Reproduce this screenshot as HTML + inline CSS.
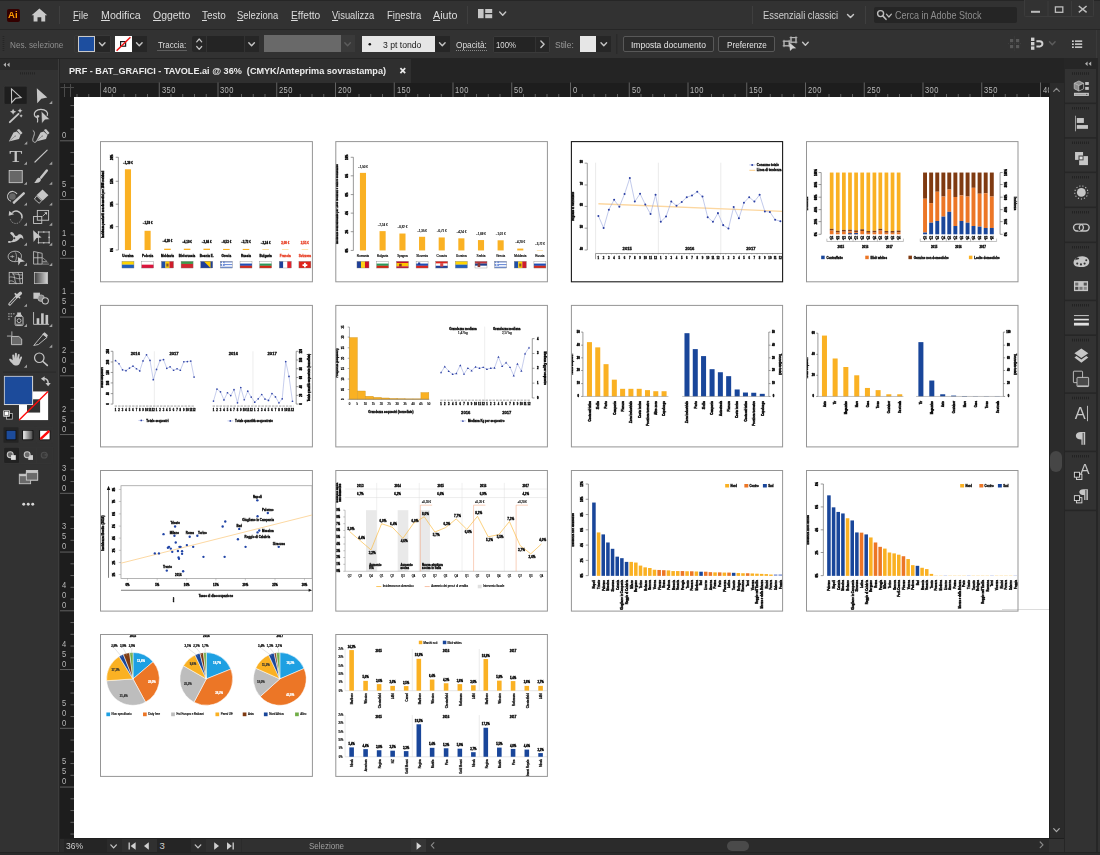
<!DOCTYPE html>
<html lang="it">
<head>
<meta charset="utf-8">
<title>PRF - BAT_GRAFICI - TAVOLE.ai @ 36% (CMYK/Anteprima sovrastampa)</title>
<style>
html,body{margin:0;padding:0;}
body{width:1100px;height:855px;overflow:hidden;background:#323232;font-family:"Liberation Sans", sans-serif;position:relative;}
#app{position:absolute;left:0;top:0;width:1100px;height:855px;overflow:hidden;background:#323232;}
#app div{position:absolute;box-sizing:border-box;}
#app svg{position:absolute;overflow:visible;}
.t{position:absolute;white-space:pre;transform-origin:0 50%;display:block;}
.rl{font-size:9.2px;line-height:10px;color:#b9b9b9;letter-spacing:0.5px;transform:scaleX(0.82);}
u{text-decoration:underline;text-underline-offset:0.5px;text-decoration-thickness:1px;}
svg text{font-family:"Liberation Sans", sans-serif;}
</style>
</head>
<body>
<div id="app">
<div class="menubar" style="left:0px;top:0px;width:1100px;height:30px;background:#323232;border-top:1px solid #262626;border-bottom:1px solid #262626;"></div>
<div style="left:6.5px;top:9px;width:13px;height:12.5px;background:#330000;border-radius:2px;"></div>
<span id="ailogo" class="t" style="left:8.2px;top:10.91px;font-size:8.5px;line-height:9.77px;color:#ff9a00;font-weight:bold;transform:scaleX(1.1294);">Ai</span>
<span id="m0" class="t" style="left:73.2px;top:8.53px;font-size:10.8px;line-height:12.41px;color:#dcdcdc;transform:scaleX(0.8782);"><u>F</u>ile</span>
<span id="m1" class="t" style="left:101.3px;top:8.53px;font-size:10.8px;line-height:12.41px;color:#dcdcdc;transform:scaleX(0.9871);"><u>M</u>odifica</span>
<span id="m2" class="t" style="left:152.8px;top:8.53px;font-size:10.8px;line-height:12.41px;color:#dcdcdc;transform:scaleX(0.9678);"><u>O</u>ggetto</span>
<span id="m3" class="t" style="left:201.8px;top:8.53px;font-size:10.8px;line-height:12.41px;color:#dcdcdc;transform:scaleX(0.9176);"><u>T</u>esto</span>
<span id="m4" class="t" style="left:237.2px;top:8.53px;font-size:10.8px;line-height:12.41px;color:#dcdcdc;transform:scaleX(0.8706);"><u>S</u>eleziona</span>
<span id="m5" class="t" style="left:290.9px;top:8.53px;font-size:10.8px;line-height:12.41px;color:#dcdcdc;transform:scaleX(0.9442);"><u>E</u>ffetto</span>
<span id="m6" class="t" style="left:332.3px;top:8.53px;font-size:10.8px;line-height:12.41px;color:#dcdcdc;transform:scaleX(0.8694);"><u>V</u>isualizza</span>
<span id="m7" class="t" style="left:386.8px;top:8.53px;font-size:10.8px;line-height:12.41px;color:#dcdcdc;transform:scaleX(0.8762);">Fi<u>n</u>estra</span>
<span id="m8" class="t" style="left:432.8px;top:8.53px;font-size:10.8px;line-height:12.41px;color:#dcdcdc;transform:scaleX(0.9909);"><u>A</u>iuto</span>
<span id="ws" class="t" style="left:763.4px;top:8.53px;font-size:10.8px;line-height:12.41px;color:#cfcfcf;transform:scaleX(0.8692);">Essenziali classici</span>
<div style="left:874px;top:7px;width:142.5px;height:16px;background:#252525;border-radius:2px;"></div>
<span id="search" class="t" style="left:894.5px;top:9.03px;font-size:10.8px;line-height:12.41px;color:#8e8e8e;transform:scaleX(0.8330);">Cerca in Adobe Stock</span>
<div style="left:1024px;top:0px;width:70px;height:16.5px;background:#323232;border:1px solid #3c3c3c;border-top:none;border-radius:0 0 2px 2px;"></div>
<div class="controlbar" style="left:0px;top:30px;width:1097px;height:28px;background:#323232;border-right:1px solid #3a3a3a;"></div>
<span id="nosel" class="t" style="left:10.4px;top:39.66px;font-size:9px;line-height:10.34px;color:#8f8f8f;transform:scaleX(0.9044);">Nes. selezione</span>
<div style="left:74px;top:35px;width:37px;height:18px;border:1px solid #383838;border-radius:2px;"></div>
<div style="left:78px;top:36px;width:17px;height:16px;background:#1d4e9f;border:1px solid #c9c9c9;"></div>
<div style="left:95px;top:36px;width:14.5px;height:16px;background:#262626;"></div>
<div style="left:115px;top:36px;width:17px;height:16px;background:#ffffff;"></div>
<div style="left:132px;top:36px;width:14.5px;height:16px;background:#262626;"></div>
<span id="traccia" class="t" style="left:157.8px;top:39.66px;font-size:9px;line-height:10.34px;color:#dcdcdc;transform:scaleX(0.8904);">Traccia:</span>
<div style="left:192px;top:36px;width:14.3px;height:16px;background:#262626;border-radius:2px 0 0 2px;"></div>
<div style="left:207px;top:36px;width:37px;height:16px;background:#242424;"></div>
<div style="left:244.6px;top:36px;width:14.4px;height:16px;background:#262626;"></div>
<div style="left:264px;top:35.4px;width:76.5px;height:17px;background:#696969;"></div>
<div style="left:340.5px;top:35.4px;width:14.5px;height:17px;background:#3a3a3a;"></div>
<div style="left:361.8px;top:36.2px;width:72.8px;height:15.8px;background:#e6e6e6;"></div>
<span id="brush" class="t" style="left:382.5px;top:39.66px;font-size:9px;line-height:10.34px;color:#1a1a1a;transform:scaleX(0.9589);">3 pt tondo</span>
<div style="left:435px;top:36px;width:14.5px;height:16px;background:#262626;"></div>
<span id="opac" class="t" style="left:456.3px;top:39.66px;font-size:9px;line-height:10.34px;color:#dcdcdc;transform:scaleX(0.9215);">Opacità:</span>
<div style="left:492.5px;top:35.5px;width:57.5px;height:17px;border:1px solid #3a3a3a;border-radius:2px;"></div>
<div style="left:493.5px;top:36.5px;width:41.5px;height:15px;background:#242424;"></div>
<span id="opv" class="t" style="left:496px;top:39.66px;font-size:9px;line-height:10.34px;color:#dcdcdc;transform:scaleX(0.8684);">100%</span>
<div style="left:535.8px;top:36.5px;width:13.2px;height:15px;background:#262626;"></div>
<span id="stile" class="t" style="left:555.3px;top:39.66px;font-size:9px;line-height:10.34px;color:#9c9c9c;transform:scaleX(0.9393);">Stile:</span>
<div style="left:580px;top:36px;width:16px;height:16px;background:#e6e6e6;"></div>
<div style="left:596px;top:36px;width:15px;height:16px;background:#262626;"></div>
<div style="left:622.5px;top:36px;width:91.3px;height:16px;background:#2c2c2c;border:1px solid #585858;border-radius:2px;"></div>
<span id="impdoc" class="t" style="left:630.6px;top:39.66px;font-size:9px;line-height:10.34px;color:#e4e4e4;transform:scaleX(0.9475);">Imposta documento</span>
<div style="left:718.2px;top:36px;width:56.7px;height:16px;background:#2c2c2c;border:1px solid #585858;border-radius:2px;"></div>
<span id="pref" class="t" style="left:726.5px;top:39.66px;font-size:9px;line-height:10.34px;color:#e4e4e4;transform:scaleX(0.9039);">Preferenze</span>
<div class="tabbar" style="left:0px;top:58px;width:1100px;height:24.5px;background:#242424;"></div>
<div class="tab" style="left:60px;top:59px;width:351px;height:23.5px;background:#2f2f2f;"></div>
<span id="tabtitle" class="t" style="left:68.5px;top:66.07px;font-size:9.2px;line-height:10.57px;color:#ececec;font-weight:bold;transform:scaleX(0.9911);">PRF - BAT_GRAFICI - TAVOLE.ai @ 36%  (CMYK/Anteprima sovrastampa)</span>
<div class="rulers" style="left:60px;top:82.5px;width:989px;height:755.5px;background:#1d1d1d;"></div>
<div class="canvas" style="left:74px;top:97px;width:975px;height:741px;background:#ffffff;"></div>
<span class="t rl" style="left:102.80px;top:84.6px;">400</span>
<span class="t rl" style="left:161.55px;top:84.6px;">350</span>
<span class="t rl" style="left:220.30px;top:84.6px;">300</span>
<span class="t rl" style="left:279.05px;top:84.6px;">250</span>
<span class="t rl" style="left:337.80px;top:84.6px;">200</span>
<span class="t rl" style="left:396.55px;top:84.6px;">150</span>
<span class="t rl" style="left:455.30px;top:84.6px;">100</span>
<span class="t rl" style="left:514.05px;top:84.6px;">50</span>
<span class="t rl" style="left:572.80px;top:84.6px;">0</span>
<span class="t rl" style="left:631.55px;top:84.6px;">50</span>
<span class="t rl" style="left:690.30px;top:84.6px;">100</span>
<span class="t rl" style="left:749.05px;top:84.6px;">150</span>
<span class="t rl" style="left:807.80px;top:84.6px;">200</span>
<span class="t rl" style="left:866.55px;top:84.6px;">250</span>
<span class="t rl" style="left:925.30px;top:84.6px;">300</span>
<span class="t rl" style="left:984.05px;top:84.6px;">350</span>
<div style="left:1042.8px;top:84px;width:6.2000000000000455px;height:12px;overflow:hidden;"><span class="t rl" style="left:0;top:0.6px;">400</span></div>
<span class="t rl" style="left:61.6px;top:130.20px;">0</span>
<span class="t rl" style="left:61.6px;top:178.85px;">5</span>
<span class="t rl" style="left:61.6px;top:188.95px;">0</span>
<span class="t rl" style="left:61.6px;top:227.50px;">1</span>
<span class="t rl" style="left:61.6px;top:237.60px;">0</span>
<span class="t rl" style="left:61.6px;top:247.70px;">0</span>
<span class="t rl" style="left:61.6px;top:286.25px;">1</span>
<span class="t rl" style="left:61.6px;top:296.35px;">5</span>
<span class="t rl" style="left:61.6px;top:306.45px;">0</span>
<span class="t rl" style="left:61.6px;top:345.00px;">2</span>
<span class="t rl" style="left:61.6px;top:355.10px;">0</span>
<span class="t rl" style="left:61.6px;top:365.20px;">0</span>
<span class="t rl" style="left:61.6px;top:403.75px;">2</span>
<span class="t rl" style="left:61.6px;top:413.85px;">5</span>
<span class="t rl" style="left:61.6px;top:423.95px;">0</span>
<span class="t rl" style="left:61.6px;top:462.50px;">3</span>
<span class="t rl" style="left:61.6px;top:472.60px;">0</span>
<span class="t rl" style="left:61.6px;top:482.70px;">0</span>
<span class="t rl" style="left:61.6px;top:521.25px;">3</span>
<span class="t rl" style="left:61.6px;top:531.35px;">5</span>
<span class="t rl" style="left:61.6px;top:541.45px;">0</span>
<span class="t rl" style="left:61.6px;top:580.00px;">4</span>
<span class="t rl" style="left:61.6px;top:590.10px;">0</span>
<span class="t rl" style="left:61.6px;top:600.20px;">0</span>
<span class="t rl" style="left:61.6px;top:638.75px;">4</span>
<span class="t rl" style="left:61.6px;top:648.85px;">5</span>
<span class="t rl" style="left:61.6px;top:658.95px;">0</span>
<span class="t rl" style="left:61.6px;top:697.50px;">5</span>
<span class="t rl" style="left:61.6px;top:707.60px;">0</span>
<span class="t rl" style="left:61.6px;top:717.70px;">0</span>
<span class="t rl" style="left:61.6px;top:756.25px;">5</span>
<span class="t rl" style="left:61.6px;top:766.35px;">5</span>
<span class="t rl" style="left:61.6px;top:776.45px;">0</span>
<div class="vscroll" style="left:1049px;top:82.5px;width:14.5px;height:755.5px;background:#2b2b2b;border-left:1px solid #1f1f1f;"></div>
<div style="left:1050.2px;top:450.8px;width:12px;height:21px;background:#464646;border-radius:6px;"></div>
<div class="statusbar" style="left:60px;top:838px;width:1003.5px;height:13.5px;background:#2b2b2b;border-top:1px solid #1f1f1f;"></div>
<div style="left:64px;top:839px;width:43px;height:12.5px;background:#252525;"></div>
<span id="zoomv" class="t" style="left:66.2px;top:841.00px;font-size:9.5px;line-height:10.92px;color:#d0d0d0;transform:scaleX(0.8940);">36%</span>
<div style="left:107.5px;top:839px;width:13.5px;height:12.5px;background:#2b2b2b;"></div>
<div style="left:121.5px;top:839px;width:35px;height:12.5px;background:#303030;"></div>
<div style="left:157px;top:839px;width:34px;height:12.5px;background:#252525;"></div>
<span id="abn" class="t" style="left:159.5px;top:841.20px;font-size:9.5px;line-height:10.92px;color:#d0d0d0;">3</span>
<div style="left:191.5px;top:839px;width:13.5px;height:12.5px;background:#2b2b2b;"></div>
<div style="left:205.5px;top:839px;width:35px;height:12.5px;background:#303030;"></div>
<div style="left:241.5px;top:839px;width:169px;height:12.5px;background:#303030;"></div>
<span id="seltool" class="t" style="left:308.7px;top:841.00px;font-size:9.5px;line-height:10.92px;color:#a0a0a0;transform:scaleX(0.8386);">Selezione</span>
<div style="left:411px;top:839px;width:15px;height:12.5px;background:#363636;"></div>
<div style="left:727px;top:840.5px;width:22px;height:10.5px;background:#4a4a4a;border-radius:5.5px;"></div>
<div style="left:1049px;top:838.5px;width:14.5px;height:13px;background:#323232;"></div>
<div style="left:0px;top:851.5px;width:1100px;height:3.5px;background:#2a2a2a;border-top:1px solid #232323;"></div>
<div class="toolbar-edge" style="left:0px;top:59px;width:60px;height:792.5px;background:#262626;"></div>
<div class="toolbar" style="left:0px;top:59px;width:59px;height:792.5px;background:#323232;border-right:1px solid #3c3c3c;"></div>
<div style="left:0px;top:59px;width:58px;height:10.5px;background:#2a2a2a;"></div>
<div class="dock" style="left:1063.5px;top:58px;width:36.5px;height:793.5px;background:#323232;border-left:1px solid #262626;"></div>
<div style="left:1096px;top:58px;width:1.5px;height:793.5px;background:#262626;"></div>
<div style="left:1064.5px;top:58px;width:31.5px;height:10.6px;background:#262626;"></div>
<svg class="icons" width="1100" height="855" viewBox="0 0 1100 855" style="left:0;top:0;filter:blur(0.3px);"><path d="M31.6,15.3 L39.4,8.4 L47.2,15.3 L45.2,15.3 L45.2,21.6 L41.3,21.6 L41.3,17.2 L37.5,17.2 L37.5,21.6 L33.6,21.6 L33.6,15.3 Z" fill="#c9c9c9"/>
<rect x="59" y="6" width="1" height="18" fill="#3f3f3f"/>
<rect x="467" y="6" width="1" height="18" fill="#3f3f3f"/>
<rect x="478" y="9" width="5.6" height="9.2" fill="#c6c6c6"/><rect x="485.2" y="9" width="7" height="4" fill="#c6c6c6"/><rect x="485.2" y="14.2" width="7" height="4" fill="#c6c6c6"/>
<path d="M499.7,12.0 L502.7,15.2 L505.7,12.0" fill="none" stroke="#c6c6c6" stroke-width="1.4" stroke-linecap="round" stroke-linejoin="round"/>
<rect x="752" y="6" width="1" height="18" fill="#3f3f3f"/>
<path d="M847.5,14.4 L850.5,17.6 L853.5,14.4" fill="none" stroke="#c6c6c6" stroke-width="1.4" stroke-linecap="round" stroke-linejoin="round"/>
<rect x="865" y="6" width="1" height="18" fill="#3f3f3f"/>
<circle cx="880.6" cy="13.6" r="3" fill="none" stroke="#bdbdbd" stroke-width="1.4"/><path d="M882.8,15.9 L886,19.3" stroke="#bdbdbd" stroke-width="1.6" stroke-linecap="round"/>
<path d="M886.4,14.2 L888.9,17.0 L891.4,14.2" fill="none" stroke="#bdbdbd" stroke-width="1.2" stroke-linecap="round" stroke-linejoin="round"/>
<rect x="1047.5" y="1" width="1" height="15" fill="#3c3c3c"/><rect x="1071" y="1" width="1" height="15" fill="#3c3c3c"/>
<rect x="1031" y="10.8" width="9" height="2" fill="#bdbdbd"/>
<rect x="1055.4" y="6.9" width="7.4" height="5.4" fill="none" stroke="#bdbdbd" stroke-width="1.3"/>
<path d="M1078.8,6 L1086.6,12.4 M1086.6,6 L1078.8,12.4" stroke="#bdbdbd" stroke-width="1.5"/>
<path d="M3.5,36 V52" stroke="#262626" stroke-width="1.6" stroke-dasharray="1 1"/>
<path d="M99.4,42.8 L102.2,45.8 L105.0,42.8" fill="none" stroke="#c4c4c4" stroke-width="1.4" stroke-linecap="round" stroke-linejoin="round"/>
<rect x="120.6" y="41.6" width="5" height="4.6" fill="none" stroke="#1a1a1a" stroke-width="1.2"/><path d="M116.6,50.8 L130.4,37.2" stroke="#f01414" stroke-width="1.5"/>
<path d="M136.5,42.8 L139.3,45.8 L142.10000000000002,42.8" fill="none" stroke="#c4c4c4" stroke-width="1.4" stroke-linecap="round" stroke-linejoin="round"/>
<path d="M157.5,50.5 H186.5" stroke="#8a8a8a" stroke-width="1" stroke-dasharray="1 1"/>
<path d="M196.7,41.8 L199.2,39.0 L201.7,41.8" fill="none" stroke="#c4c4c4" stroke-width="1.2" stroke-linecap="round" stroke-linejoin="round"/>
<path d="M196.7,46.5 L199.2,49.3 L201.7,46.5" fill="none" stroke="#c4c4c4" stroke-width="1.2" stroke-linecap="round" stroke-linejoin="round"/>
<path d="M248.79999999999998,42.8 L251.6,45.8 L254.4,42.8" fill="none" stroke="#c4c4c4" stroke-width="1.4" stroke-linecap="round" stroke-linejoin="round"/>
<path d="M344.8,42.8 L347.6,45.8 L350.40000000000003,42.8" fill="none" stroke="#5c5c5c" stroke-width="1.4" stroke-linecap="round" stroke-linejoin="round"/>
<circle cx="369.8" cy="44.2" r="1.3" fill="#111"/>
<path d="M439.5,42.8 L442.3,45.8 L445.1,42.8" fill="none" stroke="#c4c4c4" stroke-width="1.4" stroke-linecap="round" stroke-linejoin="round"/>
<path d="M456,50.5 H487.5" stroke="#8a8a8a" stroke-width="1" stroke-dasharray="1 1"/>
<path d="M540.9,41.0 L544.1,44.2 L540.9,47.400000000000006" fill="none" stroke="#c4c4c4" stroke-width="1.4" stroke-linecap="round" stroke-linejoin="round"/>
<path d="M601.0,42.8 L603.8,45.8 L606.5999999999999,42.8" fill="none" stroke="#c4c4c4" stroke-width="1.4" stroke-linecap="round" stroke-linejoin="round"/>
<rect x="616" y="34" width="1.4" height="20" fill="#2a2a2a"/>
<rect x="784" y="41.2" width="5.2" height="4.6" fill="none" stroke="#b8b8b8" stroke-width="1"/><rect x="791" y="37.6" width="5" height="4.6" fill="none" stroke="#b8b8b8" stroke-width="1"/><path d="M782.6,41.2 h8 M782.6,45.8 h8 M784,39.8 v7.4 M789.2,39.8 v7.4 M789.6,37.6 h7.8 M789.6,42.2 h7.8 M791,36.2 v7.4 M796,36.2 v7.4" stroke="#b8b8b8" stroke-width="0.8" fill="none"/><path d="M789.2,42.6 L796.2,48.2 L792.6,48.4 L790,51 Z" fill="#d0d0d0"/>
<path d="M802.6,42.2 L805.4,45.2 L808.1999999999999,42.2" fill="none" stroke="#c4c4c4" stroke-width="1.4" stroke-linecap="round" stroke-linejoin="round"/>
<g fill="#585858"><rect x="1010" y="39" width="3.2" height="3.2"/><rect x="1016" y="39" width="3.2" height="3.2"/><rect x="1010" y="45" width="3.2" height="3.2"/><rect x="1016" y="45" width="3.2" height="3.2"/></g><path d="M1014.6,36.5 V51 M1008,43.6 H1021.5" stroke="#444" stroke-width="0.8" stroke-dasharray="1 1"/>
<g fill="#d0d0d0"><rect x="1031" y="37.6" width="3.4" height="3.4"/><rect x="1031" y="42" width="3.4" height="3.4"/><rect x="1031" y="46.4" width="3.4" height="3.4"/></g><path d="M1036.4,41.2 H1039.8 A2.6,2.6 0 0 1 1039.8,46.4 H1036.4" fill="none" stroke="#d0d0d0" stroke-width="2"/>
<path d="M1049.5,41.7 L1052.3,44.7 L1055.1,41.7" fill="none" stroke="#5c5c5c" stroke-width="1.4" stroke-linecap="round" stroke-linejoin="round"/>
<g fill="#d0d0d0"><rect x="1072" y="40.4" width="1.8" height="1.6"/><rect x="1072" y="43.4" width="1.8" height="1.6"/><rect x="1072" y="46.4" width="1.8" height="1.6"/><rect x="1075" y="40.4" width="7.2" height="1.5"/><rect x="1075" y="43.4" width="7.2" height="1.5"/><rect x="1075" y="46.4" width="7.2" height="1.5"/></g>
<path d="M400.4,68.2 L405.2,73.2 M405.2,68.2 L400.4,73.2" stroke="#e8e8e8" stroke-width="1.7"/>
<path d="M64.5,84 V97 M70.5,84 V97 M60.5,87.5 H74" stroke="#4a4a4a" stroke-width="1" fill="none"/>
<path d="M77.00,94 V97 M88.75,94 V97 M100.50,82.5 V97 M112.25,94 V97 M124.00,94 V97 M135.75,94 V97 M147.50,94 V97 M159.25,82.5 V97 M171.00,94 V97 M182.75,94 V97 M194.50,94 V97 M206.25,94 V97 M218.00,82.5 V97 M229.75,94 V97 M241.50,94 V97 M253.25,94 V97 M265.00,94 V97 M276.75,82.5 V97 M288.50,94 V97 M300.25,94 V97 M312.00,94 V97 M323.75,94 V97 M335.50,82.5 V97 M347.25,94 V97 M359.00,94 V97 M370.75,94 V97 M382.50,94 V97 M394.25,82.5 V97 M406.00,94 V97 M417.75,94 V97 M429.50,94 V97 M441.25,94 V97 M453.00,82.5 V97 M464.75,94 V97 M476.50,94 V97 M488.25,94 V97 M500.00,94 V97 M511.75,82.5 V97 M523.50,94 V97 M535.25,94 V97 M547.00,94 V97 M558.75,94 V97 M570.50,82.5 V97 M582.25,94 V97 M594.00,94 V97 M605.75,94 V97 M617.50,94 V97 M629.25,82.5 V97 M641.00,94 V97 M652.75,94 V97 M664.50,94 V97 M676.25,94 V97 M688.00,82.5 V97 M699.75,94 V97 M711.50,94 V97 M723.25,94 V97 M735.00,94 V97 M746.75,82.5 V97 M758.50,94 V97 M770.25,94 V97 M782.00,94 V97 M793.75,94 V97 M805.50,82.5 V97 M817.25,94 V97 M829.00,94 V97 M840.75,94 V97 M852.50,94 V97 M864.25,82.5 V97 M876.00,94 V97 M887.75,94 V97 M899.50,94 V97 M911.25,94 V97 M923.00,82.5 V97 M934.75,94 V97 M946.50,94 V97 M958.25,94 V97 M970.00,94 V97 M981.75,82.5 V97 M993.50,94 V97 M1005.25,94 V97 M1017.00,94 V97 M1028.75,94 V97 M1040.50,82.5 V97" stroke="#626262" stroke-width="1" fill="none"/>
<path d="M70.5,105.55 H74 M70.5,117.30 H74 M70.5,129.05 H74 M60,140.80 H74 M70.5,152.55 H74 M70.5,164.30 H74 M70.5,176.05 H74 M70.5,187.80 H74 M60,199.55 H74 M70.5,211.30 H74 M70.5,223.05 H74 M70.5,234.80 H74 M70.5,246.55 H74 M60,258.30 H74 M70.5,270.05 H74 M70.5,281.80 H74 M70.5,293.55 H74 M70.5,305.30 H74 M60,317.05 H74 M70.5,328.80 H74 M70.5,340.55 H74 M70.5,352.30 H74 M70.5,364.05 H74 M60,375.80 H74 M70.5,387.55 H74 M70.5,399.30 H74 M70.5,411.05 H74 M70.5,422.80 H74 M60,434.55 H74 M70.5,446.30 H74 M70.5,458.05 H74 M70.5,469.80 H74 M70.5,481.55 H74 M60,493.30 H74 M70.5,505.05 H74 M70.5,516.80 H74 M70.5,528.55 H74 M70.5,540.30 H74 M60,552.05 H74 M70.5,563.80 H74 M70.5,575.55 H74 M70.5,587.30 H74 M70.5,599.05 H74 M60,610.80 H74 M70.5,622.55 H74 M70.5,634.30 H74 M70.5,646.05 H74 M70.5,657.80 H74 M60,669.55 H74 M70.5,681.30 H74 M70.5,693.05 H74 M70.5,704.80 H74 M70.5,716.55 H74 M60,728.30 H74 M70.5,740.05 H74 M70.5,751.80 H74 M70.5,763.55 H74 M70.5,775.30 H74 M60,787.05 H74 M70.5,798.80 H74 M70.5,810.55 H74 M70.5,822.30 H74 M70.5,834.05 H74" stroke="#626262" stroke-width="1" fill="none"/>
<path d="M1053.7,91.3 L1056.5,88.3 L1059.3,91.3" fill="none" stroke="#8c8c8c" stroke-width="1.2" stroke-linecap="round" stroke-linejoin="round"/>
<path d="M1053.7,828.7 L1056.5,831.7 L1059.3,828.7" fill="none" stroke="#a8a8a8" stroke-width="1.2" stroke-linecap="round" stroke-linejoin="round"/>
<path d="M110.8,844.9 L113.6,847.9 L116.39999999999999,844.9" fill="none" stroke="#c4c4c4" stroke-width="1.3" stroke-linecap="round" stroke-linejoin="round"/>
<path d="M129.2,842.4 V849.6" stroke="#d0d0d0" stroke-width="1.3"/><path d="M135.6,842.2 L135.6,849.8 L130.6,846 Z" fill="#d0d0d0"/>
<path d="M148.8,842.2 L148.8,849.8 L144,846 Z" fill="#d0d0d0"/>
<path d="M195.2,844.9 L198,847.9 L200.8,844.9" fill="none" stroke="#c4c4c4" stroke-width="1.3" stroke-linecap="round" stroke-linejoin="round"/>
<path d="M214.2,842.2 L214.2,849.8 L219,846 Z" fill="#d0d0d0"/>
<path d="M227,842.2 L227,849.8 L231.8,846 Z" fill="#d0d0d0"/><path d="M233.2,842.4 V849.6" stroke="#d0d0d0" stroke-width="1.3"/>
<path d="M416.6,842.2 L416.6,849.8 L421.4,846 Z" fill="#d6d6d6"/>
<path d="M433.90000000000003,842.6999999999999 L431.3,845.4 L433.90000000000003,848.1" fill="none" stroke="#8a8a8a" stroke-width="1.1" stroke-linecap="round" stroke-linejoin="round"/>
<path d="M1040.1999999999998,842.0 L1043.0,844.8 L1040.1999999999998,847.5999999999999" fill="none" stroke="#8a8a8a" stroke-width="1.2" stroke-linecap="round" stroke-linejoin="round"/>
<path d="M6,62.6 L3.4,64.8 L6,67 Z M9.6,62.6 L7,64.8 L9.6,67 Z" fill="#b0b0b0"/>
<path d="M20,73.4 H35.5" stroke="#242424" stroke-width="2.4" stroke-dasharray="1 1"/>
<path d="M1087.6,61.6 L1085,63.8 L1087.6,66 Z M1091.2,61.6 L1088.6,63.8 L1091.2,66 Z" fill="#b0b0b0"/>
<g transform="translate(0,80) scale(0.081855)"><rect x="50" y="75" width="282" height="222" rx="14" fill="#1e1e1e" stroke="#3b3b3b" stroke-width="7"/><path d="M140,108 L258,214 L190,224 L142,276 Z" fill="none" stroke="#c6c6c6" stroke-width="13" stroke-linejoin="miter"/><path d="M450,100 L578,215 L505,228 L455,285 Z" fill="#c6c6c6"/><path d="M600,292 h38 v-38 Z" fill="#a0a0a0"/><path d="M120,515 L226,414" stroke="#c6c6c6" stroke-width="23" stroke-linecap="round"/><polygon points="160.0,350.0 172.0,376.0 198.0,388.0 172.0,400.0 160.0,426.0 148.0,400.0 122.0,388.0 148.0,376.0" fill="#c6c6c6"/><polygon points="245.0,345.0 254.2,365.8 275.0,375.0 254.2,384.2 245.0,405.0 235.8,384.2 215.0,375.0 235.8,365.8" fill="#c6c6c6"/><polygon points="258.0,417.0 265.8,429.2 278.0,437.0 265.8,444.8 258.0,457.0 250.2,444.8 238.0,437.0 250.2,429.2" fill="#c6c6c6"/><path d="M578,432 C592,392 560,360 500,360 C440,360 414,395 420,425 C426,456 456,462 470,450 C480,438 464,428 454,440 C446,456 472,482 458,512" fill="none" stroke="#c6c6c6" stroke-width="15" stroke-linecap="round"/><path d="M505,383 L606,480 L548,487 L512,530 Z" fill="#c6c6c6" stroke="#323232" stroke-width="5"/><path d="M108,752 L165,642 L205,628 L250,672 L232,722 Z" fill="#c6c6c6"/><path d="M205,612 L232,598 L275,648 L252,668 Z" fill="#c6c6c6"/><path d="M120,742 L182,688" stroke="#555" stroke-width="6"/><circle cx="186" cy="684" r="7" fill="#555"/><path d="M295,787 h38 v-38 Z" fill="#a0a0a0"/><path d="M438,752 L495,642 L535,628 L580,672 L562,722 Z" fill="#c6c6c6"/><path d="M535,612 L562,598 L605,648 L582,668 Z" fill="#c6c6c6"/><path d="M450,742 L512,688" stroke="#555" stroke-width="6"/><circle cx="516" cy="684" r="7" fill="#555"/><path d="M405,618 C446,640 400,700 400,730 C400,765 436,772 444,750" fill="none" stroke="#c6c6c6" stroke-width="11" stroke-linecap="round"/></g>
<g transform="translate(0,145) scale(0.081855)"><text x="0" y="0" font-size="212" text-anchor="middle" fill="#c6c6c6" stroke="#c6c6c6" stroke-width="3" transform="translate(193,208) scale(1.2,1)" style="font-family:'Liberation Serif',serif">T</text><path d="M292,240 h38 v-38 Z" fill="#a0a0a0"/><path d="M427,208 L576,62" stroke="#c6c6c6" stroke-width="14" stroke-linecap="round"/><path d="M600,240 h38 v-38 Z" fill="#a0a0a0"/><rect x="112" y="312" width="160" height="148" fill="#676767" stroke="#c6c6c6" stroke-width="11"/><path d="M292,487 h38 v-38 Z" fill="#a0a0a0"/><path d="M502,398 L572,312" stroke="#c6c6c6" stroke-width="30" stroke-linecap="round"/><path d="M418,464 C442,442 444,410 468,400 C492,394 508,416 496,438 C482,462 452,468 418,464 Z" fill="#c6c6c6"/><path d="M600,487 h38 v-38 Z" fill="#a0a0a0"/><path d="M135,688 A62,62 0 1 1 208,600" fill="none" stroke="#c6c6c6" stroke-width="13"/><circle cx="152" cy="630" r="40" fill="#666"/><path d="M172,702 L290,590" stroke="#c6c6c6" stroke-width="30" stroke-linecap="round"/><path d="M160,716 L152,690 L186,716 Z" fill="#c6c6c6"/><path d="M292,740 h38 v-38 Z" fill="#a0a0a0"/><path d="M520,545 L592,615 L520,682 L448,612 Z" fill="#c6c6c6"/><path d="M448,622 L510,682 L478,712 L420,660 Z" fill="none" stroke="#c6c6c6" stroke-width="11" stroke-linejoin="round"/><path d="M600,740 h38 v-38 Z" fill="#a0a0a0"/></g>
<g transform="translate(0,205) scale(0.081855)"><path d="M150,92 A72,72 0 0 1 266,165" fill="none" stroke="#c6c6c6" stroke-width="19"/><path d="M106,132 L112,74 L172,112 Z" fill="#c6c6c6"/><path d="M262,170 A70,70 0 0 1 125,170" fill="none" stroke="#c6c6c6" stroke-width="10" stroke-dasharray="10 12"/><path d="M292,252 h38 v-38 Z" fill="#a0a0a0"/><rect x="410" y="140" width="100" height="86" fill="none" stroke="#c6c6c6" stroke-width="11"/><rect x="456" y="66" width="138" height="120" fill="none" stroke="#c6c6c6" stroke-width="11"/><path d="M520,138 L566,94" stroke="#c6c6c6" stroke-width="11"/><path d="M540,88 H574 V122 Z" fill="#c6c6c6"/><path d="M600,252 h38 v-38 Z" fill="#a0a0a0"/><path d="M100,452 C150,450 170,420 160,390 C150,360 120,360 125,340 C135,320 160,330 170,350 C185,390 215,380 225,360 C250,350 290,370 285,420 C270,400 250,395 240,410 C215,445 170,465 100,452 Z" fill="#c6c6c6"/><path d="M100,462 h30 v-22 h-30 Z" fill="#c6c6c6"/><circle cx="175" cy="405" r="12" fill="#323232"/><path d="M292,497 h38 v-38 Z" fill="#a0a0a0"/><rect x="470" y="330" width="130" height="132" fill="none" stroke="#c6c6c6" stroke-width="10"/><circle cx="470" cy="330" r="10" fill="#c6c6c6"/><circle cx="535" cy="330" r="10" fill="#c6c6c6"/><circle cx="600" cy="330" r="10" fill="#c6c6c6"/><circle cx="600" cy="396" r="10" fill="#c6c6c6"/><circle cx="600" cy="462" r="10" fill="#c6c6c6"/><circle cx="535" cy="462" r="10" fill="#c6c6c6"/><circle cx="470" cy="462" r="10" fill="#c6c6c6"/><path d="M405,308 L508,396 L446,402 L410,452 Z" fill="#c6c6c6"/><path d="M600,497 h38 v-38 Z" fill="#a0a0a0"/><path d="M100,630 C100,590 140,565 185,565 C235,565 265,595 262,630 C260,660 240,690 185,692 C130,692 100,665 100,630 Z" fill="none" stroke="#c6c6c6" stroke-width="11"/><path d="M125,630 H175 M150,612 V648 M190,580 C205,610 205,650 190,685" stroke="#c6c6c6" stroke-width="8" fill="none"/><path d="M218,635 L305,690 L250,697 L225,740 Z" fill="#c6c6c6"/><path d="M292,745 h38 v-38 Z" fill="#a0a0a0"/><path d="M410,568 L515,590 V722 H410 Z M410,645 H515 M462,580 V722" fill="none" stroke="#c6c6c6" stroke-width="10"/><path d="M515,640 L575,690 H515 M515,722 H600" fill="none" stroke="#9a9a9a" stroke-width="10"/><path d="M520,700 H590" stroke="#7a7a7a" stroke-width="8"/><path d="M600,745 h38 v-38 Z" fill="#a0a0a0"/></g>
<g transform="translate(0,265) scale(0.081855)"><rect x="112" y="90" width="162" height="138" fill="none" stroke="#c6c6c6" stroke-width="10"/><path d="M112,150 C160,130 220,190 274,160 M150,90 C190,130 170,190 200,228 M215,90 C250,120 235,200 250,228 M112,200 C150,180 170,210 200,228 M150,110 C190,100 250,130 274,120" fill="none" stroke="#c6c6c6" stroke-width="9"/><defs><linearGradient id="gradtool" x1="0" y1="0" x2="1" y2="0"><stop offset="0" stop-color="#3c3c3c"/><stop offset="1" stop-color="#d8d8d8"/></linearGradient><linearGradient id="gradbtn" x1="0" y1="0" x2="1" y2="0"><stop offset="0" stop-color="#f0f0f0"/><stop offset="1" stop-color="#4a4a4a"/></linearGradient></defs><rect x="420" y="92" width="162" height="136" fill="url(#gradtool)" stroke="#c6c6c6" stroke-width="9"/><path d="M118,480 L205,385" stroke="#c6c6c6" stroke-width="34" stroke-linecap="round"/><path d="M122,476 L200,392" stroke="#323232" stroke-width="13" stroke-linecap="round"/><path d="M205,385 L250,345" stroke="#c6c6c6" stroke-width="40" stroke-linecap="round"/><path d="M185,350 L240,400" stroke="#c6c6c6" stroke-width="18" stroke-linecap="round"/><path d="M292,510 h38 v-38 Z" fill="#a0a0a0"/><rect x="408" y="338" width="80" height="75" fill="#c6c6c6"/><circle cx="502" cy="405" r="40" fill="#8a8a8a" stroke="#c6c6c6" stroke-width="9"/><circle cx="553" cy="438" r="38" fill="#323232" stroke="#c6c6c6" stroke-width="13"/><rect x="185" y="628" width="96" height="112" rx="14" fill="none" stroke="#c6c6c6" stroke-width="12"/><rect x="210" y="580" width="46" height="34" fill="#c6c6c6"/><rect x="198" y="608" width="70" height="16" fill="#c6c6c6"/><circle cx="233" cy="680" r="24" fill="none" stroke="#c6c6c6" stroke-width="11"/><rect x="193" y="716" width="80" height="18" fill="#8a8a8a"/><rect x="100" y="588" width="18" height="16" fill="#9a9a9a"/><rect x="130" y="588" width="18" height="16" fill="#9a9a9a"/><rect x="160" y="588" width="18" height="16" fill="#9a9a9a"/><rect x="100" y="620" width="18" height="16" fill="#9a9a9a"/><rect x="130" y="620" width="18" height="16" fill="#9a9a9a"/><rect x="100" y="652" width="18" height="16" fill="#9a9a9a"/><path d="M292,757 h38 v-38 Z" fill="#a0a0a0"/><path d="M410,575 V725 H598" fill="none" stroke="#c6c6c6" stroke-width="11"/><rect x="448" y="650" width="32" height="72" fill="#c6c6c6"/><rect x="502" y="590" width="32" height="132" fill="#c6c6c6"/><rect x="556" y="610" width="32" height="112" fill="#c6c6c6"/><path d="M600,757 h38 v-38 Z" fill="#a0a0a0"/></g>
<g transform="translate(0,325) scale(0.081855)"><path d="M140,140 H230 L265,172 V240 H140 Z" fill="#6a6a6a" stroke="#c6c6c6" stroke-width="11" stroke-linejoin="round"/><path d="M145,78 V140 M85,135 H140" stroke="#c6c6c6" stroke-width="10"/><path d="M412,250 L530,110 L576,150 L470,238 Z" fill="none" stroke="#c6c6c6" stroke-width="11" stroke-linejoin="round"/><path d="M515,112 L545,88 L585,124 L570,152 Z" fill="#c6c6c6"/><path d="M600,277 h38 v-38 Z" fill="#a0a0a0"/><path d="M150,470 C120,440 110,425 112,415 C125,405 140,415 155,430 L150,372 C150,355 172,355 174,372 L180,410 L182,350 C184,335 205,335 206,350 L206,410 L218,362 C222,348 242,352 240,368 L232,420 L250,392 C258,380 275,388 268,404 L240,470 C225,505 170,505 150,470 Z" fill="#c6c6c6"/><path d="M292,522 h38 v-38 Z" fill="#a0a0a0"/><circle cx="480" cy="400" r="58" fill="none" stroke="#c6c6c6" stroke-width="15"/><path d="M524,446 L578,494" stroke="#c6c6c6" stroke-width="20" stroke-linecap="round"/></g>
<rect x="3" y="371.6" width="53" height="1" fill="#2a2a2a"/>
<g transform="translate(0,370) scale(0.081855)"><rect x="232" y="262" width="356" height="350" fill="#ffffff"/><rect x="330" y="358" width="160" height="162" fill="#323232"/><path d="M234,610 L586,264" stroke="#ff0a0a" stroke-width="17"/><rect x="48" y="72" width="356" height="356" fill="#d8d8d8"/><rect x="58" y="82" width="334" height="334" fill="#1c4b9b"/><path d="M535,105 C575,105 590,130 588,165" fill="none" stroke="#c6c6c6" stroke-width="18"/><path d="M500,108 L545,75 L545,140 Z" fill="#c6c6c6"/><path d="M555,160 L620,160 L588,198 Z" fill="#c6c6c6"/><rect x="78" y="532" width="72" height="68" fill="#111" stroke="#d0d0d0" stroke-width="9"/><rect x="45" y="498" width="72" height="68" fill="#ffffff" stroke="#d0d0d0" stroke-width="9"/><rect x="55" y="508" width="52" height="48" fill="#fff" stroke="#222" stroke-width="6"/><rect x="42" y="700" width="185" height="190" rx="10" fill="#242424"/><rect x="232" y="700" width="205" height="190" rx="10" fill="none" stroke="#3a3a3a" stroke-width="5"/><rect x="442" y="700" width="200" height="190" rx="10" fill="none" stroke="#3a3a3a" stroke-width="5"/><rect x="70" y="732" width="130" height="125" rx="10" fill="#111"/><rect x="80" y="742" width="110" height="105" fill="#1c4b9b"/><rect x="272" y="732" width="136" height="125" rx="10" fill="#111"/><rect x="282" y="742" width="116" height="105" fill="url(#gradbtn)"/><rect x="480" y="732" width="136" height="125" rx="10" fill="#111"/><rect x="490" y="742" width="116" height="105" fill="#fff"/><path d="M494,845 L602,744" stroke="#ff0a0a" stroke-width="30"/></g>
<g transform="translate(0,440) scale(0.081855)"><rect x="50" y="95" width="182" height="185" rx="12" fill="#222"/><rect x="48" y="88" width="596" height="200" rx="12" fill="none" stroke="#3a3a3a" stroke-width="5"/><path d="M240,90 V286 M446,90 V286" stroke="#3a3a3a" stroke-width="5"/><circle cx="125" cy="180" r="36" fill="#6a6a6a" stroke="#c6c6c6" stroke-width="13"/><rect x="135" y="185" width="58" height="58" fill="#e0e0e0"/><rect x="345" y="185" width="58" height="58" fill="#d0d0d0"/><circle cx="332" cy="180" r="36" fill="#6a6a6a" stroke="#c6c6c6" stroke-width="13"/><circle cx="540" cy="185" r="36" fill="#3a3a3a" stroke="#4e4e4e" stroke-width="13"/><rect x="545" y="170" width="40" height="22" fill="#4a4a4a"/><rect x="322" y="372" width="138" height="118" fill="#6a6a6a" stroke="#c6c6c6" stroke-width="11"/><rect x="322" y="372" width="138" height="26" fill="#c6c6c6"/><rect x="236" y="418" width="138" height="116" fill="#6a6a6a" stroke="#c6c6c6" stroke-width="11"/><rect x="236" y="418" width="138" height="24" fill="#c6c6c6"/><rect x="322" y="398" width="138" height="92" fill="#6a6a6a" stroke="#c6c6c6" stroke-width="11"/><circle cx="290" cy="785" r="18" fill="#d6d6d6"/><circle cx="345" cy="785" r="18" fill="#d6d6d6"/><circle cx="400" cy="785" r="18" fill="#d6d6d6"/></g>
<rect x="1064.5" y="102.5" width="32" height="1.6" fill="#262626"/>
<rect x="1064.5" y="137.1" width="32" height="1.6" fill="#262626"/>
<rect x="1064.5" y="171.5" width="32" height="1.6" fill="#262626"/>
<rect x="1064.5" y="206.5" width="32" height="1.6" fill="#262626"/>
<rect x="1064.5" y="241.5" width="32" height="1.6" fill="#262626"/>
<rect x="1064.5" y="299.6" width="32" height="1.6" fill="#262626"/>
<rect x="1064.5" y="334.4" width="32" height="1.6" fill="#262626"/>
<rect x="1064.5" y="392.3" width="32" height="1.6" fill="#262626"/>
<rect x="1064.5" y="450.6" width="32" height="1.6" fill="#262626"/>
<rect x="1064.5" y="509.6" width="32" height="1.6" fill="#262626"/>
<path d="M1072,73.5 H1089.5" stroke="#222" stroke-width="2.6" stroke-dasharray="1 1"/>
<path d="M1072,108.2 H1089.5" stroke="#222" stroke-width="2.6" stroke-dasharray="1 1"/>
<path d="M1072,142.8 H1089.5" stroke="#222" stroke-width="2.6" stroke-dasharray="1 1"/>
<path d="M1072,177.2 H1089.5" stroke="#222" stroke-width="2.6" stroke-dasharray="1 1"/>
<path d="M1072,212.2 H1089.5" stroke="#222" stroke-width="2.6" stroke-dasharray="1 1"/>
<path d="M1072,247.2 H1089.5" stroke="#222" stroke-width="2.6" stroke-dasharray="1 1"/>
<path d="M1072,305.3 H1089.5" stroke="#222" stroke-width="2.6" stroke-dasharray="1 1"/>
<path d="M1072,340.1 H1089.5" stroke="#222" stroke-width="2.6" stroke-dasharray="1 1"/>
<path d="M1072,398.0 H1089.5" stroke="#222" stroke-width="2.6" stroke-dasharray="1 1"/>
<path d="M1072,456.3 H1089.5" stroke="#222" stroke-width="2.6" stroke-dasharray="1 1"/>
<g transform="translate(1040,55) scale(0.081855)"><path d="M475,318 L532,345 L532,412 L475,440 L418,412 L418,345 Z" fill="#8a8a8a" stroke="#c6c6c6" stroke-width="9" stroke-linejoin="round"/><path d="M418,345 L475,372 L532,345 M475,372 V440" fill="none" stroke="#c6c6c6" stroke-width="8"/><path d="M480,378 L528,354 V408 L480,434 Z" fill="#2e2e2e"/><rect x="552" y="330" width="44" height="36" fill="#c6c6c6"/><rect x="552" y="390" width="44" height="36" fill="#c6c6c6"/><rect x="415" y="462" width="182" height="38" fill="#c6c6c6"/><path d="M425,481 H560" stroke="#8a8a8a" stroke-width="8"/><circle cx="572" cy="481" r="8" fill="#333"/><rect x="428" y="742" width="9" height="190" fill="#c6c6c6"/><rect x="450" y="770" width="86" height="60" fill="#c6c6c6"/><rect x="450" y="856" width="136" height="46" fill="#c6c6c6"/></g>
<g transform="translate(1040,125) scale(0.081855)"><rect x="428" y="330" width="98" height="96" fill="#c6c6c6"/><rect x="478" y="380" width="108" height="110" fill="#c6c6c6"/><rect x="470" y="372" width="62" height="60" fill="#4a4a4a"/><rect x="484" y="386" width="36" height="34" fill="#e0e0e0"/><circle cx="505" cy="824" r="54" fill="#c6c6c6"/><circle cx="505" cy="824" r="80" fill="none" stroke="#c6c6c6" stroke-width="13" stroke-dasharray="14 24"/></g>
<g transform="translate(1040,195) scale(0.081855)"><rect x="410" y="356" width="120" height="84" rx="42" fill="none" stroke="#c6c6c6" stroke-width="17"/><rect x="480" y="356" width="120" height="84" rx="42" fill="none" stroke="#c6c6c6" stroke-width="17"/><path d="M470,440 L500,420" stroke="#323232" stroke-width="14"/><path d="M410,835 C405,790 450,745 520,748 C580,750 610,790 600,830 C590,870 540,880 500,880 C450,880 415,870 410,835 Z" fill="#c6c6c6"/><circle cx="455" cy="838" r="13" fill="#323232"/><circle cx="500" cy="848" r="13" fill="#323232"/><circle cx="545" cy="838" r="13" fill="#323232"/><circle cx="565" cy="798" r="12" fill="#323232"/><path d="M430,800 C450,780 470,800 480,770 L440,760 Z" fill="#323232"/></g>
<g transform="translate(1040,265) scale(0.081855)"><rect x="415" y="197" width="172" height="122" fill="#c6c6c6"/><rect x="430" y="215" width="38" height="36" fill="#6e6e6e"/><rect x="482" y="215" width="38" height="36" fill="#c4c4c4"/><rect x="534" y="215" width="38" height="36" fill="#555"/><rect x="430" y="267" width="38" height="36" fill="#4a4a4a"/><rect x="482" y="267" width="38" height="36" fill="#777"/><rect x="534" y="267" width="38" height="36" fill="#8a8a8a"/><rect x="415" y="612" width="182" height="12" fill="#c6c6c6"/><rect x="415" y="657" width="182" height="20" fill="#e0e0e0"/><rect x="415" y="706" width="182" height="34" fill="#e0e0e0"/></g>
<g transform="translate(1040,335) scale(0.081855)"><path d="M505,165 L590,222 L505,280 L420,222 Z" fill="#c6c6c6"/><path d="M420,275 L445,258 L505,300 L565,258 L590,275 L505,340 Z" fill="#c6c6c6"/><rect x="408" y="442" width="112" height="140" rx="8" fill="none" stroke="#c6c6c6" stroke-width="11"/><rect x="452" y="518" width="142" height="112" rx="8" fill="#4a4a4a" stroke="#c6c6c6" stroke-width="11"/><path d="M458,622 H590" stroke="#e0e0e0" stroke-width="10"/></g>
<g transform="translate(1040,395) scale(0.081855)"><text x="492" y="295" font-size="200" text-anchor="middle" fill="#c6c6c6">A</text><rect x="574" y="132" width="11" height="188" fill="#c6c6c6"/><path d="M500,452 H552 V608 H506 V545 C460,545 438,525 438,498 C438,470 460,452 500,452 Z" fill="#c6c6c6"/><rect x="522" y="462" width="10" height="146" fill="#1e1e1e"/></g>
<g transform="translate(1040,450) scale(0.081855)"><text x="548" y="290" font-size="170" text-anchor="middle" fill="#c6c6c6">A</text><rect x="446" y="296" width="66" height="64" fill="#3a3a3a" stroke="#dcdcdc" stroke-width="11"/><rect x="420" y="272" width="62" height="60" fill="#222" stroke="#dcdcdc" stroke-width="11"/><path d="M530,478 H585 V610 H540 V550 C500,550 480,535 480,512 C480,492 500,478 530,478 Z" fill="#c6c6c6"/><rect x="556" y="488" width="10" height="122" fill="#1e1e1e"/><rect x="446" y="582" width="66" height="64" fill="#3a3a3a" stroke="#dcdcdc" stroke-width="11"/><rect x="420" y="558" width="62" height="60" fill="#222" stroke="#dcdcdc" stroke-width="11"/></g></svg>
<svg class="artboards" width="1100" height="855" viewBox="0 0 1100 855" style="left:0;top:0;filter:blur(0.45px);">
<defs><clipPath id="canvasclip"><rect x="74" y="97" width="975" height="741"/></clipPath></defs>
<g clip-path="url(#canvasclip)">
<path d="M1002,609.5 H1049" stroke="#dcdcdc" stroke-width="1"/>
<g class="artboard">
<clipPath id="ab0"><rect x="100.5" y="141.6" width="211.90" height="140.20"/></clipPath>
<g clip-path="url(#ab0)"><g transform="translate(90,130) scale(0.218182)"><path d="M130,125 V550 M130,125 h-12 M130,235 h-12 M130,340 h-12 M130,443 h-12 M130,550 h-12" fill="none" stroke="#666" stroke-width="3"/><text x="105" y="125" font-size="12.32" text-anchor="middle" fill="#111" font-weight="bold" transform="rotate(-90 105 125)" stroke="#111" stroke-width="2.1">20%</text><text x="105" y="235" font-size="12.32" text-anchor="middle" fill="#111" font-weight="bold" transform="rotate(-90 105 235)" stroke="#111" stroke-width="2.1">15%</text><text x="105" y="340" font-size="12.32" text-anchor="middle" fill="#111" font-weight="bold" transform="rotate(-90 105 340)" stroke="#111" stroke-width="2.1">10%</text><text x="105" y="443" font-size="12.32" text-anchor="middle" fill="#111" font-weight="bold" transform="rotate(-90 105 443)" stroke="#111" stroke-width="2.1">5%</text><text x="105" y="550" font-size="12.32" text-anchor="middle" fill="#111" font-weight="bold" transform="rotate(-90 105 550)" stroke="#111" stroke-width="2.1">0%</text><text x="66" y="340" font-size="12.32" text-anchor="middle" fill="#111" font-weight="bold" transform="rotate(-90 66 340)" stroke="#111" stroke-width="2.1">Incidenza pacchetti non domestici per 1000 residenti</text><rect x="160.0" y="180.0" width="28.0" height="370.0" fill="#fab123"/><text x="174" y="154" font-size="13.44" text-anchor="middle" fill="#111" font-weight="bold" stroke="#111" stroke-width="1.5">−1,39 €</text><text x="174" y="582" font-size="14.0" text-anchor="middle" fill="#111" font-weight="bold" stroke="#111" stroke-width="1.5">Ucraina</text><rect x="146.5" y="602.0" width="55.0" height="15.6" fill="#ffd500"/><rect x="146.5" y="617.2" width="55.0" height="15.6" fill="#1f5fc0"/><rect x="146.5" y="602" width="55" height="30.5" fill="none" stroke="#777" stroke-width="1.6"/><rect x="250.0" y="462.0" width="28.0" height="88.0" fill="#fab123"/><text x="264" y="433" font-size="13.44" text-anchor="middle" fill="#111" font-weight="bold" stroke="#111" stroke-width="1.5">−1,59 €</text><text x="264" y="582" font-size="14.0" text-anchor="middle" fill="#111" font-weight="bold" stroke="#111" stroke-width="1.5">Polonia</text><rect x="236.5" y="602.0" width="55.0" height="15.6" fill="#ffffff"/><rect x="236.5" y="617.2" width="55.0" height="15.6" fill="#dc143c"/><rect x="236.5" y="602" width="55" height="30.5" fill="none" stroke="#777" stroke-width="1.6"/><rect x="340.0" y="544.0" width="30.0" height="6.0" fill="#fab123"/><text x="355" y="515" font-size="13.44" text-anchor="middle" fill="#111" font-weight="bold" stroke="#111" stroke-width="1.5">−4,20 €</text><text x="355" y="582" font-size="14.0" text-anchor="middle" fill="#111" font-weight="bold" stroke="#111" stroke-width="1.5">Moldavia</text><rect x="327.5" y="602.0" width="18.6" height="30.5" fill="#1f4fa8"/><rect x="345.8" y="602.0" width="18.6" height="30.5" fill="#ffd200"/><rect x="364.2" y="602.0" width="18.6" height="30.5" fill="#d01c2a"/><rect x="350.0" y="612.0" width="10.0" height="14.0" fill="#8a5a2a"/><rect x="327.5" y="602" width="55" height="30.5" fill="none" stroke="#777" stroke-width="1.6"/><rect x="430.0" y="544.0" width="30.0" height="6.0" fill="#fab123"/><text x="445" y="519" font-size="13.44" text-anchor="middle" fill="#111" font-weight="bold" stroke="#111" stroke-width="1.5">−4,10 €</text><text x="445" y="582" font-size="14.0" text-anchor="middle" fill="#111" font-weight="bold" stroke="#111" stroke-width="1.5">Bielorussia</text><rect x="417.5" y="602.0" width="55.0" height="12.0" fill="#3a9a4a"/><rect x="417.5" y="613.7" width="55.0" height="19.1" fill="#d22730"/><rect x="417.5" y="602" width="55" height="30.5" fill="none" stroke="#777" stroke-width="1.6"/><rect x="520.0" y="544.0" width="30.0" height="6.0" fill="#fab123"/><text x="535" y="519" font-size="13.44" text-anchor="middle" fill="#111" font-weight="bold" stroke="#111" stroke-width="1.5">−2,84 €</text><text x="535" y="582" font-size="14.0" text-anchor="middle" fill="#111" font-weight="bold" stroke="#111" stroke-width="1.5">Bosnia E.</text><rect x="507.5" y="602.0" width="55.0" height="30.5" fill="#1f3f9a"/><path d="M521.5,602 H552.5 V632.5 Z" fill="#ffcc00"/><rect x="507.5" y="602" width="55" height="30.5" fill="none" stroke="#777" stroke-width="1.6"/><rect x="610.0" y="545.0" width="30.0" height="5.0" fill="#fab123"/><text x="625" y="519" font-size="13.44" text-anchor="middle" fill="#111" font-weight="bold" stroke="#111" stroke-width="1.5">−0,53 €</text><text x="625" y="582" font-size="14.0" text-anchor="middle" fill="#111" font-weight="bold" stroke="#111" stroke-width="1.5">Grecia</text><rect x="597.5" y="602.0" width="55.0" height="6.4" fill="#6f8fd8"/><rect x="597.5" y="608.1" width="55.0" height="6.4" fill="#ffffff"/><rect x="597.5" y="614.2" width="55.0" height="6.4" fill="#6f8fd8"/><rect x="597.5" y="620.3" width="55.0" height="6.4" fill="#ffffff"/><rect x="597.5" y="626.4" width="55.0" height="6.4" fill="#6f8fd8"/><rect x="597.5" y="602.0" width="20.0" height="21.0" fill="#6f8fd8"/><rect x="605.5" y="602.0" width="4.0" height="21.0" fill="#fff"/><rect x="597.5" y="610.0" width="20.0" height="4.0" fill="#fff"/><rect x="597.5" y="602" width="55" height="30.5" fill="none" stroke="#777" stroke-width="1.6"/><rect x="700.0" y="545.0" width="30.0" height="5.0" fill="#fab123"/><text x="715" y="519" font-size="13.44" text-anchor="middle" fill="#111" font-weight="bold" stroke="#111" stroke-width="1.5">−3,72 €</text><text x="715" y="582" font-size="14.0" text-anchor="middle" fill="#111" font-weight="bold" stroke="#111" stroke-width="1.5">Russia</text><rect x="687.5" y="602.0" width="55.0" height="10.5" fill="#ffffff"/><rect x="687.5" y="612.2" width="55.0" height="10.5" fill="#1f4fb8"/><rect x="687.5" y="622.3" width="55.0" height="10.5" fill="#d52b1e"/><rect x="687.5" y="602" width="55" height="30.5" fill="none" stroke="#777" stroke-width="1.6"/><rect x="790.0" y="546.0" width="30.0" height="4.0" fill="#fcd88a"/><text x="805" y="522" font-size="13.44" text-anchor="middle" fill="#111" font-weight="bold" stroke="#111" stroke-width="1.5">−2,24 €</text><text x="805" y="582" font-size="14.0" text-anchor="middle" fill="#111" font-weight="bold" stroke="#111" stroke-width="1.5">Bulgaria</text><rect x="777.5" y="602.0" width="55.0" height="10.5" fill="#ffffff"/><rect x="777.5" y="612.2" width="55.0" height="10.5" fill="#2a9a5a"/><rect x="777.5" y="622.3" width="55.0" height="10.5" fill="#d62612"/><rect x="777.5" y="602" width="55" height="30.5" fill="none" stroke="#777" stroke-width="1.6"/><rect x="880.0" y="547.0" width="30.0" height="3.0" fill="#fcd88a"/><text x="895" y="522" font-size="13.44" text-anchor="middle" fill="#e8452c" font-weight="bold" stroke="#e8452c" stroke-width="1.5">2,00 €</text><text x="895" y="582" font-size="14.0" text-anchor="middle" fill="#e8452c" font-weight="bold" stroke="#e8452c" stroke-width="1.5">Francia</text><rect x="867.5" y="602.0" width="18.6" height="30.5" fill="#1f3f9a"/><rect x="885.8" y="602.0" width="18.6" height="30.5" fill="#ffffff"/><rect x="904.2" y="602.0" width="18.6" height="30.5" fill="#e1232e"/><rect x="867.5" y="602" width="55" height="30.5" fill="none" stroke="#777" stroke-width="1.6"/><rect x="970.0" y="547.0" width="30.0" height="3.0" fill="#fcd88a"/><text x="985" y="522" font-size="13.44" text-anchor="middle" fill="#e8452c" font-weight="bold" stroke="#e8452c" stroke-width="1.5">2,51 €</text><text x="985" y="582" font-size="14.0" text-anchor="middle" fill="#e8452c" font-weight="bold" stroke="#e8452c" stroke-width="1.5">Svizzera</text><rect x="957.5" y="602.0" width="55.0" height="30.5" fill="#e0241c"/><rect x="981.0" y="609.0" width="8.0" height="21.0" fill="#fff"/><rect x="974.0" y="615.5" width="22.0" height="8.0" fill="#fff"/><rect x="957.5" y="602" width="55" height="30.5" fill="none" stroke="#777" stroke-width="1.6"/></g></g>
<rect x="100.5" y="141.6" width="211.90" height="140.20" fill="none" stroke="#959595" stroke-width="1"/>
</g>
<g class="artboard">
<clipPath id="ab1"><rect x="335.8" y="141.6" width="211.60" height="140.20"/></clipPath>
<g clip-path="url(#ab1)"><g transform="translate(325,130) scale(0.218182)"><path d="M130,125 V552 M130,125 h-12 M130,210 h-12 M130,296 h-12 M130,381 h-12 M130,466 h-12 M130,552 h-12" fill="none" stroke="#666" stroke-width="3"/><text x="105" y="125" font-size="12.32" text-anchor="middle" fill="#111" font-weight="bold" transform="rotate(-90 105 125)" stroke="#111" stroke-width="2.1">10%</text><text x="105" y="210" font-size="12.32" text-anchor="middle" fill="#111" font-weight="bold" transform="rotate(-90 105 210)" stroke="#111" stroke-width="2.1">8%</text><text x="105" y="296" font-size="12.32" text-anchor="middle" fill="#111" font-weight="bold" transform="rotate(-90 105 296)" stroke="#111" stroke-width="2.1">6%</text><text x="105" y="381" font-size="12.32" text-anchor="middle" fill="#111" font-weight="bold" transform="rotate(-90 105 381)" stroke="#111" stroke-width="2.1">4%</text><text x="105" y="466" font-size="12.32" text-anchor="middle" fill="#111" font-weight="bold" transform="rotate(-90 105 466)" stroke="#111" stroke-width="2.1">2%</text><text x="105" y="552" font-size="12.32" text-anchor="middle" fill="#111" font-weight="bold" transform="rotate(-90 105 552)" stroke="#111" stroke-width="2.1">0%</text><text x="60" y="340" font-size="12.32" text-anchor="middle" fill="#111" font-weight="bold" transform="rotate(-90 60 340)" stroke="#111" stroke-width="2.1">Incidenza contrabbando per 1000 residenti e valore economico</text><rect x="160.0" y="196.5" width="28.0" height="355.5" fill="#fab123"/><text x="174" y="173" font-size="13.44" text-anchor="middle" fill="#111" stroke="#111" stroke-width="0.8">−1,50 €</text><text x="174" y="582" font-size="14.0" text-anchor="middle" fill="#111" stroke="#111" stroke-width="0.8">Romania</text><rect x="146.5" y="602.0" width="18.6" height="30.5" fill="#1f3f9a"/><rect x="164.8" y="602.0" width="18.6" height="30.5" fill="#fcd116"/><rect x="183.2" y="602.0" width="18.6" height="30.5" fill="#ce1126"/><rect x="146.5" y="602" width="55" height="30.5" fill="none" stroke="#777" stroke-width="1.6"/><rect x="250.0" y="463.5" width="28.0" height="88.5" fill="#fab123"/><text x="264" y="440" font-size="13.44" text-anchor="middle" fill="#111" stroke="#111" stroke-width="0.8">−2,24 €</text><text x="264" y="582" font-size="14.0" text-anchor="middle" fill="#111" stroke="#111" stroke-width="0.8">Bulgaria</text><rect x="236.5" y="602.0" width="55.0" height="10.5" fill="#ffffff"/><rect x="236.5" y="612.2" width="55.0" height="10.5" fill="#2a9a5a"/><rect x="236.5" y="622.3" width="55.0" height="10.5" fill="#d62612"/><rect x="236.5" y="602" width="55" height="30.5" fill="none" stroke="#777" stroke-width="1.6"/><rect x="341.0" y="474.5" width="28.0" height="77.5" fill="#fab123"/><text x="355" y="451" font-size="13.44" text-anchor="middle" fill="#111" stroke="#111" stroke-width="0.8">−0,82 €</text><text x="355" y="582" font-size="14.0" text-anchor="middle" fill="#111" stroke="#111" stroke-width="0.8">Spagna</text><rect x="327.5" y="602.0" width="55.0" height="7.9" fill="#c8102e"/><rect x="327.5" y="609.6" width="55.0" height="15.6" fill="#ffc400"/><rect x="327.5" y="624.9" width="55.0" height="7.9" fill="#c8102e"/><rect x="339.5" y="613.0" width="12.0" height="13.0" fill="#8a3a1a"/><rect x="327.5" y="602" width="55" height="30.5" fill="none" stroke="#777" stroke-width="1.6"/><rect x="431.0" y="489.5" width="28.0" height="62.5" fill="#fab123"/><text x="445" y="466" font-size="13.44" text-anchor="middle" fill="#111" stroke="#111" stroke-width="0.8">−1,35 €</text><text x="445" y="582" font-size="14.0" text-anchor="middle" fill="#111" stroke="#111" stroke-width="0.8">Slovenia</text><rect x="417.5" y="602.0" width="55.0" height="10.5" fill="#ffffff"/><rect x="417.5" y="612.2" width="55.0" height="10.5" fill="#1f4fb8"/><rect x="417.5" y="622.3" width="55.0" height="10.5" fill="#e0241c"/><rect x="426.5" y="607.0" width="10.0" height="12.0" fill="#1f3f9a"/><rect x="417.5" y="602" width="55" height="30.5" fill="none" stroke="#777" stroke-width="1.6"/><rect x="521.0" y="492.5" width="28.0" height="59.5" fill="#fab123"/><text x="535" y="469" font-size="13.44" text-anchor="middle" fill="#111" stroke="#111" stroke-width="0.8">−0,71 €</text><text x="535" y="582" font-size="14.0" text-anchor="middle" fill="#111" stroke="#111" stroke-width="0.8">Croazia</text><rect x="507.5" y="602.0" width="55.0" height="10.5" fill="#e0241c"/><rect x="507.5" y="612.2" width="55.0" height="10.5" fill="#ffffff"/><rect x="507.5" y="622.3" width="55.0" height="10.5" fill="#1f3f9a"/><rect x="528.0" y="610.0" width="14.0" height="16.0" fill="#d84a4a"/><rect x="507.5" y="602" width="55" height="30.5" fill="none" stroke="#777" stroke-width="1.6"/><rect x="611.0" y="496.5" width="28.0" height="55.5" fill="#fab123"/><text x="625" y="473" font-size="13.44" text-anchor="middle" fill="#111" stroke="#111" stroke-width="0.8">−4,24 €</text><text x="625" y="582" font-size="14.0" text-anchor="middle" fill="#111" stroke="#111" stroke-width="0.8">Ucraina</text><rect x="597.5" y="602.0" width="55.0" height="15.6" fill="#ffd500"/><rect x="597.5" y="617.2" width="55.0" height="15.6" fill="#1f5fc0"/><rect x="597.5" y="602" width="55" height="30.5" fill="none" stroke="#777" stroke-width="1.6"/><rect x="701.0" y="504.5" width="28.0" height="47.5" fill="#fab123"/><text x="715" y="481" font-size="13.44" text-anchor="middle" fill="#111" stroke="#111" stroke-width="0.8">−1,69 €</text><text x="715" y="582" font-size="14.0" text-anchor="middle" fill="#111" stroke="#111" stroke-width="0.8">Serbia</text><rect x="687.5" y="602.0" width="55.0" height="10.5" fill="#c6363c"/><rect x="687.5" y="612.2" width="55.0" height="10.5" fill="#1f3f8a"/><rect x="687.5" y="622.3" width="55.0" height="10.5" fill="#ffffff"/><rect x="699.5" y="608.0" width="12.0" height="20.0" fill="#8a3a3a"/><rect x="687.5" y="602" width="55" height="30.5" fill="none" stroke="#777" stroke-width="1.6"/><rect x="791.0" y="505.5" width="28.0" height="46.5" fill="#fab123"/><text x="805" y="482" font-size="13.44" text-anchor="middle" fill="#111" stroke="#111" stroke-width="0.8">−1,01 €</text><text x="805" y="582" font-size="14.0" text-anchor="middle" fill="#111" stroke="#111" stroke-width="0.8">Grecia</text><rect x="777.5" y="602.0" width="55.0" height="6.4" fill="#6f8fd8"/><rect x="777.5" y="608.1" width="55.0" height="6.4" fill="#ffffff"/><rect x="777.5" y="614.2" width="55.0" height="6.4" fill="#6f8fd8"/><rect x="777.5" y="620.3" width="55.0" height="6.4" fill="#ffffff"/><rect x="777.5" y="626.4" width="55.0" height="6.4" fill="#6f8fd8"/><rect x="777.5" y="602.0" width="20.0" height="21.0" fill="#6f8fd8"/><rect x="785.5" y="602.0" width="4.0" height="21.0" fill="#fff"/><rect x="777.5" y="610.0" width="20.0" height="4.0" fill="#fff"/><rect x="777.5" y="602" width="55" height="30.5" fill="none" stroke="#777" stroke-width="1.6"/><rect x="881.0" y="543.5" width="28.0" height="8.5" fill="#fab123"/><text x="895" y="520" font-size="13.44" text-anchor="middle" fill="#111" stroke="#111" stroke-width="0.8">−4,20 €</text><text x="895" y="582" font-size="14.0" text-anchor="middle" fill="#111" stroke="#111" stroke-width="0.8">Moldavia</text><rect x="867.5" y="602.0" width="18.6" height="30.5" fill="#1f4fa8"/><rect x="885.8" y="602.0" width="18.6" height="30.5" fill="#ffd200"/><rect x="904.2" y="602.0" width="18.6" height="30.5" fill="#d01c2a"/><rect x="890.0" y="612.0" width="10.0" height="14.0" fill="#8a5a2a"/><rect x="867.5" y="602" width="55" height="30.5" fill="none" stroke="#777" stroke-width="1.6"/><rect x="971.0" y="550.5" width="28.0" height="1.5" fill="#fab123"/><text x="985" y="527" font-size="13.44" text-anchor="middle" fill="#111" stroke="#111" stroke-width="0.8">−3,72 €</text><text x="985" y="582" font-size="14.0" text-anchor="middle" fill="#111" stroke="#111" stroke-width="0.8">Russia</text><rect x="957.5" y="602.0" width="55.0" height="10.5" fill="#ffffff"/><rect x="957.5" y="612.2" width="55.0" height="10.5" fill="#1f4fb8"/><rect x="957.5" y="622.3" width="55.0" height="10.5" fill="#d52b1e"/><rect x="957.5" y="602" width="55" height="30.5" fill="none" stroke="#777" stroke-width="1.6"/></g></g>
<rect x="335.8" y="141.6" width="211.60" height="140.20" fill="none" stroke="#959595" stroke-width="1"/>
</g>
<g class="artboard">
<clipPath id="ab2"><rect x="571.4" y="141.6" width="211.20" height="140.20"/></clipPath>
<g clip-path="url(#ab2)"><g transform="translate(560,130) scale(0.218182)"><path d="M125,152 V550 M125,152 h-12 M125,252 h-12 M125,350 h-12 M125,450 h-12 M125,550 h-12" fill="none" stroke="#666" stroke-width="3"/><text x="97" y="152" font-size="12.32" text-anchor="middle" fill="#111" font-weight="bold" transform="rotate(0 97 152)" stroke="#111" stroke-width="2.1">80</text><text x="97" y="252" font-size="12.32" text-anchor="middle" fill="#111" font-weight="bold" transform="rotate(0 97 252)" stroke="#111" stroke-width="2.1">70</text><text x="97" y="350" font-size="12.32" text-anchor="middle" fill="#111" font-weight="bold" transform="rotate(0 97 350)" stroke="#111" stroke-width="2.1">60</text><text x="97" y="450" font-size="12.32" text-anchor="middle" fill="#111" font-weight="bold" transform="rotate(0 97 450)" stroke="#111" stroke-width="2.1">50</text><text x="97" y="550" font-size="12.32" text-anchor="middle" fill="#111" font-weight="bold" transform="rotate(0 97 550)" stroke="#111" stroke-width="2.1">40</text><text x="62" y="350" font-size="13.44" text-anchor="middle" fill="#111" font-weight="bold" transform="rotate(-90 62 350)" stroke="#111" stroke-width="2.1">Migliaia di tonnellate</text><path d="M163,150 V566 M451,150 V566 M737,150 V566" fill="none" stroke="#d0d0d0" stroke-width="2"/><path d="M163,566 H1018 M163,566 V592" fill="none" stroke="#666" stroke-width="3"/><path d="M176,338 L1018,373" fill="none" stroke="#fcd7a0" stroke-width="6"/><path d="M176,394 L200,449 L224,365 L248,320 L272,352 L296,293 L320,220 L343,328 L367,292 L391,342 L415,385 L438,297 L462,420 L486,397 L510,328 L534,347 L558,330 L581,308 L605,300 L629,283 L653,305 L677,400 L701,421 L724,381 L748,436 L772,452 L796,353 L820,405 L843,333 L867,308 L891,328 L915,297 L939,373 L962,376 L986,411 L1010,418" fill="none" stroke="#93a2dc" stroke-width="2.6" stroke-linejoin="round"/><circle cx="176" cy="394" r="4.6" fill="#2b3fa3"/><circle cx="200" cy="449" r="4.6" fill="#2b3fa3"/><circle cx="224" cy="365" r="4.6" fill="#2b3fa3"/><circle cx="248" cy="320" r="4.6" fill="#2b3fa3"/><circle cx="272" cy="352" r="4.6" fill="#2b3fa3"/><circle cx="296" cy="293" r="4.6" fill="#2b3fa3"/><circle cx="320" cy="220" r="4.6" fill="#2b3fa3"/><circle cx="343" cy="328" r="4.6" fill="#2b3fa3"/><circle cx="367" cy="292" r="4.6" fill="#2b3fa3"/><circle cx="391" cy="342" r="4.6" fill="#2b3fa3"/><circle cx="415" cy="385" r="4.6" fill="#2b3fa3"/><circle cx="438" cy="297" r="4.6" fill="#2b3fa3"/><circle cx="462" cy="420" r="4.6" fill="#2b3fa3"/><circle cx="486" cy="397" r="4.6" fill="#2b3fa3"/><circle cx="510" cy="328" r="4.6" fill="#2b3fa3"/><circle cx="534" cy="347" r="4.6" fill="#2b3fa3"/><circle cx="558" cy="330" r="4.6" fill="#2b3fa3"/><circle cx="581" cy="308" r="4.6" fill="#2b3fa3"/><circle cx="605" cy="300" r="4.6" fill="#2b3fa3"/><circle cx="629" cy="283" r="4.6" fill="#2b3fa3"/><circle cx="653" cy="305" r="4.6" fill="#2b3fa3"/><circle cx="677" cy="400" r="4.6" fill="#2b3fa3"/><circle cx="701" cy="421" r="4.6" fill="#2b3fa3"/><circle cx="724" cy="381" r="4.6" fill="#2b3fa3"/><circle cx="748" cy="436" r="4.6" fill="#2b3fa3"/><circle cx="772" cy="452" r="4.6" fill="#2b3fa3"/><circle cx="796" cy="353" r="4.6" fill="#2b3fa3"/><circle cx="820" cy="405" r="4.6" fill="#2b3fa3"/><circle cx="843" cy="333" r="4.6" fill="#2b3fa3"/><circle cx="867" cy="308" r="4.6" fill="#2b3fa3"/><circle cx="891" cy="328" r="4.6" fill="#2b3fa3"/><circle cx="915" cy="297" r="4.6" fill="#2b3fa3"/><circle cx="939" cy="373" r="4.6" fill="#2b3fa3"/><circle cx="962" cy="376" r="4.6" fill="#2b3fa3"/><circle cx="986" cy="411" r="4.6" fill="#2b3fa3"/><circle cx="1010" cy="418" r="4.6" fill="#2b3fa3"/><text x="176" y="593" font-size="12.88" text-anchor="middle" fill="#111" font-weight="bold" stroke="#111" stroke-width="1.5">1</text><text x="200" y="593" font-size="12.88" text-anchor="middle" fill="#111" font-weight="bold" stroke="#111" stroke-width="1.5">2</text><text x="224" y="593" font-size="12.88" text-anchor="middle" fill="#111" font-weight="bold" stroke="#111" stroke-width="1.5">3</text><text x="248" y="593" font-size="12.88" text-anchor="middle" fill="#111" font-weight="bold" stroke="#111" stroke-width="1.5">4</text><text x="272" y="593" font-size="12.88" text-anchor="middle" fill="#111" font-weight="bold" stroke="#111" stroke-width="1.5">5</text><text x="296" y="593" font-size="12.88" text-anchor="middle" fill="#111" font-weight="bold" stroke="#111" stroke-width="1.5">6</text><text x="320" y="593" font-size="12.88" text-anchor="middle" fill="#111" font-weight="bold" stroke="#111" stroke-width="1.5">7</text><text x="343" y="593" font-size="12.88" text-anchor="middle" fill="#111" font-weight="bold" stroke="#111" stroke-width="1.5">8</text><text x="367" y="593" font-size="12.88" text-anchor="middle" fill="#111" font-weight="bold" stroke="#111" stroke-width="1.5">9</text><text x="391" y="593" font-size="12.88" text-anchor="middle" fill="#111" font-weight="bold" stroke="#111" stroke-width="1.5">10</text><text x="415" y="593" font-size="12.88" text-anchor="middle" fill="#111" font-weight="bold" stroke="#111" stroke-width="1.5">11</text><text x="438" y="593" font-size="12.88" text-anchor="middle" fill="#111" font-weight="bold" stroke="#111" stroke-width="1.5">12</text><text x="462" y="593" font-size="12.88" text-anchor="middle" fill="#111" font-weight="bold" stroke="#111" stroke-width="1.5">1</text><text x="486" y="593" font-size="12.88" text-anchor="middle" fill="#111" font-weight="bold" stroke="#111" stroke-width="1.5">2</text><text x="510" y="593" font-size="12.88" text-anchor="middle" fill="#111" font-weight="bold" stroke="#111" stroke-width="1.5">3</text><text x="534" y="593" font-size="12.88" text-anchor="middle" fill="#111" font-weight="bold" stroke="#111" stroke-width="1.5">4</text><text x="558" y="593" font-size="12.88" text-anchor="middle" fill="#111" font-weight="bold" stroke="#111" stroke-width="1.5">5</text><text x="581" y="593" font-size="12.88" text-anchor="middle" fill="#111" font-weight="bold" stroke="#111" stroke-width="1.5">6</text><text x="605" y="593" font-size="12.88" text-anchor="middle" fill="#111" font-weight="bold" stroke="#111" stroke-width="1.5">7</text><text x="629" y="593" font-size="12.88" text-anchor="middle" fill="#111" font-weight="bold" stroke="#111" stroke-width="1.5">8</text><text x="653" y="593" font-size="12.88" text-anchor="middle" fill="#111" font-weight="bold" stroke="#111" stroke-width="1.5">9</text><text x="677" y="593" font-size="12.88" text-anchor="middle" fill="#111" font-weight="bold" stroke="#111" stroke-width="1.5">10</text><text x="701" y="593" font-size="12.88" text-anchor="middle" fill="#111" font-weight="bold" stroke="#111" stroke-width="1.5">11</text><text x="724" y="593" font-size="12.88" text-anchor="middle" fill="#111" font-weight="bold" stroke="#111" stroke-width="1.5">12</text><text x="748" y="593" font-size="12.88" text-anchor="middle" fill="#111" font-weight="bold" stroke="#111" stroke-width="1.5">1</text><text x="772" y="593" font-size="12.88" text-anchor="middle" fill="#111" font-weight="bold" stroke="#111" stroke-width="1.5">2</text><text x="796" y="593" font-size="12.88" text-anchor="middle" fill="#111" font-weight="bold" stroke="#111" stroke-width="1.5">3</text><text x="820" y="593" font-size="12.88" text-anchor="middle" fill="#111" font-weight="bold" stroke="#111" stroke-width="1.5">4</text><text x="843" y="593" font-size="12.88" text-anchor="middle" fill="#111" font-weight="bold" stroke="#111" stroke-width="1.5">5</text><text x="867" y="593" font-size="12.88" text-anchor="middle" fill="#111" font-weight="bold" stroke="#111" stroke-width="1.5">6</text><text x="891" y="593" font-size="12.88" text-anchor="middle" fill="#111" font-weight="bold" stroke="#111" stroke-width="1.5">7</text><text x="915" y="593" font-size="12.88" text-anchor="middle" fill="#111" font-weight="bold" stroke="#111" stroke-width="1.5">8</text><text x="939" y="593" font-size="12.88" text-anchor="middle" fill="#111" font-weight="bold" stroke="#111" stroke-width="1.5">9</text><text x="962" y="593" font-size="12.88" text-anchor="middle" fill="#111" font-weight="bold" stroke="#111" stroke-width="1.5">10</text><text x="986" y="593" font-size="12.88" text-anchor="middle" fill="#111" font-weight="bold" stroke="#111" stroke-width="1.5">11</text><text x="1010" y="593" font-size="12.88" text-anchor="middle" fill="#111" font-weight="bold" stroke="#111" stroke-width="1.5">12</text><path d="M188,566 v5 M212,566 v5 M236,566 v5 M260,566 v5 M284,566 v5 M308,566 v5 M331,566 v5 M355,566 v5 M379,566 v5 M403,566 v5 M426,566 v5 M450,566 v5 M474,566 v5 M498,566 v5 M522,566 v5 M546,566 v5 M569,566 v5 M593,566 v5 M617,566 v5 M641,566 v5 M665,566 v5 M689,566 v5 M712,566 v5 M736,566 v5 M760,566 v5 M784,566 v5 M808,566 v5 M831,566 v5 M855,566 v5 M879,566 v5 M903,566 v5 M927,566 v5 M950,566 v5 M974,566 v5 M998,566 v5 " fill="none" stroke="#666" stroke-width="2"/><text x="308" y="551" font-size="19.04" text-anchor="middle" fill="#111" font-weight="bold" stroke="#111" stroke-width="1.5">2015</text><text x="595" y="551" font-size="19.04" text-anchor="middle" fill="#111" font-weight="bold" stroke="#111" stroke-width="1.5">2016</text><text x="875" y="551" font-size="19.04" text-anchor="middle" fill="#111" font-weight="bold" stroke="#111" stroke-width="1.5">2017</text><path d="M868,160 H895" fill="none" stroke="#93a2dc" stroke-width="2.6"/><circle cx="881" cy="160" r="4.6" fill="#2b3fa3"/><text x="902" y="165" font-size="13.44" text-anchor="start" fill="#111" font-weight="bold" stroke="#111" stroke-width="1.5">Consumo totale</text><path d="M868,185 H895" fill="none" stroke="#fcd7a0" stroke-width="6"/><text x="902" y="189" font-size="13.44" text-anchor="start" fill="#111" font-weight="bold" stroke="#111" stroke-width="1.5">Linea di tendenza</text></g></g>
<rect x="571.4" y="141.6" width="211.20" height="140.20" fill="none" stroke="#1a1a1a" stroke-width="1.1"/>
</g>
<g class="artboard">
<clipPath id="ab3"><rect x="806.5" y="141.6" width="211.50" height="140.20"/></clipPath>
<g clip-path="url(#ab3)"><g transform="translate(795,130) scale(0.218182)"><path d="M120,195 V478 M120,195 h-12 M120,250 h-12 M120,308 h-12 M120,365 h-12 M120,420 h-12 M120,478 h-12" fill="none" stroke="#666" stroke-width="3"/><text x="102" y="195" font-size="12.32" text-anchor="middle" fill="#111" font-weight="bold" transform="rotate(-90 102 195)" stroke="#111" stroke-width="2.1">100%</text><text x="102" y="250" font-size="12.32" text-anchor="middle" fill="#111" font-weight="bold" transform="rotate(-90 102 250)" stroke="#111" stroke-width="2.1">80%</text><text x="102" y="308" font-size="12.32" text-anchor="middle" fill="#111" font-weight="bold" transform="rotate(-90 102 308)" stroke="#111" stroke-width="2.1">60%</text><text x="102" y="365" font-size="12.32" text-anchor="middle" fill="#111" font-weight="bold" transform="rotate(-90 102 365)" stroke="#111" stroke-width="2.1">40%</text><text x="102" y="420" font-size="12.32" text-anchor="middle" fill="#111" font-weight="bold" transform="rotate(-90 102 420)" stroke="#111" stroke-width="2.1">20%</text><text x="102" y="478" font-size="12.32" text-anchor="middle" fill="#111" font-weight="bold" transform="rotate(-90 102 478)" stroke="#111" stroke-width="2.1">0%</text><path d="M940,195 V478 M940,195 h12 M940,250 h12 M940,308 h12 M940,365 h12 M940,420 h12 M940,478 h12" fill="none" stroke="#666" stroke-width="3"/><text x="973" y="195" font-size="12.32" text-anchor="middle" fill="#111" font-weight="bold" transform="rotate(-90 973 195)" stroke="#111" stroke-width="2.1">100%</text><text x="973" y="250" font-size="12.32" text-anchor="middle" fill="#111" font-weight="bold" transform="rotate(-90 973 250)" stroke="#111" stroke-width="2.1">80%</text><text x="973" y="308" font-size="12.32" text-anchor="middle" fill="#111" font-weight="bold" transform="rotate(-90 973 308)" stroke="#111" stroke-width="2.1">60%</text><text x="973" y="365" font-size="12.32" text-anchor="middle" fill="#111" font-weight="bold" transform="rotate(-90 973 365)" stroke="#111" stroke-width="2.1">40%</text><text x="973" y="420" font-size="12.32" text-anchor="middle" fill="#111" font-weight="bold" transform="rotate(-90 973 420)" stroke="#111" stroke-width="2.1">20%</text><text x="973" y="478" font-size="12.32" text-anchor="middle" fill="#111" font-weight="bold" transform="rotate(-90 973 478)" stroke="#111" stroke-width="2.1">0%</text><text x="60" y="337" font-size="13.44" text-anchor="middle" fill="#111" font-weight="bold" transform="rotate(-90 60 337)" stroke="#111" stroke-width="2.1">Incidenza</text><text x="1003" y="337" font-size="13.44" text-anchor="middle" fill="#111" font-weight="bold" transform="rotate(90 1003 337)" stroke="#111" stroke-width="2.1">Incidenza</text><rect x="159.5" y="195.0" width="17.0" height="258.0" fill="#fab123"/><rect x="159.5" y="453.0" width="17.0" height="8.0" fill="#7f3a11"/><rect x="159.5" y="461.0" width="17.0" height="17.0" fill="#ec7626"/><rect x="187.5" y="195.0" width="17.0" height="267.0" fill="#fab123"/><rect x="187.5" y="462.0" width="17.0" height="8.0" fill="#7f3a11"/><rect x="187.5" y="470.0" width="17.0" height="8.0" fill="#ec7626"/><rect x="215.5" y="195.0" width="17.0" height="263.0" fill="#fab123"/><rect x="215.5" y="458.0" width="17.0" height="8.0" fill="#7f3a11"/><rect x="215.5" y="466.0" width="17.0" height="12.0" fill="#ec7626"/><rect x="243.5" y="195.0" width="17.0" height="262.0" fill="#fab123"/><rect x="243.5" y="457.0" width="17.0" height="8.0" fill="#7f3a11"/><rect x="243.5" y="465.0" width="17.0" height="13.0" fill="#ec7626"/><rect x="271.5" y="195.0" width="17.0" height="265.0" fill="#fab123"/><rect x="271.5" y="460.0" width="17.0" height="8.0" fill="#7f3a11"/><rect x="271.5" y="468.0" width="17.0" height="10.0" fill="#ec7626"/><rect x="299.5" y="195.0" width="17.0" height="260.0" fill="#fab123"/><rect x="299.5" y="455.0" width="17.0" height="8.0" fill="#7f3a11"/><rect x="299.5" y="463.0" width="17.0" height="15.0" fill="#ec7626"/><rect x="327.5" y="195.0" width="17.0" height="268.0" fill="#fab123"/><rect x="327.5" y="463.0" width="17.0" height="8.0" fill="#7f3a11"/><rect x="327.5" y="471.0" width="17.0" height="7.0" fill="#ec7626"/><rect x="355.5" y="195.0" width="17.0" height="267.0" fill="#fab123"/><rect x="355.5" y="462.0" width="17.0" height="8.0" fill="#7f3a11"/><rect x="355.5" y="470.0" width="17.0" height="8.0" fill="#ec7626"/><rect x="382.5" y="195.0" width="17.0" height="258.0" fill="#fab123"/><rect x="382.5" y="453.0" width="17.0" height="8.0" fill="#7f3a11"/><rect x="382.5" y="461.0" width="17.0" height="17.0" fill="#ec7626"/><rect x="410.5" y="195.0" width="17.0" height="268.0" fill="#fab123"/><rect x="410.5" y="463.0" width="17.0" height="8.0" fill="#7f3a11"/><rect x="410.5" y="471.0" width="17.0" height="7.0" fill="#ec7626"/><rect x="438.5" y="195.0" width="17.0" height="268.0" fill="#fab123"/><rect x="438.5" y="463.0" width="17.0" height="8.0" fill="#7f3a11"/><rect x="438.5" y="471.0" width="17.0" height="7.0" fill="#ec7626"/><rect x="466.5" y="195.0" width="17.0" height="266.0" fill="#fab123"/><rect x="466.5" y="461.0" width="17.0" height="8.0" fill="#7f3a11"/><rect x="466.5" y="469.0" width="17.0" height="9.0" fill="#ec7626"/><rect x="243.5" y="473.0" width="17.0" height="5.0" fill="#19469a"/><rect x="271.5" y="472.0" width="17.0" height="6.0" fill="#19469a"/><rect x="587.0" y="195.0" width="18.0" height="120.0" fill="#7f3a11"/><rect x="587.0" y="315.0" width="18.0" height="155.0" fill="#ec7626"/><rect x="587.0" y="470.0" width="18.0" height="8.0" fill="#19469a"/><rect x="615.0" y="195.0" width="18.0" height="140.0" fill="#7f3a11"/><rect x="615.0" y="335.0" width="18.0" height="90.0" fill="#ec7626"/><rect x="615.0" y="425.0" width="18.0" height="53.0" fill="#19469a"/><rect x="643.0" y="195.0" width="18.0" height="88.0" fill="#7f3a11"/><rect x="643.0" y="283.0" width="18.0" height="134.0" fill="#ec7626"/><rect x="643.0" y="417.0" width="18.0" height="61.0" fill="#19469a"/><rect x="671.0" y="195.0" width="18.0" height="110.0" fill="#7f3a11"/><rect x="671.0" y="305.0" width="18.0" height="92.0" fill="#ec7626"/><rect x="671.0" y="397.0" width="18.0" height="81.0" fill="#19469a"/><rect x="698.0" y="195.0" width="18.0" height="78.0" fill="#7f3a11"/><rect x="698.0" y="273.0" width="18.0" height="102.0" fill="#ec7626"/><rect x="698.0" y="375.0" width="18.0" height="103.0" fill="#19469a"/><rect x="726.0" y="195.0" width="18.0" height="112.0" fill="#7f3a11"/><rect x="726.0" y="307.0" width="18.0" height="133.0" fill="#ec7626"/><rect x="726.0" y="440.0" width="18.0" height="38.0" fill="#19469a"/><rect x="754.0" y="195.0" width="18.0" height="105.0" fill="#7f3a11"/><rect x="754.0" y="300.0" width="18.0" height="117.0" fill="#ec7626"/><rect x="754.0" y="417.0" width="18.0" height="61.0" fill="#19469a"/><rect x="782.0" y="195.0" width="18.0" height="110.0" fill="#7f3a11"/><rect x="782.0" y="305.0" width="18.0" height="120.0" fill="#ec7626"/><rect x="782.0" y="425.0" width="18.0" height="53.0" fill="#19469a"/><rect x="809.0" y="195.0" width="18.0" height="70.0" fill="#7f3a11"/><rect x="809.0" y="265.0" width="18.0" height="175.0" fill="#ec7626"/><rect x="809.0" y="440.0" width="18.0" height="38.0" fill="#19469a"/><rect x="837.0" y="195.0" width="18.0" height="97.0" fill="#7f3a11"/><rect x="837.0" y="292.0" width="18.0" height="151.0" fill="#ec7626"/><rect x="837.0" y="443.0" width="18.0" height="35.0" fill="#19469a"/><rect x="865.0" y="195.0" width="18.0" height="95.0" fill="#7f3a11"/><rect x="865.0" y="290.0" width="18.0" height="159.0" fill="#ec7626"/><rect x="865.0" y="449.0" width="18.0" height="29.0" fill="#19469a"/><rect x="893.0" y="195.0" width="18.0" height="110.0" fill="#7f3a11"/><rect x="893.0" y="305.0" width="18.0" height="144.0" fill="#ec7626"/><rect x="893.0" y="449.0" width="18.0" height="29.0" fill="#19469a"/><text x="168" y="501" font-size="12.32" text-anchor="middle" fill="#111" font-weight="bold" stroke="#111" stroke-width="1.5">Q1</text><text x="196" y="501" font-size="12.32" text-anchor="middle" fill="#111" font-weight="bold" stroke="#111" stroke-width="1.5">Q2</text><text x="224" y="501" font-size="12.32" text-anchor="middle" fill="#111" font-weight="bold" stroke="#111" stroke-width="1.5">Q3</text><text x="252" y="501" font-size="12.32" text-anchor="middle" fill="#111" font-weight="bold" stroke="#111" stroke-width="1.5">Q4</text><text x="280" y="501" font-size="12.32" text-anchor="middle" fill="#111" font-weight="bold" stroke="#111" stroke-width="1.5">Q1</text><text x="308" y="501" font-size="12.32" text-anchor="middle" fill="#111" font-weight="bold" stroke="#111" stroke-width="1.5">Q2</text><text x="336" y="501" font-size="12.32" text-anchor="middle" fill="#111" font-weight="bold" stroke="#111" stroke-width="1.5">Q3</text><text x="364" y="501" font-size="12.32" text-anchor="middle" fill="#111" font-weight="bold" stroke="#111" stroke-width="1.5">Q4</text><text x="391" y="501" font-size="12.32" text-anchor="middle" fill="#111" font-weight="bold" stroke="#111" stroke-width="1.5">Q1</text><text x="419" y="501" font-size="12.32" text-anchor="middle" fill="#111" font-weight="bold" stroke="#111" stroke-width="1.5">Q2</text><text x="447" y="501" font-size="12.32" text-anchor="middle" fill="#111" font-weight="bold" stroke="#111" stroke-width="1.5">Q3</text><text x="475" y="501" font-size="12.32" text-anchor="middle" fill="#111" font-weight="bold" stroke="#111" stroke-width="1.5">Q4</text><path d="M146,498 V511 H497 V498 M266.0,498 V511 M377.5,498 V511" fill="none" stroke="#8a8a8a" stroke-width="2.4"/><text x="210.0" y="540" font-size="13.44" text-anchor="middle" fill="#111" font-weight="bold" stroke="#111" stroke-width="1.5">2015</text><text x="322.0" y="540" font-size="13.44" text-anchor="middle" fill="#111" font-weight="bold" stroke="#111" stroke-width="1.5">2016</text><text x="433.0" y="540" font-size="13.44" text-anchor="middle" fill="#111" font-weight="bold" stroke="#111" stroke-width="1.5">2017</text><text x="596" y="501" font-size="12.32" text-anchor="middle" fill="#111" font-weight="bold" stroke="#111" stroke-width="1.5">Q1</text><text x="624" y="501" font-size="12.32" text-anchor="middle" fill="#111" font-weight="bold" stroke="#111" stroke-width="1.5">Q2</text><text x="652" y="501" font-size="12.32" text-anchor="middle" fill="#111" font-weight="bold" stroke="#111" stroke-width="1.5">Q3</text><text x="680" y="501" font-size="12.32" text-anchor="middle" fill="#111" font-weight="bold" stroke="#111" stroke-width="1.5">Q4</text><text x="707" y="501" font-size="12.32" text-anchor="middle" fill="#111" font-weight="bold" stroke="#111" stroke-width="1.5">Q1</text><text x="735" y="501" font-size="12.32" text-anchor="middle" fill="#111" font-weight="bold" stroke="#111" stroke-width="1.5">Q2</text><text x="763" y="501" font-size="12.32" text-anchor="middle" fill="#111" font-weight="bold" stroke="#111" stroke-width="1.5">Q3</text><text x="791" y="501" font-size="12.32" text-anchor="middle" fill="#111" font-weight="bold" stroke="#111" stroke-width="1.5">Q4</text><text x="818" y="501" font-size="12.32" text-anchor="middle" fill="#111" font-weight="bold" stroke="#111" stroke-width="1.5">Q1</text><text x="846" y="501" font-size="12.32" text-anchor="middle" fill="#111" font-weight="bold" stroke="#111" stroke-width="1.5">Q2</text><text x="874" y="501" font-size="12.32" text-anchor="middle" fill="#111" font-weight="bold" stroke="#111" stroke-width="1.5">Q3</text><text x="902" y="501" font-size="12.32" text-anchor="middle" fill="#111" font-weight="bold" stroke="#111" stroke-width="1.5">Q4</text><path d="M574,498 V511 H924 V498 M693.5,498 V511 M804.5,498 V511" fill="none" stroke="#8a8a8a" stroke-width="2.4"/><text x="638.0" y="540" font-size="13.44" text-anchor="middle" fill="#111" font-weight="bold" stroke="#111" stroke-width="1.5">2015</text><text x="749.0" y="540" font-size="13.44" text-anchor="middle" fill="#111" font-weight="bold" stroke="#111" stroke-width="1.5">2016</text><text x="860.0" y="540" font-size="13.44" text-anchor="middle" fill="#111" font-weight="bold" stroke="#111" stroke-width="1.5">2017</text><rect x="120.0" y="576.0" width="16.0" height="16.0" fill="#19469a"/><text x="144" y="589" font-size="13.44" text-anchor="start" fill="#111" font-weight="bold" stroke="#111" stroke-width="1.5">Contraffatte</text><rect x="322.0" y="576.0" width="16.0" height="16.0" fill="#ec7626"/><text x="346" y="589" font-size="13.44" text-anchor="start" fill="#111" font-weight="bold" stroke="#111" stroke-width="1.5">Illicit whites</text><rect x="520.0" y="576.0" width="16.0" height="16.0" fill="#7f3a11"/><text x="544" y="589" font-size="13.44" text-anchor="start" fill="#111" font-weight="bold" stroke="#111" stroke-width="1.5">Genuine non domestiche</text><rect x="797.0" y="576.0" width="16.0" height="16.0" fill="#fab123"/><text x="821" y="589" font-size="13.44" text-anchor="start" fill="#111" font-weight="bold" stroke="#111" stroke-width="1.5">Lecite domestiche</text></g></g>
<rect x="806.5" y="141.6" width="211.50" height="140.20" fill="none" stroke="#959595" stroke-width="1"/>
</g>
<g class="artboard">
<clipPath id="ab4"><rect x="100.5" y="305.4" width="211.90" height="141.50"/></clipPath>
<g clip-path="url(#ab4)"><g transform="translate(90,295) scale(0.218182)"><path d="M105,258 V500 M105,258 h-10 M105,307 h-10 M105,355 h-10 M105,403 h-10 M105,452 h-10 M105,500 h-10" fill="none" stroke="#666" stroke-width="3"/><text x="88" y="258" font-size="12.32" text-anchor="middle" fill="#111" font-weight="bold" transform="rotate(-90 88 258)" stroke="#111" stroke-width="2.1">250</text><text x="88" y="307" font-size="12.32" text-anchor="middle" fill="#111" font-weight="bold" transform="rotate(-90 88 307)" stroke="#111" stroke-width="2.1">200</text><text x="88" y="355" font-size="12.32" text-anchor="middle" fill="#111" font-weight="bold" transform="rotate(-90 88 355)" stroke="#111" stroke-width="2.1">150</text><text x="88" y="403" font-size="12.32" text-anchor="middle" fill="#111" font-weight="bold" transform="rotate(-90 88 403)" stroke="#111" stroke-width="2.1">100</text><text x="88" y="452" font-size="12.32" text-anchor="middle" fill="#111" font-weight="bold" transform="rotate(-90 88 452)" stroke="#111" stroke-width="2.1">50</text><text x="88" y="500" font-size="12.32" text-anchor="middle" fill="#111" font-weight="bold" transform="rotate(-90 88 500)" stroke="#111" stroke-width="2.1">0</text><text x="60" y="380" font-size="12.88" text-anchor="middle" fill="#111" font-weight="bold" transform="rotate(-90 60 380)" stroke="#111" stroke-width="2.1">Totale sequestri</text><path d="M295,258 V506 M747,258 V506" fill="none" stroke="#d6d6d6" stroke-width="2"/><path d="M117,301 L133,315 L149,343 L165,347 L181,335 L197,326 L213,338 L228,348 L243,302 L259,274 L275,300 L290,388 L305,341 L321,300 L337,296 L352,336 L367,329 L383,345 L399,338 L414,345 L430,306 L446,305 L462,303 L477,376" fill="none" stroke="#93a2dc" stroke-width="2.4" stroke-linejoin="round"/><circle cx="117" cy="301" r="3.9" fill="#3347a8"/><circle cx="133" cy="315" r="3.9" fill="#3347a8"/><circle cx="149" cy="343" r="3.9" fill="#3347a8"/><circle cx="165" cy="347" r="3.9" fill="#3347a8"/><circle cx="181" cy="335" r="3.9" fill="#3347a8"/><circle cx="197" cy="326" r="3.9" fill="#3347a8"/><circle cx="213" cy="338" r="3.9" fill="#3347a8"/><circle cx="228" cy="348" r="3.9" fill="#3347a8"/><circle cx="243" cy="302" r="3.9" fill="#3347a8"/><circle cx="259" cy="274" r="3.9" fill="#3347a8"/><circle cx="275" cy="300" r="3.9" fill="#3347a8"/><circle cx="290" cy="388" r="3.9" fill="#3347a8"/><circle cx="305" cy="341" r="3.9" fill="#3347a8"/><circle cx="321" cy="300" r="3.9" fill="#3347a8"/><circle cx="337" cy="296" r="3.9" fill="#3347a8"/><circle cx="352" cy="336" r="3.9" fill="#3347a8"/><circle cx="367" cy="329" r="3.9" fill="#3347a8"/><circle cx="383" cy="345" r="3.9" fill="#3347a8"/><circle cx="399" cy="338" r="3.9" fill="#3347a8"/><circle cx="414" cy="345" r="3.9" fill="#3347a8"/><circle cx="430" cy="306" r="3.9" fill="#3347a8"/><circle cx="446" cy="305" r="3.9" fill="#3347a8"/><circle cx="462" cy="303" r="3.9" fill="#3347a8"/><circle cx="477" cy="376" r="3.9" fill="#3347a8"/><path d="M113,509 H481" fill="none" stroke="#222" stroke-width="2" stroke-dasharray="11 5"/><text x="117" y="531" font-size="12.32" text-anchor="middle" fill="#111" font-weight="bold" stroke="#111" stroke-width="1.5">1</text><text x="133" y="531" font-size="12.32" text-anchor="middle" fill="#111" font-weight="bold" stroke="#111" stroke-width="1.5">2</text><text x="149" y="531" font-size="12.32" text-anchor="middle" fill="#111" font-weight="bold" stroke="#111" stroke-width="1.5">3</text><text x="165" y="531" font-size="12.32" text-anchor="middle" fill="#111" font-weight="bold" stroke="#111" stroke-width="1.5">4</text><text x="181" y="531" font-size="12.32" text-anchor="middle" fill="#111" font-weight="bold" stroke="#111" stroke-width="1.5">5</text><text x="197" y="531" font-size="12.32" text-anchor="middle" fill="#111" font-weight="bold" stroke="#111" stroke-width="1.5">6</text><text x="213" y="531" font-size="12.32" text-anchor="middle" fill="#111" font-weight="bold" stroke="#111" stroke-width="1.5">7</text><text x="228" y="531" font-size="12.32" text-anchor="middle" fill="#111" font-weight="bold" stroke="#111" stroke-width="1.5">8</text><text x="243" y="531" font-size="12.32" text-anchor="middle" fill="#111" font-weight="bold" stroke="#111" stroke-width="1.5">9</text><text x="259" y="531" font-size="12.32" text-anchor="middle" fill="#111" font-weight="bold" stroke="#111" stroke-width="1.5">10</text><text x="275" y="531" font-size="12.32" text-anchor="middle" fill="#111" font-weight="bold" stroke="#111" stroke-width="1.5">11</text><text x="290" y="531" font-size="12.32" text-anchor="middle" fill="#111" font-weight="bold" stroke="#111" stroke-width="1.5">12</text><text x="305" y="531" font-size="12.32" text-anchor="middle" fill="#111" font-weight="bold" stroke="#111" stroke-width="1.5">1</text><text x="321" y="531" font-size="12.32" text-anchor="middle" fill="#111" font-weight="bold" stroke="#111" stroke-width="1.5">2</text><text x="337" y="531" font-size="12.32" text-anchor="middle" fill="#111" font-weight="bold" stroke="#111" stroke-width="1.5">3</text><text x="352" y="531" font-size="12.32" text-anchor="middle" fill="#111" font-weight="bold" stroke="#111" stroke-width="1.5">4</text><text x="367" y="531" font-size="12.32" text-anchor="middle" fill="#111" font-weight="bold" stroke="#111" stroke-width="1.5">5</text><text x="383" y="531" font-size="12.32" text-anchor="middle" fill="#111" font-weight="bold" stroke="#111" stroke-width="1.5">6</text><text x="399" y="531" font-size="12.32" text-anchor="middle" fill="#111" font-weight="bold" stroke="#111" stroke-width="1.5">7</text><text x="414" y="531" font-size="12.32" text-anchor="middle" fill="#111" font-weight="bold" stroke="#111" stroke-width="1.5">8</text><text x="430" y="531" font-size="12.32" text-anchor="middle" fill="#111" font-weight="bold" stroke="#111" stroke-width="1.5">9</text><text x="446" y="531" font-size="12.32" text-anchor="middle" fill="#111" font-weight="bold" stroke="#111" stroke-width="1.5">10</text><text x="462" y="531" font-size="12.32" text-anchor="middle" fill="#111" font-weight="bold" stroke="#111" stroke-width="1.5">11</text><text x="477" y="531" font-size="12.32" text-anchor="middle" fill="#111" font-weight="bold" stroke="#111" stroke-width="1.5">12</text><path d="M566,486 L582,431 L598,444 L614,481 L630,448 L645,461 L660,434 L676,494 L691,424 L707,480 L723,441 L739,468 L755,491 L771,476 L787,456 L802,477 L818,483 L834,452 L850,467 L866,494 L881,476 L897,305 L912,373 L928,487" fill="none" stroke="#93a2dc" stroke-width="2.4" stroke-linejoin="round"/><circle cx="566" cy="486" r="3.9" fill="#3347a8"/><circle cx="582" cy="431" r="3.9" fill="#3347a8"/><circle cx="598" cy="444" r="3.9" fill="#3347a8"/><circle cx="614" cy="481" r="3.9" fill="#3347a8"/><circle cx="630" cy="448" r="3.9" fill="#3347a8"/><circle cx="645" cy="461" r="3.9" fill="#3347a8"/><circle cx="660" cy="434" r="3.9" fill="#3347a8"/><circle cx="676" cy="494" r="3.9" fill="#3347a8"/><circle cx="691" cy="424" r="3.9" fill="#3347a8"/><circle cx="707" cy="480" r="3.9" fill="#3347a8"/><circle cx="723" cy="441" r="3.9" fill="#3347a8"/><circle cx="739" cy="468" r="3.9" fill="#3347a8"/><circle cx="755" cy="491" r="3.9" fill="#3347a8"/><circle cx="771" cy="476" r="3.9" fill="#3347a8"/><circle cx="787" cy="456" r="3.9" fill="#3347a8"/><circle cx="802" cy="477" r="3.9" fill="#3347a8"/><circle cx="818" cy="483" r="3.9" fill="#3347a8"/><circle cx="834" cy="452" r="3.9" fill="#3347a8"/><circle cx="850" cy="467" r="3.9" fill="#3347a8"/><circle cx="866" cy="494" r="3.9" fill="#3347a8"/><circle cx="881" cy="476" r="3.9" fill="#3347a8"/><circle cx="897" cy="305" r="3.9" fill="#3347a8"/><circle cx="912" cy="373" r="3.9" fill="#3347a8"/><circle cx="928" cy="487" r="3.9" fill="#3347a8"/><path d="M562,509 H932" fill="none" stroke="#222" stroke-width="2" stroke-dasharray="11 5"/><text x="566" y="531" font-size="12.32" text-anchor="middle" fill="#111" font-weight="bold" stroke="#111" stroke-width="1.5">1</text><text x="582" y="531" font-size="12.32" text-anchor="middle" fill="#111" font-weight="bold" stroke="#111" stroke-width="1.5">2</text><text x="598" y="531" font-size="12.32" text-anchor="middle" fill="#111" font-weight="bold" stroke="#111" stroke-width="1.5">3</text><text x="614" y="531" font-size="12.32" text-anchor="middle" fill="#111" font-weight="bold" stroke="#111" stroke-width="1.5">4</text><text x="630" y="531" font-size="12.32" text-anchor="middle" fill="#111" font-weight="bold" stroke="#111" stroke-width="1.5">5</text><text x="645" y="531" font-size="12.32" text-anchor="middle" fill="#111" font-weight="bold" stroke="#111" stroke-width="1.5">6</text><text x="660" y="531" font-size="12.32" text-anchor="middle" fill="#111" font-weight="bold" stroke="#111" stroke-width="1.5">7</text><text x="676" y="531" font-size="12.32" text-anchor="middle" fill="#111" font-weight="bold" stroke="#111" stroke-width="1.5">8</text><text x="691" y="531" font-size="12.32" text-anchor="middle" fill="#111" font-weight="bold" stroke="#111" stroke-width="1.5">9</text><text x="707" y="531" font-size="12.32" text-anchor="middle" fill="#111" font-weight="bold" stroke="#111" stroke-width="1.5">10</text><text x="723" y="531" font-size="12.32" text-anchor="middle" fill="#111" font-weight="bold" stroke="#111" stroke-width="1.5">11</text><text x="739" y="531" font-size="12.32" text-anchor="middle" fill="#111" font-weight="bold" stroke="#111" stroke-width="1.5">12</text><text x="755" y="531" font-size="12.32" text-anchor="middle" fill="#111" font-weight="bold" stroke="#111" stroke-width="1.5">1</text><text x="771" y="531" font-size="12.32" text-anchor="middle" fill="#111" font-weight="bold" stroke="#111" stroke-width="1.5">2</text><text x="787" y="531" font-size="12.32" text-anchor="middle" fill="#111" font-weight="bold" stroke="#111" stroke-width="1.5">3</text><text x="802" y="531" font-size="12.32" text-anchor="middle" fill="#111" font-weight="bold" stroke="#111" stroke-width="1.5">4</text><text x="818" y="531" font-size="12.32" text-anchor="middle" fill="#111" font-weight="bold" stroke="#111" stroke-width="1.5">5</text><text x="834" y="531" font-size="12.32" text-anchor="middle" fill="#111" font-weight="bold" stroke="#111" stroke-width="1.5">6</text><text x="850" y="531" font-size="12.32" text-anchor="middle" fill="#111" font-weight="bold" stroke="#111" stroke-width="1.5">7</text><text x="866" y="531" font-size="12.32" text-anchor="middle" fill="#111" font-weight="bold" stroke="#111" stroke-width="1.5">8</text><text x="881" y="531" font-size="12.32" text-anchor="middle" fill="#111" font-weight="bold" stroke="#111" stroke-width="1.5">9</text><text x="897" y="531" font-size="12.32" text-anchor="middle" fill="#111" font-weight="bold" stroke="#111" stroke-width="1.5">10</text><text x="912" y="531" font-size="12.32" text-anchor="middle" fill="#111" font-weight="bold" stroke="#111" stroke-width="1.5">11</text><text x="928" y="531" font-size="12.32" text-anchor="middle" fill="#111" font-weight="bold" stroke="#111" stroke-width="1.5">12</text><text x="208" y="273" font-size="19.04" text-anchor="middle" fill="#111" font-weight="bold" stroke="#111" stroke-width="1.5">2016</text><text x="385" y="273" font-size="19.04" text-anchor="middle" fill="#111" font-weight="bold" stroke="#111" stroke-width="1.5">2017</text><text x="657" y="277" font-size="19.04" text-anchor="middle" fill="#111" font-weight="bold" stroke="#111" stroke-width="1.5">2016</text><text x="835" y="277" font-size="19.04" text-anchor="middle" fill="#111" font-weight="bold" stroke="#111" stroke-width="1.5">2017</text><path d="M945,258 V500 M945,258 h10 M945,298 h10 M945,338 h10 M945,378 h10 M945,420 h10 M945,460 h10 M945,500 h10" fill="none" stroke="#666" stroke-width="3"/><text x="973" y="258" font-size="12.32" text-anchor="middle" fill="#111" font-weight="bold" transform="rotate(-90 973 258)" stroke="#111" stroke-width="2.1">120</text><text x="973" y="298" font-size="12.32" text-anchor="middle" fill="#111" font-weight="bold" transform="rotate(-90 973 298)" stroke="#111" stroke-width="2.1">100</text><text x="973" y="338" font-size="12.32" text-anchor="middle" fill="#111" font-weight="bold" transform="rotate(-90 973 338)" stroke="#111" stroke-width="2.1">80</text><text x="973" y="378" font-size="12.32" text-anchor="middle" fill="#111" font-weight="bold" transform="rotate(-90 973 378)" stroke="#111" stroke-width="2.1">60</text><text x="973" y="420" font-size="12.32" text-anchor="middle" fill="#111" font-weight="bold" transform="rotate(-90 973 420)" stroke="#111" stroke-width="2.1">40</text><text x="973" y="460" font-size="12.32" text-anchor="middle" fill="#111" font-weight="bold" transform="rotate(-90 973 460)" stroke="#111" stroke-width="2.1">20</text><text x="973" y="500" font-size="12.32" text-anchor="middle" fill="#111" font-weight="bold" transform="rotate(-90 973 500)" stroke="#111" stroke-width="2.1">0</text><text x="1008" y="378" font-size="11.76" text-anchor="middle" fill="#111" font-weight="bold" transform="rotate(-90 1008 378)" stroke="#111" stroke-width="2.1">Totale quantità sequestrate (tonnellate)</text><path d="M222,575 H248" fill="none" stroke="#93a2dc" stroke-width="2.4"/><circle cx="235" cy="575" r="4" fill="#2b3fa3"/><text x="258" y="580" font-size="13.44" text-anchor="start" fill="#111" font-weight="bold" stroke="#111" stroke-width="1.5">Totale sequestri</text><path d="M630,577 H656" fill="none" stroke="#93a2dc" stroke-width="2.4"/><circle cx="643" cy="577" r="4" fill="#2b3fa3"/><text x="665" y="582" font-size="13.44" text-anchor="start" fill="#111" font-weight="bold" stroke="#111" stroke-width="1.5">Totale quantità sequestrate</text></g></g>
<rect x="100.5" y="305.4" width="211.90" height="141.50" fill="none" stroke="#959595" stroke-width="1"/>
</g>
<g class="artboard">
<clipPath id="ab5"><rect x="335.8" y="305.4" width="211.60" height="141.50"/></clipPath>
<g clip-path="url(#ab5)"><g transform="translate(325,295) scale(0.218182)"><path d="M112,147 V478 M112,147 h-8 M112,193 h-8 M112,242 h-8 M112,290 h-8 M112,337 h-8 M112,385 h-8 M112,433 h-8 M112,478 h-8" fill="none" stroke="#666" stroke-width="2.4"/><text x="88" y="147" font-size="12.32" text-anchor="middle" fill="#111" transform="rotate(-90 88 147)" stroke="#111" stroke-width="1.4">35</text><text x="88" y="193" font-size="12.32" text-anchor="middle" fill="#111" transform="rotate(-90 88 193)" stroke="#111" stroke-width="1.4">30</text><text x="88" y="242" font-size="12.32" text-anchor="middle" fill="#111" transform="rotate(-90 88 242)" stroke="#111" stroke-width="1.4">25</text><text x="88" y="290" font-size="12.32" text-anchor="middle" fill="#111" transform="rotate(-90 88 290)" stroke="#111" stroke-width="1.4">20</text><text x="88" y="337" font-size="12.32" text-anchor="middle" fill="#111" transform="rotate(-90 88 337)" stroke="#111" stroke-width="1.4">15</text><text x="88" y="385" font-size="12.32" text-anchor="middle" fill="#111" transform="rotate(-90 88 385)" stroke="#111" stroke-width="1.4">10</text><text x="88" y="433" font-size="12.32" text-anchor="middle" fill="#111" transform="rotate(-90 88 433)" stroke="#111" stroke-width="1.4">05</text><text x="88" y="478" font-size="12.32" text-anchor="middle" fill="#111" transform="rotate(-90 88 478)" stroke="#111" stroke-width="1.4">0</text><text x="60" y="312" font-size="12.88" text-anchor="middle" fill="#111" font-weight="bold" transform="rotate(-90 60 312)" stroke="#111" stroke-width="2.1">Frequenza (sequestri)</text><rect x="112.0" y="195.0" width="36.4" height="283.0" fill="#fab123" stroke="#c98f1c" stroke-width="1.6"/><rect x="148.4" y="440.0" width="36.4" height="38.0" fill="#fab123" stroke="#c98f1c" stroke-width="1.6"/><rect x="184.8" y="464.0" width="36.4" height="14.0" fill="#fab123" stroke="#c98f1c" stroke-width="1.6"/><rect x="221.2" y="469.0" width="36.4" height="9.0" fill="#fab123" stroke="#c98f1c" stroke-width="1.6"/><rect x="257.6" y="472.0" width="36.4" height="6.0" fill="#fab123" stroke="#c98f1c" stroke-width="1.6"/><rect x="294.0" y="474.0" width="36.4" height="4.0" fill="#fab123" stroke="#c98f1c" stroke-width="1.6"/><rect x="330.4" y="475.0" width="36.4" height="3.0" fill="#fab123" stroke="#c98f1c" stroke-width="1.6"/><rect x="366.8" y="476.0" width="36.4" height="2.0" fill="#fab123" stroke="#c98f1c" stroke-width="1.6"/><rect x="403.2" y="476.0" width="36.4" height="2.0" fill="#fab123" stroke="#c98f1c" stroke-width="1.6"/><rect x="439.6" y="447.0" width="36.4" height="31.0" fill="#fab123" stroke="#c98f1c" stroke-width="1.6"/><path d="M112,478 H478" fill="none" stroke="#666" stroke-width="2.4"/><text x="112.0" y="506" font-size="12.88" text-anchor="middle" fill="#111" stroke="#111" stroke-width="0.8">0</text><text x="148.4" y="506" font-size="12.88" text-anchor="middle" fill="#111" stroke="#111" stroke-width="0.8">5</text><text x="184.8" y="506" font-size="12.88" text-anchor="middle" fill="#111" stroke="#111" stroke-width="0.8">10</text><text x="221.2" y="506" font-size="12.88" text-anchor="middle" fill="#111" stroke="#111" stroke-width="0.8">15</text><text x="257.6" y="506" font-size="12.88" text-anchor="middle" fill="#111" stroke="#111" stroke-width="0.8">20</text><text x="294.0" y="506" font-size="12.88" text-anchor="middle" fill="#111" stroke="#111" stroke-width="0.8">25</text><text x="330.4" y="506" font-size="12.88" text-anchor="middle" fill="#111" stroke="#111" stroke-width="0.8">30</text><text x="366.79999999999995" y="506" font-size="12.88" text-anchor="middle" fill="#111" stroke="#111" stroke-width="0.8">35</text><text x="403.2" y="506" font-size="12.88" text-anchor="middle" fill="#111" stroke="#111" stroke-width="0.8">40</text><text x="439.59999999999997" y="506" font-size="12.88" text-anchor="middle" fill="#111" stroke="#111" stroke-width="0.8">45</text><text x="476.0" y="506" font-size="12.88" text-anchor="middle" fill="#111" stroke="#111" stroke-width="0.8">50</text><text x="302" y="539" font-size="13.44" text-anchor="middle" fill="#111" font-weight="bold" stroke="#111" stroke-width="1.5">Grandezza sequestri (tonnellate)</text><path d="M732,145 V500" fill="none" stroke="#d6d6d6" stroke-width="2"/><text x="632" y="160" font-size="13.44" text-anchor="middle" fill="#111" font-weight="bold" stroke="#111" stroke-width="1.5">Grandezza mediana</text><text x="632" y="180" font-size="13.44" text-anchor="middle" fill="#111" stroke="#111" stroke-width="0.8">1,47 kg</text><text x="833" y="160" font-size="13.44" text-anchor="middle" fill="#111" font-weight="bold" stroke="#111" stroke-width="1.5">Grandezza mediana</text><text x="833" y="180" font-size="13.44" text-anchor="middle" fill="#111" stroke="#111" stroke-width="0.8">2,17 kg</text><path d="M532,355 L549,328 L567,349 L585,363 L602,359 L620,322 L637,362 L655,335 L672,347 L690,329 L708,335 L725,331 L742,340 L760,335 L777,334 L795,284 L812,326 L830,310 L848,331 L865,369 L882,316 L900,348 L917,269 L935,241" fill="none" stroke="#93a2dc" stroke-width="2.4" stroke-linejoin="round"/><path d="M532,350 L537,359 L527,359 Z" fill="#2b3fa3"/><path d="M549,323 L554,332 L544,332 Z" fill="#2b3fa3"/><path d="M567,344 L572,353 L562,353 Z" fill="#2b3fa3"/><path d="M585,358 L590,367 L580,367 Z" fill="#2b3fa3"/><path d="M602,354 L607,363 L597,363 Z" fill="#2b3fa3"/><path d="M620,317 L625,326 L615,326 Z" fill="#2b3fa3"/><path d="M637,357 L642,366 L632,366 Z" fill="#2b3fa3"/><path d="M655,330 L660,339 L650,339 Z" fill="#2b3fa3"/><path d="M672,342 L677,351 L667,351 Z" fill="#2b3fa3"/><path d="M690,324 L695,333 L685,333 Z" fill="#2b3fa3"/><path d="M708,330 L713,339 L703,339 Z" fill="#2b3fa3"/><path d="M725,326 L730,335 L720,335 Z" fill="#2b3fa3"/><path d="M742,335 L747,344 L737,344 Z" fill="#2b3fa3"/><path d="M760,330 L765,339 L755,339 Z" fill="#2b3fa3"/><path d="M777,329 L782,338 L772,338 Z" fill="#2b3fa3"/><path d="M795,279 L800,288 L790,288 Z" fill="#2b3fa3"/><path d="M812,321 L817,330 L807,330 Z" fill="#2b3fa3"/><path d="M830,305 L835,314 L825,314 Z" fill="#2b3fa3"/><path d="M848,326 L853,335 L843,335 Z" fill="#2b3fa3"/><path d="M865,364 L870,373 L860,373 Z" fill="#2b3fa3"/><path d="M882,311 L887,320 L877,320 Z" fill="#2b3fa3"/><path d="M900,343 L905,352 L895,352 Z" fill="#2b3fa3"/><path d="M917,264 L922,273 L912,273 Z" fill="#2b3fa3"/><path d="M935,236 L940,245 L930,245 Z" fill="#2b3fa3"/><path d="M950,200 V472 M950,200 h10 M950,268 h10 M950,336 h10 M950,404 h10 M950,472 h10" fill="none" stroke="#666" stroke-width="3"/><text x="975" y="204" font-size="12.32" text-anchor="middle" fill="#111" font-weight="bold" transform="rotate(0 975 204)" stroke="#111" stroke-width="2.1">4</text><text x="975" y="272" font-size="12.32" text-anchor="middle" fill="#111" font-weight="bold" transform="rotate(0 975 272)" stroke="#111" stroke-width="2.1">3</text><text x="975" y="340" font-size="12.32" text-anchor="middle" fill="#111" font-weight="bold" transform="rotate(0 975 340)" stroke="#111" stroke-width="2.1">2</text><text x="975" y="408" font-size="12.32" text-anchor="middle" fill="#111" font-weight="bold" transform="rotate(0 975 408)" stroke="#111" stroke-width="2.1">1</text><text x="975" y="476" font-size="12.32" text-anchor="middle" fill="#111" font-weight="bold" transform="rotate(0 975 476)" stroke="#111" stroke-width="2.1">0</text><text x="1002" y="336" font-size="12.32" text-anchor="middle" fill="#111" font-weight="bold" transform="rotate(90 1002 336)" stroke="#111" stroke-width="2.1">Mediana Kg per sequestro</text><path d="M528,482 H940" fill="none" stroke="#222" stroke-width="2" stroke-dasharray="11 5"/><text x="532" y="506" font-size="12.32" text-anchor="middle" fill="#111" font-weight="bold" stroke="#111" stroke-width="1.5">1</text><text x="549" y="506" font-size="12.32" text-anchor="middle" fill="#111" font-weight="bold" stroke="#111" stroke-width="1.5">2</text><text x="567" y="506" font-size="12.32" text-anchor="middle" fill="#111" font-weight="bold" stroke="#111" stroke-width="1.5">3</text><text x="585" y="506" font-size="12.32" text-anchor="middle" fill="#111" font-weight="bold" stroke="#111" stroke-width="1.5">4</text><text x="602" y="506" font-size="12.32" text-anchor="middle" fill="#111" font-weight="bold" stroke="#111" stroke-width="1.5">5</text><text x="620" y="506" font-size="12.32" text-anchor="middle" fill="#111" font-weight="bold" stroke="#111" stroke-width="1.5">6</text><text x="637" y="506" font-size="12.32" text-anchor="middle" fill="#111" font-weight="bold" stroke="#111" stroke-width="1.5">7</text><text x="655" y="506" font-size="12.32" text-anchor="middle" fill="#111" font-weight="bold" stroke="#111" stroke-width="1.5">8</text><text x="672" y="506" font-size="12.32" text-anchor="middle" fill="#111" font-weight="bold" stroke="#111" stroke-width="1.5">9</text><text x="690" y="506" font-size="12.32" text-anchor="middle" fill="#111" font-weight="bold" stroke="#111" stroke-width="1.5">10</text><text x="708" y="506" font-size="12.32" text-anchor="middle" fill="#111" font-weight="bold" stroke="#111" stroke-width="1.5">11</text><text x="725" y="506" font-size="12.32" text-anchor="middle" fill="#111" font-weight="bold" stroke="#111" stroke-width="1.5">12</text><text x="742" y="506" font-size="12.32" text-anchor="middle" fill="#111" font-weight="bold" stroke="#111" stroke-width="1.5">1</text><text x="760" y="506" font-size="12.32" text-anchor="middle" fill="#111" font-weight="bold" stroke="#111" stroke-width="1.5">2</text><text x="777" y="506" font-size="12.32" text-anchor="middle" fill="#111" font-weight="bold" stroke="#111" stroke-width="1.5">3</text><text x="795" y="506" font-size="12.32" text-anchor="middle" fill="#111" font-weight="bold" stroke="#111" stroke-width="1.5">4</text><text x="812" y="506" font-size="12.32" text-anchor="middle" fill="#111" font-weight="bold" stroke="#111" stroke-width="1.5">5</text><text x="830" y="506" font-size="12.32" text-anchor="middle" fill="#111" font-weight="bold" stroke="#111" stroke-width="1.5">6</text><text x="848" y="506" font-size="12.32" text-anchor="middle" fill="#111" font-weight="bold" stroke="#111" stroke-width="1.5">7</text><text x="865" y="506" font-size="12.32" text-anchor="middle" fill="#111" font-weight="bold" stroke="#111" stroke-width="1.5">8</text><text x="882" y="506" font-size="12.32" text-anchor="middle" fill="#111" font-weight="bold" stroke="#111" stroke-width="1.5">9</text><text x="900" y="506" font-size="12.32" text-anchor="middle" fill="#111" font-weight="bold" stroke="#111" stroke-width="1.5">10</text><text x="917" y="506" font-size="12.32" text-anchor="middle" fill="#111" font-weight="bold" stroke="#111" stroke-width="1.5">11</text><text x="935" y="506" font-size="12.32" text-anchor="middle" fill="#111" font-weight="bold" stroke="#111" stroke-width="1.5">12</text><text x="645" y="545" font-size="19.04" text-anchor="middle" fill="#111" font-weight="bold" stroke="#111" stroke-width="1.5">2016</text><text x="833" y="545" font-size="19.04" text-anchor="middle" fill="#111" font-weight="bold" stroke="#111" stroke-width="1.5">2017</text><path d="M620,577 H646" fill="none" stroke="#93a2dc" stroke-width="2.4"/><path d="M632,572 l5,9 h-10 Z" fill="#2b3fa3"/><text x="655" y="582" font-size="13.44" text-anchor="start" fill="#111" font-weight="bold" stroke="#111" stroke-width="1.5">Mediana Kg per sequestro</text></g></g>
<rect x="335.8" y="305.4" width="211.60" height="141.50" fill="none" stroke="#959595" stroke-width="1"/>
</g>
<g class="artboard">
<clipPath id="ab6"><rect x="571.4" y="305.4" width="211.20" height="141.50"/></clipPath>
<g clip-path="url(#ab6)"><g transform="translate(560,295) scale(0.218182)"><path d="M105,170 V465 M105,170 h-8 M105,230 h-8 M105,288 h-8 M105,346 h-8 M105,406 h-8 M105,465 h-8" fill="none" stroke="#666" stroke-width="3"/><text x="84" y="174" font-size="12.32" text-anchor="middle" fill="#111" font-weight="bold" transform="rotate(0 84 174)" stroke="#111" stroke-width="2.1">50</text><text x="84" y="234" font-size="12.32" text-anchor="middle" fill="#111" font-weight="bold" transform="rotate(0 84 234)" stroke="#111" stroke-width="2.1">40</text><text x="84" y="292" font-size="12.32" text-anchor="middle" fill="#111" font-weight="bold" transform="rotate(0 84 292)" stroke="#111" stroke-width="2.1">30</text><text x="84" y="350" font-size="12.32" text-anchor="middle" fill="#111" font-weight="bold" transform="rotate(0 84 350)" stroke="#111" stroke-width="2.1">20</text><text x="84" y="410" font-size="12.32" text-anchor="middle" fill="#111" font-weight="bold" transform="rotate(0 84 410)" stroke="#111" stroke-width="2.1">10</text><text x="84" y="469" font-size="12.32" text-anchor="middle" fill="#111" font-weight="bold" transform="rotate(0 84 469)" stroke="#111" stroke-width="2.1">0</text><text x="60" y="318" font-size="12.88" text-anchor="middle" fill="#111" font-weight="bold" transform="rotate(-90 60 318)" stroke="#111" stroke-width="2.1">Totale sequestri</text><rect x="123.5" y="216.0" width="23.0" height="249.0" fill="#fab123"/><rect x="161.5" y="240.0" width="23.0" height="225.0" fill="#fab123"/><rect x="199.5" y="317.0" width="23.0" height="148.0" fill="#fab123"/><rect x="237.5" y="388.0" width="23.0" height="77.0" fill="#fab123"/><rect x="275.5" y="430.0" width="23.0" height="35.0" fill="#fab123"/><rect x="313.5" y="430.0" width="23.0" height="35.0" fill="#fab123"/><rect x="351.5" y="430.0" width="23.0" height="35.0" fill="#fab123"/><rect x="389.5" y="436.0" width="23.0" height="29.0" fill="#fab123"/><rect x="427.5" y="441.0" width="23.0" height="24.0" fill="#fab123"/><rect x="465.5" y="441.0" width="23.0" height="24.0" fill="#fab123"/><path d="M105,465 H497" fill="none" stroke="#8a8a8a" stroke-width="2.4"/><text x="141" y="486" font-size="13.1" text-anchor="end" fill="#111" font-weight="bold" transform="rotate(-90 141 486)" stroke="#111" stroke-width="2.1">Costa adriatica</text><text x="179" y="486" font-size="13.1" text-anchor="end" fill="#111" font-weight="bold" transform="rotate(-90 179 486)" stroke="#111" stroke-width="2.1">Sicilia</text><text x="217" y="486" font-size="13.1" text-anchor="end" fill="#111" font-weight="bold" transform="rotate(-90 217 486)" stroke="#111" stroke-width="2.1">Porto</text><text x="255" y="486" font-size="13.1" text-anchor="end" fill="#111" font-weight="bold" transform="rotate(-90 255 486)" stroke="#111" stroke-width="2.1">Campania</text><text x="293" y="486" font-size="13.1" text-anchor="end" fill="#111" font-weight="bold" transform="rotate(-90 293 486)" stroke="#111" stroke-width="2.1">Pianura</text><text x="331" y="486" font-size="13.1" text-anchor="end" fill="#111" font-weight="bold" transform="rotate(-90 331 486)" stroke="#111" stroke-width="2.1">Zona industriale</text><text x="369" y="486" font-size="13.1" text-anchor="end" fill="#111" font-weight="bold" transform="rotate(-90 369 486)" stroke="#111" stroke-width="2.1">Costa ionica</text><text x="407" y="486" font-size="13.1" text-anchor="end" fill="#111" font-weight="bold" transform="rotate(-90 407 486)" stroke="#111" stroke-width="2.1">Frontiera terrestre</text><text x="445" y="486" font-size="13.1" text-anchor="end" fill="#111" font-weight="bold" transform="rotate(-90 445 486)" stroke="#111" stroke-width="2.1">Altre zone</text><text x="483" y="486" font-size="13.1" text-anchor="end" fill="#111" font-weight="bold" transform="rotate(-90 483 486)" stroke="#111" stroke-width="2.1">Capoluogo</text><rect x="570.5" y="175.0" width="23.0" height="290.0" fill="#19469a"/><rect x="608.5" y="248.0" width="23.0" height="217.0" fill="#19469a"/><rect x="646.5" y="280.0" width="23.0" height="185.0" fill="#19469a"/><rect x="685.5" y="340.0" width="23.0" height="125.0" fill="#19469a"/><rect x="723.5" y="354.0" width="23.0" height="111.0" fill="#19469a"/><rect x="761.5" y="372.0" width="23.0" height="93.0" fill="#19469a"/><rect x="800.5" y="433.0" width="23.0" height="32.0" fill="#19469a"/><rect x="838.5" y="447.0" width="23.0" height="18.0" fill="#19469a"/><rect x="876.5" y="448.0" width="23.0" height="17.0" fill="#19469a"/><rect x="915.5" y="453.0" width="23.0" height="12.0" fill="#19469a"/><path d="M560,465 H957" fill="none" stroke="#8a8a8a" stroke-width="2.4"/><path d="M957,170 V465 M957,170 h8 M957,230 h8 M957,288 h8 M957,346 h8 M957,406 h8 M957,465 h8" fill="none" stroke="#666" stroke-width="3"/><text x="978" y="174" font-size="12.32" text-anchor="middle" fill="#111" font-weight="bold" transform="rotate(0 978 174)" stroke="#111" stroke-width="2.1">50</text><text x="978" y="234" font-size="12.32" text-anchor="middle" fill="#111" font-weight="bold" transform="rotate(0 978 234)" stroke="#111" stroke-width="2.1">40</text><text x="978" y="292" font-size="12.32" text-anchor="middle" fill="#111" font-weight="bold" transform="rotate(0 978 292)" stroke="#111" stroke-width="2.1">30</text><text x="978" y="350" font-size="12.32" text-anchor="middle" fill="#111" font-weight="bold" transform="rotate(0 978 350)" stroke="#111" stroke-width="2.1">20</text><text x="978" y="410" font-size="12.32" text-anchor="middle" fill="#111" font-weight="bold" transform="rotate(0 978 410)" stroke="#111" stroke-width="2.1">10</text><text x="978" y="469" font-size="12.32" text-anchor="middle" fill="#111" font-weight="bold" transform="rotate(0 978 469)" stroke="#111" stroke-width="2.1">0</text><text x="1002" y="318" font-size="12.88" text-anchor="middle" fill="#111" font-weight="bold" transform="rotate(90 1002 318)" stroke="#111" stroke-width="2.1">Tonnellate totali</text><text x="588" y="486" font-size="13.1" text-anchor="end" fill="#111" font-weight="bold" transform="rotate(-90 588 486)" stroke="#111" stroke-width="2.1">Zona industriale</text><text x="626" y="486" font-size="13.1" text-anchor="end" fill="#111" font-weight="bold" transform="rotate(-90 626 486)" stroke="#111" stroke-width="2.1">Porto</text><text x="664" y="486" font-size="13.1" text-anchor="end" fill="#111" font-weight="bold" transform="rotate(-90 664 486)" stroke="#111" stroke-width="2.1">Sicilia</text><text x="703" y="486" font-size="13.1" text-anchor="end" fill="#111" font-weight="bold" transform="rotate(-90 703 486)" stroke="#111" stroke-width="2.1">Campania</text><text x="741" y="486" font-size="13.1" text-anchor="end" fill="#111" font-weight="bold" transform="rotate(-90 741 486)" stroke="#111" stroke-width="2.1">Autostrada</text><text x="779" y="486" font-size="13.1" text-anchor="end" fill="#111" font-weight="bold" transform="rotate(-90 779 486)" stroke="#111" stroke-width="2.1">Pianura</text><text x="818" y="486" font-size="13.1" text-anchor="end" fill="#111" font-weight="bold" transform="rotate(-90 818 486)" stroke="#111" stroke-width="2.1">Costa ionica</text><text x="856" y="486" font-size="13.1" text-anchor="end" fill="#111" font-weight="bold" transform="rotate(-90 856 486)" stroke="#111" stroke-width="2.1">Costa adriatica</text><text x="894" y="486" font-size="13.1" text-anchor="end" fill="#111" font-weight="bold" transform="rotate(-90 894 486)" stroke="#111" stroke-width="2.1">Frontiera terrestre</text><text x="933" y="486" font-size="13.1" text-anchor="end" fill="#111" font-weight="bold" transform="rotate(-90 933 486)" stroke="#111" stroke-width="2.1">Capoluogo</text></g></g>
<rect x="571.4" y="305.4" width="211.20" height="141.50" fill="none" stroke="#959595" stroke-width="1"/>
</g>
<g class="artboard">
<clipPath id="ab7"><rect x="806.5" y="305.4" width="211.50" height="141.50"/></clipPath>
<g clip-path="url(#ab7)"><g transform="translate(795,295) scale(0.218182)"><path d="M105,175 V465 M105,175 h-8 M105,272 h-8 M105,368 h-8 M105,465 h-8" fill="none" stroke="#666" stroke-width="3"/><text x="84" y="179" font-size="12.32" text-anchor="middle" fill="#111" font-weight="bold" transform="rotate(0 84 179)" stroke="#111" stroke-width="2.1">60</text><text x="84" y="276" font-size="12.32" text-anchor="middle" fill="#111" font-weight="bold" transform="rotate(0 84 276)" stroke="#111" stroke-width="2.1">40</text><text x="84" y="372" font-size="12.32" text-anchor="middle" fill="#111" font-weight="bold" transform="rotate(0 84 372)" stroke="#111" stroke-width="2.1">20</text><text x="84" y="469" font-size="12.32" text-anchor="middle" fill="#111" font-weight="bold" transform="rotate(0 84 469)" stroke="#111" stroke-width="2.1">0</text><text x="60" y="335" font-size="12.88" text-anchor="middle" fill="#111" font-weight="bold" transform="rotate(-90 60 335)" stroke="#111" stroke-width="2.1">Totale sequestri</text><rect x="123.5" y="186.0" width="23.0" height="279.0" fill="#fab123"/><rect x="172.5" y="291.0" width="23.0" height="174.0" fill="#fab123"/><rect x="221.5" y="330.0" width="23.0" height="135.0" fill="#fab123"/><rect x="271.5" y="368.0" width="23.0" height="97.0" fill="#fab123"/><rect x="320.5" y="426.0" width="23.0" height="39.0" fill="#fab123"/><rect x="369.5" y="436.0" width="23.0" height="29.0" fill="#fab123"/><rect x="418.5" y="455.0" width="23.0" height="10.0" fill="#fab123"/><rect x="468.5" y="455.0" width="23.0" height="10.0" fill="#fab123"/><path d="M105,465 H497" fill="none" stroke="#8a8a8a" stroke-width="2.4"/><text x="141" y="486" font-size="12.1" text-anchor="end" fill="#111" font-weight="bold" transform="rotate(-90 141 486)" stroke="#111" stroke-width="2.1">Auto</text><text x="190" y="486" font-size="12.1" text-anchor="end" fill="#111" font-weight="bold" transform="rotate(-90 190 486)" stroke="#111" stroke-width="2.1">Tir</text><text x="239" y="486" font-size="12.1" text-anchor="end" fill="#111" font-weight="bold" transform="rotate(-90 239 486)" stroke="#111" stroke-width="2.1">Magazzino</text><text x="289" y="486" font-size="12.1" text-anchor="end" fill="#111" font-weight="bold" transform="rotate(-90 289 486)" stroke="#111" stroke-width="2.1">Nave</text><text x="338" y="486" font-size="12.1" text-anchor="end" fill="#111" font-weight="bold" transform="rotate(-90 338 486)" stroke="#111" stroke-width="2.1">Casa</text><text x="387" y="486" font-size="12.1" text-anchor="end" fill="#111" font-weight="bold" transform="rotate(-90 387 486)" stroke="#111" stroke-width="2.1">Treno</text><text x="436" y="486" font-size="12.1" text-anchor="end" fill="#111" font-weight="bold" transform="rotate(-90 436 486)" stroke="#111" stroke-width="2.1">Container</text><text x="486" y="486" font-size="12.1" text-anchor="end" fill="#111" font-weight="bold" transform="rotate(-90 486 486)" stroke="#111" stroke-width="2.1">Su strada</text><rect x="565.5" y="216.0" width="23.0" height="249.0" fill="#19469a"/><rect x="615.5" y="392.0" width="23.0" height="73.0" fill="#19469a"/><rect x="665.5" y="455.0" width="23.0" height="10.0" fill="#19469a"/><rect x="715.5" y="461.0" width="23.0" height="4.0" fill="#19469a"/><rect x="765.5" y="463.0" width="23.0" height="2.0" fill="#19469a"/><rect x="815.5" y="464.0" width="23.0" height="1.0" fill="#19469a"/><rect x="865.5" y="464.0" width="23.0" height="1.0" fill="#19469a"/><rect x="915.5" y="464.0" width="23.0" height="1.0" fill="#19469a"/><path d="M555,465 H955" fill="none" stroke="#8a8a8a" stroke-width="2.4"/><path d="M955,170 V465 M955,170 h8 M955,230 h8 M955,288 h8 M955,346 h8 M955,406 h8 M955,465 h8" fill="none" stroke="#666" stroke-width="3"/><text x="978" y="174" font-size="12.32" text-anchor="middle" fill="#111" font-weight="bold" transform="rotate(0 978 174)" stroke="#111" stroke-width="2.1">100</text><text x="978" y="234" font-size="12.32" text-anchor="middle" fill="#111" font-weight="bold" transform="rotate(0 978 234)" stroke="#111" stroke-width="2.1">80</text><text x="978" y="292" font-size="12.32" text-anchor="middle" fill="#111" font-weight="bold" transform="rotate(0 978 292)" stroke="#111" stroke-width="2.1">60</text><text x="978" y="350" font-size="12.32" text-anchor="middle" fill="#111" font-weight="bold" transform="rotate(0 978 350)" stroke="#111" stroke-width="2.1">40</text><text x="978" y="410" font-size="12.32" text-anchor="middle" fill="#111" font-weight="bold" transform="rotate(0 978 410)" stroke="#111" stroke-width="2.1">20</text><text x="978" y="469" font-size="12.32" text-anchor="middle" fill="#111" font-weight="bold" transform="rotate(0 978 469)" stroke="#111" stroke-width="2.1">0</text><text x="1002" y="318" font-size="12.88" text-anchor="middle" fill="#111" font-weight="bold" transform="rotate(90 1002 318)" stroke="#111" stroke-width="2.1">Tonnellate totali</text><text x="583" y="486" font-size="12.1" text-anchor="end" fill="#111" font-weight="bold" transform="rotate(-90 583 486)" stroke="#111" stroke-width="2.1">Tir</text><text x="633" y="486" font-size="12.1" text-anchor="end" fill="#111" font-weight="bold" transform="rotate(-90 633 486)" stroke="#111" stroke-width="2.1">Magazzino</text><text x="683" y="486" font-size="12.1" text-anchor="end" fill="#111" font-weight="bold" transform="rotate(-90 683 486)" stroke="#111" stroke-width="2.1">Auto</text><text x="733" y="486" font-size="12.1" text-anchor="end" fill="#111" font-weight="bold" transform="rotate(-90 733 486)" stroke="#111" stroke-width="2.1">Container</text><text x="783" y="486" font-size="12.1" text-anchor="end" fill="#111" font-weight="bold" transform="rotate(-90 783 486)" stroke="#111" stroke-width="2.1">Nave</text><text x="833" y="486" font-size="12.1" text-anchor="end" fill="#111" font-weight="bold" transform="rotate(-90 833 486)" stroke="#111" stroke-width="2.1">Casa</text><text x="883" y="486" font-size="12.1" text-anchor="end" fill="#111" font-weight="bold" transform="rotate(-90 883 486)" stroke="#111" stroke-width="2.1">Treno</text><text x="933" y="486" font-size="12.1" text-anchor="end" fill="#111" font-weight="bold" transform="rotate(-90 933 486)" stroke="#111" stroke-width="2.1">Su strada</text></g></g>
<rect x="806.5" y="305.4" width="211.50" height="141.50" fill="none" stroke="#959595" stroke-width="1"/>
</g>
<g class="artboard">
<clipPath id="ab8"><rect x="100.5" y="470.5" width="211.90" height="140.60"/></clipPath>
<g clip-path="url(#ab8)"><g transform="translate(90,460) scale(0.218182)"><rect x="142" y="118" width="876" height="425" fill="none" stroke="#9a9a9a" stroke-width="3.4"/><path d="M85,540 V132" fill="none" stroke="#333" stroke-width="3"/><path d="M85,118 l8,19 h-16 Z" fill="#111"/><text x="114" y="135" font-size="11.76" text-anchor="middle" fill="#111" font-weight="bold" transform="rotate(-90 114 135)" stroke="#111" stroke-width="2.1">8%</text><path d="M132,135 h10" fill="none" stroke="#8a8a8a" stroke-width="2"/><text x="114" y="190" font-size="11.76" text-anchor="middle" fill="#111" font-weight="bold" transform="rotate(-90 114 190)" stroke="#111" stroke-width="2.1">7%</text><path d="M132,190 h10" fill="none" stroke="#8a8a8a" stroke-width="2"/><text x="114" y="247" font-size="11.76" text-anchor="middle" fill="#111" font-weight="bold" transform="rotate(-90 114 247)" stroke="#111" stroke-width="2.1">6%</text><path d="M132,247 h10" fill="none" stroke="#8a8a8a" stroke-width="2"/><text x="114" y="303" font-size="11.76" text-anchor="middle" fill="#111" font-weight="bold" transform="rotate(-90 114 303)" stroke="#111" stroke-width="2.1">5%</text><path d="M132,303 h10" fill="none" stroke="#8a8a8a" stroke-width="2"/><text x="114" y="358" font-size="11.76" text-anchor="middle" fill="#111" font-weight="bold" transform="rotate(-90 114 358)" stroke="#111" stroke-width="2.1">4%</text><path d="M132,358 h10" fill="none" stroke="#8a8a8a" stroke-width="2"/><text x="114" y="414" font-size="11.76" text-anchor="middle" fill="#111" font-weight="bold" transform="rotate(-90 114 414)" stroke="#111" stroke-width="2.1">3%</text><path d="M132,414 h10" fill="none" stroke="#8a8a8a" stroke-width="2"/><text x="114" y="470" font-size="11.76" text-anchor="middle" fill="#111" font-weight="bold" transform="rotate(-90 114 470)" stroke="#111" stroke-width="2.1">2%</text><path d="M132,470 h10" fill="none" stroke="#8a8a8a" stroke-width="2"/><text x="114" y="525" font-size="11.76" text-anchor="middle" fill="#111" font-weight="bold" transform="rotate(-90 114 525)" stroke="#111" stroke-width="2.1">1%</text><path d="M132,525 h10" fill="none" stroke="#8a8a8a" stroke-width="2"/><text x="62" y="335" font-size="14.56" text-anchor="middle" fill="#111" font-weight="bold" transform="rotate(-90 62 335)" stroke="#111" stroke-width="2.1">Incidenza illecito (2016)</text><text x="172" y="579" font-size="12.88" text-anchor="middle" fill="#111" font-weight="bold" stroke="#111" stroke-width="1.5">0%</text><path d="M172,543 v9" fill="none" stroke="#8a8a8a" stroke-width="2"/><text x="308" y="579" font-size="12.88" text-anchor="middle" fill="#111" font-weight="bold" stroke="#111" stroke-width="1.5">5%</text><path d="M308,543 v9" fill="none" stroke="#8a8a8a" stroke-width="2"/><text x="443" y="579" font-size="12.88" text-anchor="middle" fill="#111" font-weight="bold" stroke="#111" stroke-width="1.5">10%</text><path d="M443,543 v9" fill="none" stroke="#8a8a8a" stroke-width="2"/><text x="577" y="579" font-size="12.88" text-anchor="middle" fill="#111" font-weight="bold" stroke="#111" stroke-width="1.5">15%</text><path d="M577,543 v9" fill="none" stroke="#8a8a8a" stroke-width="2"/><text x="712" y="579" font-size="12.88" text-anchor="middle" fill="#111" font-weight="bold" stroke="#111" stroke-width="1.5">20%</text><path d="M712,543 v9" fill="none" stroke="#8a8a8a" stroke-width="2"/><text x="848" y="579" font-size="12.88" text-anchor="middle" fill="#111" font-weight="bold" stroke="#111" stroke-width="1.5">25%</text><path d="M848,543 v9" fill="none" stroke="#8a8a8a" stroke-width="2"/><text x="983" y="579" font-size="12.88" text-anchor="middle" fill="#111" font-weight="bold" stroke="#111" stroke-width="1.5">30%</text><path d="M983,543 v9" fill="none" stroke="#8a8a8a" stroke-width="2"/><path d="M142,597 H1004" fill="none" stroke="#333" stroke-width="3"/><path d="M1018,597 l-16,-7 v14 Z" fill="#111"/><text x="577" y="629" font-size="13.44" text-anchor="middle" fill="#111" font-weight="bold" stroke="#111" stroke-width="1.5">Tasso di disoccupazione</text><text x="386" y="640" font-size="10.08" text-anchor="middle" fill="#111" font-weight="bold" transform="rotate(-90 386 640)" stroke="#111" stroke-width="2.1">2016</text><path d="M142,473 L1018,252" fill="none" stroke="#fcd7a0" stroke-width="4.5"/><circle cx="297" cy="428" r="5.4" fill="#2044a6"/><circle cx="316" cy="428" r="5.4" fill="#2044a6"/><circle cx="337" cy="340" r="5.4" fill="#2044a6"/><circle cx="357" cy="402" r="5.4" fill="#2044a6"/><circle cx="362" cy="398" r="5.4" fill="#2044a6"/><circle cx="370" cy="406" r="5.4" fill="#2044a6"/><circle cx="377" cy="421" r="5.4" fill="#2044a6"/><circle cx="387" cy="347" r="5.4" fill="#2044a6"/><circle cx="390" cy="305" r="5.4" fill="#2044a6"/><circle cx="393" cy="378" r="5.4" fill="#2044a6"/><circle cx="403" cy="417" r="5.4" fill="#2044a6"/><circle cx="406" cy="447" r="5.4" fill="#2044a6"/><circle cx="408" cy="453" r="5.4" fill="#2044a6"/><circle cx="410" cy="398" r="5.4" fill="#2044a6"/><circle cx="415" cy="398" r="5.4" fill="#2044a6"/><circle cx="422" cy="418" r="5.4" fill="#2044a6"/><circle cx="422" cy="430" r="5.4" fill="#2044a6"/><circle cx="427" cy="510" r="5.4" fill="#2044a6"/><circle cx="352" cy="507" r="5.4" fill="#2044a6"/><circle cx="444" cy="390" r="5.4" fill="#2044a6"/><circle cx="457" cy="352" r="5.4" fill="#2044a6"/><circle cx="473" cy="398" r="5.4" fill="#2044a6"/><circle cx="492" cy="347" r="5.4" fill="#2044a6"/><circle cx="520" cy="444" r="5.4" fill="#2044a6"/><circle cx="608" cy="305" r="5.4" fill="#2044a6"/><circle cx="620" cy="282" r="5.4" fill="#2044a6"/><circle cx="617" cy="444" r="5.4" fill="#2044a6"/><circle cx="678" cy="363" r="5.4" fill="#2044a6"/><circle cx="684" cy="316" r="5.4" fill="#2044a6"/><circle cx="713" cy="398" r="5.4" fill="#2044a6"/><circle cx="767" cy="185" r="5.4" fill="#2044a6"/><circle cx="768" cy="258" r="5.4" fill="#2044a6"/><circle cx="768" cy="332" r="5.4" fill="#2044a6"/><circle cx="776" cy="323" r="5.4" fill="#2044a6"/><circle cx="815" cy="243" r="5.4" fill="#2044a6"/><circle cx="865" cy="398" r="5.4" fill="#2044a6"/><text x="767" y="173" font-size="13.44" text-anchor="middle" fill="#111" font-weight="bold" stroke="#111" stroke-width="1.5">Napoli</text><text x="815" y="232" font-size="13.44" text-anchor="middle" fill="#111" font-weight="bold" stroke="#111" stroke-width="1.5">Palermo</text><text x="770" y="279" font-size="13.44" text-anchor="middle" fill="#111" font-weight="bold" stroke="#111" stroke-width="1.5">Giugliano in Campania</text><text x="684" y="305" font-size="13.44" text-anchor="middle" fill="#111" font-weight="bold" stroke="#111" stroke-width="1.5">Bari</text><text x="815" y="330" font-size="13.44" text-anchor="middle" fill="#111" font-weight="bold" stroke="#111" stroke-width="1.5">Messina</text><text x="767" y="357" font-size="13.44" text-anchor="middle" fill="#111" font-weight="bold" stroke="#111" stroke-width="1.5">Reggio di Calabria</text><text x="865" y="388" font-size="13.44" text-anchor="middle" fill="#111" font-weight="bold" stroke="#111" stroke-width="1.5">Siracusa</text><text x="390" y="294" font-size="13.44" text-anchor="middle" fill="#111" font-weight="bold" stroke="#111" stroke-width="1.5">Trieste</text><text x="387" y="337" font-size="13.44" text-anchor="middle" fill="#111" font-weight="bold" stroke="#111" stroke-width="1.5">Milano</text><text x="457" y="341" font-size="13.44" text-anchor="middle" fill="#111" font-weight="bold" stroke="#111" stroke-width="1.5">Roma</text><text x="515" y="341" font-size="13.44" text-anchor="middle" fill="#111" font-weight="bold" stroke="#111" stroke-width="1.5">Torino</text><text x="355" y="496" font-size="13.44" text-anchor="middle" fill="#111" font-weight="bold" stroke="#111" stroke-width="1.5">Trento</text><text x="405" y="531" font-size="13.44" text-anchor="middle" fill="#111" font-weight="bold" stroke="#111" stroke-width="1.5">2016</text></g></g>
<rect x="100.5" y="470.5" width="211.90" height="140.60" fill="none" stroke="#959595" stroke-width="1"/>
</g>
<g class="artboard">
<clipPath id="ab9"><rect x="335.8" y="470.5" width="211.60" height="140.60"/></clipPath>
<g clip-path="url(#ab9)"><g transform="translate(325,460) scale(0.218182)"><path d="M92,133 H1018 M92,172 H1018" fill="none" stroke="#d8d8d8" stroke-width="2"/><path d="M237,105 V510 M432,105 V510 M628,105 V510 M822,105 V510" fill="none" stroke="#dcdcdc" stroke-width="2"/><text x="162" y="124" font-size="13.44" text-anchor="middle" fill="#111" font-weight="bold" stroke="#111" stroke-width="1.5">2013</text><text x="162" y="159" font-size="13.44" text-anchor="middle" fill="#111" font-weight="bold" stroke="#111" stroke-width="1.5">6,7%</text><text x="333" y="124" font-size="13.44" text-anchor="middle" fill="#111" font-weight="bold" stroke="#111" stroke-width="1.5">2014</text><text x="333" y="159" font-size="13.44" text-anchor="middle" fill="#111" font-weight="bold" stroke="#111" stroke-width="1.5">6,2%</text><text x="530" y="124" font-size="13.44" text-anchor="middle" fill="#111" font-weight="bold" stroke="#111" stroke-width="1.5">2015</text><text x="530" y="159" font-size="13.44" text-anchor="middle" fill="#111" font-weight="bold" stroke="#111" stroke-width="1.5">6,6%</text><text x="725" y="124" font-size="13.44" text-anchor="middle" fill="#111" font-weight="bold" stroke="#111" stroke-width="1.5">2016</text><text x="725" y="159" font-size="13.44" text-anchor="middle" fill="#111" font-weight="bold" stroke="#111" stroke-width="1.5">6,9%</text><text x="920" y="124" font-size="13.44" text-anchor="middle" fill="#111" font-weight="bold" stroke="#111" stroke-width="1.5">2017</text><text x="920" y="159" font-size="13.44" text-anchor="middle" fill="#111" font-weight="bold" stroke="#111" stroke-width="1.5">4,2%</text><text x="58" y="150" font-size="11.76" text-anchor="middle" fill="#111" font-weight="bold" transform="rotate(-90 58 150)" stroke="#111" stroke-width="2.1">Incidenza media</text><text x="72" y="150" font-size="11.76" text-anchor="middle" fill="#111" font-weight="bold" transform="rotate(-90 72 150)" stroke="#111" stroke-width="2.1">non domestico</text><rect x="188.0" y="230.0" width="49.0" height="280.0" fill="#e9e9e9"/><rect x="333.0" y="230.0" width="49.0" height="280.0" fill="#e9e9e9"/><rect x="432.0" y="230.0" width="49.0" height="280.0" fill="#e9e9e9"/><path d="M92,230 V510 M92,230 h-8 M92,261 h-8 M92,292 h-8 M92,323 h-8 M92,354 h-8 M92,385 h-8 M92,416 h-8 M92,447 h-8 M92,478 h-8 M92,510 h-8" fill="none" stroke="#8a8a8a" stroke-width="2.4"/><text x="60" y="234" font-size="11.76" text-anchor="middle" fill="#111" font-weight="bold" transform="rotate(0 60 234)" stroke="#111" stroke-width="2.1">9%</text><text x="60" y="265" font-size="11.76" text-anchor="middle" fill="#111" font-weight="bold" transform="rotate(0 60 265)" stroke="#111" stroke-width="2.1">8%</text><text x="60" y="296" font-size="11.76" text-anchor="middle" fill="#111" font-weight="bold" transform="rotate(0 60 296)" stroke="#111" stroke-width="2.1">7%</text><text x="60" y="327" font-size="11.76" text-anchor="middle" fill="#111" font-weight="bold" transform="rotate(0 60 327)" stroke="#111" stroke-width="2.1">6%</text><text x="60" y="358" font-size="11.76" text-anchor="middle" fill="#111" font-weight="bold" transform="rotate(0 60 358)" stroke="#111" stroke-width="2.1">5%</text><text x="60" y="389" font-size="11.76" text-anchor="middle" fill="#111" font-weight="bold" transform="rotate(0 60 389)" stroke="#111" stroke-width="2.1">4%</text><text x="60" y="420" font-size="11.76" text-anchor="middle" fill="#111" font-weight="bold" transform="rotate(0 60 420)" stroke="#111" stroke-width="2.1">3%</text><text x="60" y="451" font-size="11.76" text-anchor="middle" fill="#111" font-weight="bold" transform="rotate(0 60 451)" stroke="#111" stroke-width="2.1">2%</text><text x="60" y="482" font-size="11.76" text-anchor="middle" fill="#111" font-weight="bold" transform="rotate(0 60 482)" stroke="#111" stroke-width="2.1">1%</text><text x="60" y="514" font-size="11.76" text-anchor="middle" fill="#111" font-weight="bold" transform="rotate(0 60 514)" stroke="#111" stroke-width="2.1">0%</text><path d="M92,510 H1018" fill="none" stroke="#9a9a9a" stroke-width="2.4"/><path d="M437,510 V207 H491" fill="none" stroke="#f4ab88" stroke-width="2.6"/><text x="465" y="197" font-size="12.88" text-anchor="middle" fill="#111" stroke="#111" stroke-width="0.8">+0,20 €</text><path d="M681,510 V207 H735" fill="none" stroke="#f4ab88" stroke-width="2.6"/><text x="709" y="197" font-size="12.88" text-anchor="middle" fill="#111" stroke="#111" stroke-width="0.8">+0,20 €</text><path d="M876,510 V207 H930" fill="none" stroke="#f4ab88" stroke-width="2.6"/><text x="904" y="197" font-size="12.88" text-anchor="middle" fill="#111" stroke="#111" stroke-width="0.8">+0,20 €</text><path d="M113.0,328 L161.8,370 L210.7,412 L259.5,292 L308.3,308 L357.1,359 L406.0,290 L454.8,260 L503.6,330 L552.5,310 L601.3,270 L650.1,318 L699.0,258 L747.8,352 L796.6,342 L845.4,282 L894.3,392 L943.1,430 L991.9,385" fill="none" stroke="#fbb93a" stroke-width="3" stroke-linejoin="round"/><text x="119.0" y="320" font-size="14.0" text-anchor="middle" fill="#111" font-weight="bold" stroke="#111" stroke-width="1.5">5,9%</text><text x="167.8" y="360" font-size="14.0" text-anchor="middle" fill="#111" font-weight="bold" stroke="#111" stroke-width="1.5">4,4%</text><text x="216.7" y="430" font-size="14.0" text-anchor="middle" fill="#111" font-weight="bold" stroke="#111" stroke-width="1.5">3,2%</text><text x="265.5" y="282" font-size="14.0" text-anchor="middle" fill="#111" font-weight="bold" stroke="#111" stroke-width="1.5">6,9%</text><text x="314.3" y="298" font-size="14.0" text-anchor="middle" fill="#111" font-weight="bold" stroke="#111" stroke-width="1.5">6,4%</text><text x="363.1" y="377" font-size="14.0" text-anchor="middle" fill="#111" font-weight="bold" stroke="#111" stroke-width="1.5">4,6%</text><text x="412.0" y="282" font-size="14.0" text-anchor="middle" fill="#111" font-weight="bold" stroke="#111" stroke-width="1.5">6,9%</text><text x="460.8" y="250" font-size="14.0" text-anchor="middle" fill="#111" font-weight="bold" stroke="#111" stroke-width="1.5">8,0%</text><text x="509.6" y="348" font-size="14.0" text-anchor="middle" fill="#111" font-weight="bold" stroke="#111" stroke-width="1.5">5,7%</text><text x="558.5" y="300" font-size="14.0" text-anchor="middle" fill="#111" font-weight="bold" stroke="#111" stroke-width="1.5">6,3%</text><text x="607.3" y="262" font-size="14.0" text-anchor="middle" fill="#111" font-weight="bold" stroke="#111" stroke-width="1.5">7,7%</text><text x="656.1" y="336" font-size="14.0" text-anchor="middle" fill="#111" font-weight="bold" stroke="#111" stroke-width="1.5">6,0%</text><text x="705.0" y="248" font-size="14.0" text-anchor="middle" fill="#111" font-weight="bold" stroke="#111" stroke-width="1.5">8,2%</text><text x="753.8" y="372" font-size="14.0" text-anchor="middle" fill="#111" font-weight="bold" stroke="#111" stroke-width="1.5">5,1%</text><text x="802.6" y="356" font-size="14.0" text-anchor="middle" fill="#111" font-weight="bold" stroke="#111" stroke-width="1.5">5,5%</text><text x="851.4" y="274" font-size="14.0" text-anchor="middle" fill="#111" font-weight="bold" stroke="#111" stroke-width="1.5">7,3%</text><text x="900.3" y="418" font-size="14.0" text-anchor="middle" fill="#111" font-weight="bold" stroke="#111" stroke-width="1.5">3,7%</text><text x="949.1" y="450" font-size="14.0" text-anchor="middle" fill="#111" font-weight="bold" stroke="#111" stroke-width="1.5">2,6%</text><text x="997.9" y="369" font-size="14.0" text-anchor="middle" fill="#111" font-weight="bold" stroke="#111" stroke-width="1.5">4,0%</text><text x="113.0" y="536" font-size="12.32" text-anchor="middle" fill="#111" stroke="#111" stroke-width="0.8">Q2</text><text x="161.8" y="536" font-size="12.32" text-anchor="middle" fill="#111" stroke="#111" stroke-width="0.8">Q3</text><text x="210.7" y="536" font-size="12.32" text-anchor="middle" fill="#111" stroke="#111" stroke-width="0.8">Q4</text><text x="259.5" y="536" font-size="12.32" text-anchor="middle" fill="#111" stroke="#111" stroke-width="0.8">Q1</text><text x="308.3" y="536" font-size="12.32" text-anchor="middle" fill="#111" stroke="#111" stroke-width="0.8">Q2</text><text x="357.1" y="536" font-size="12.32" text-anchor="middle" fill="#111" stroke="#111" stroke-width="0.8">Q3</text><text x="406.0" y="536" font-size="12.32" text-anchor="middle" fill="#111" stroke="#111" stroke-width="0.8">Q4</text><text x="454.8" y="536" font-size="12.32" text-anchor="middle" fill="#111" stroke="#111" stroke-width="0.8">Q1</text><text x="503.6" y="536" font-size="12.32" text-anchor="middle" fill="#111" stroke="#111" stroke-width="0.8">Q2</text><text x="552.5" y="536" font-size="12.32" text-anchor="middle" fill="#111" stroke="#111" stroke-width="0.8">Q3</text><text x="601.3" y="536" font-size="12.32" text-anchor="middle" fill="#111" stroke="#111" stroke-width="0.8">Q4</text><text x="650.1" y="536" font-size="12.32" text-anchor="middle" fill="#111" stroke="#111" stroke-width="0.8">Q1</text><text x="699.0" y="536" font-size="12.32" text-anchor="middle" fill="#111" stroke="#111" stroke-width="0.8">Q2</text><text x="747.8" y="536" font-size="12.32" text-anchor="middle" fill="#111" stroke="#111" stroke-width="0.8">Q3</text><text x="796.6" y="536" font-size="12.32" text-anchor="middle" fill="#111" stroke="#111" stroke-width="0.8">Q4</text><text x="845.4" y="536" font-size="12.32" text-anchor="middle" fill="#111" stroke="#111" stroke-width="0.8">Q1</text><text x="894.3" y="536" font-size="12.32" text-anchor="middle" fill="#111" stroke="#111" stroke-width="0.8">Q2</text><text x="943.1" y="536" font-size="12.32" text-anchor="middle" fill="#111" stroke="#111" stroke-width="0.8">Q3</text><text x="991.9" y="536" font-size="12.32" text-anchor="middle" fill="#111" stroke="#111" stroke-width="0.8">Q4</text><text x="203" y="485" font-size="12.88" text-anchor="start" fill="#111" font-weight="bold" stroke="#111" stroke-width="1.5">Aumento</text><text x="203" y="499" font-size="12.88" text-anchor="start" fill="#111" font-weight="bold" stroke="#111" stroke-width="1.5">IVA</text><text x="346" y="485" font-size="12.88" text-anchor="start" fill="#111" font-weight="bold" stroke="#111" stroke-width="1.5">Aumento</text><text x="346" y="499" font-size="12.88" text-anchor="start" fill="#111" font-weight="bold" stroke="#111" stroke-width="1.5">accisa</text><text x="445" y="485" font-size="12.88" text-anchor="start" fill="#111" font-weight="bold" stroke="#111" stroke-width="1.5">Nuova struttura</text><text x="445" y="499" font-size="12.88" text-anchor="start" fill="#111" font-weight="bold" stroke="#111" stroke-width="1.5">accisa in Italia</text><path d="M235,580 H258" fill="none" stroke="#fab123" stroke-width="3.4"/><text x="265" y="584" font-size="12.88" text-anchor="start" fill="#111" stroke="#111" stroke-width="0.8">Incidenza non domestico</text><path d="M457,580 H480" fill="none" stroke="#f2a27a" stroke-width="3"/><text x="487" y="584" font-size="12.88" text-anchor="start" fill="#111" stroke="#111" stroke-width="0.8">Aumento dei prezzi di vendita</text><rect x="700.0" y="572.0" width="18.0" height="16.0" fill="#e0e0e0"/><text x="725" y="584" font-size="12.88" text-anchor="start" fill="#111" stroke="#111" stroke-width="0.8">Intervento fiscale</text></g></g>
<rect x="335.8" y="470.5" width="211.60" height="140.60" fill="none" stroke="#959595" stroke-width="1"/>
</g>
<g class="artboard">
<clipPath id="ab10"><rect x="571.4" y="470.5" width="211.20" height="140.60"/></clipPath>
<g clip-path="url(#ab10)"><g transform="translate(560,460) scale(0.218182)"><path d="M130,110 V530 M130,110 h-12 M130,180 h-12 M130,250 h-12 M130,320 h-12 M130,390 h-12 M130,460 h-12 M130,530 h-12" fill="none" stroke="#666" stroke-width="3"/><text x="105" y="110" font-size="12.32" text-anchor="middle" fill="#111" font-weight="bold" transform="rotate(-90 105 110)" stroke="#111" stroke-width="2.1">12%</text><text x="105" y="180" font-size="12.32" text-anchor="middle" fill="#111" font-weight="bold" transform="rotate(-90 105 180)" stroke="#111" stroke-width="2.1">10%</text><text x="105" y="250" font-size="12.32" text-anchor="middle" fill="#111" font-weight="bold" transform="rotate(-90 105 250)" stroke="#111" stroke-width="2.1">8%</text><text x="105" y="320" font-size="12.32" text-anchor="middle" fill="#111" font-weight="bold" transform="rotate(-90 105 320)" stroke="#111" stroke-width="2.1">6%</text><text x="105" y="390" font-size="12.32" text-anchor="middle" fill="#111" font-weight="bold" transform="rotate(-90 105 390)" stroke="#111" stroke-width="2.1">4%</text><text x="105" y="460" font-size="12.32" text-anchor="middle" fill="#111" font-weight="bold" transform="rotate(-90 105 460)" stroke="#111" stroke-width="2.1">2%</text><text x="105" y="530" font-size="12.32" text-anchor="middle" fill="#111" font-weight="bold" transform="rotate(-90 105 530)" stroke="#111" stroke-width="2.1">0%</text><text x="62" y="320" font-size="12.88" text-anchor="middle" fill="#111" font-weight="bold" transform="rotate(-90 62 320)" stroke="#111" stroke-width="2.1">Incidenza non domestico</text><rect x="147.4" y="195.0" width="16.2" height="336.0" fill="#19469a"/><text x="162.0" y="550" font-size="12.66" text-anchor="end" fill="#111" font-weight="bold" transform="rotate(-90 162.0 550)" stroke="#111" stroke-width="1.7999999999999998">Napoli</text><rect x="168.8" y="332.0" width="16.2" height="199.0" fill="#fab123"/><text x="183.3" y="550" font-size="12.66" text-anchor="end" fill="#111" font-weight="bold" transform="rotate(-90 183.3 550)" stroke="#111" stroke-width="1.7999999999999998">Trieste</text><rect x="190.1" y="341.0" width="16.2" height="190.0" fill="#19469a"/><text x="204.7" y="550" font-size="12.66" text-anchor="end" fill="#111" font-weight="bold" transform="rotate(-90 204.7 550)" stroke="#111" stroke-width="1.7999999999999998">Palermo</text><rect x="211.5" y="378.0" width="16.2" height="153.0" fill="#19469a"/><text x="226.1" y="550" font-size="12.66" text-anchor="end" fill="#111" font-weight="bold" transform="rotate(-90 226.1 550)" stroke="#111" stroke-width="1.7999999999999998">Messina</text><rect x="232.8" y="407.0" width="16.2" height="124.0" fill="#19469a"/><text x="247.4" y="550" font-size="12.66" text-anchor="end" fill="#111" font-weight="bold" transform="rotate(-90 247.4 550)" stroke="#111" stroke-width="1.7999999999999998">Siracusa</text><rect x="254.2" y="443.0" width="16.2" height="88.0" fill="#19469a"/><text x="268.8" y="550" font-size="12.66" text-anchor="end" fill="#111" font-weight="bold" transform="rotate(-90 268.8 550)" stroke="#111" stroke-width="1.7999999999999998">Catania</text><rect x="275.5" y="450.0" width="16.2" height="81.0" fill="#19469a"/><text x="290.1" y="550" font-size="12.66" text-anchor="end" fill="#111" font-weight="bold" transform="rotate(-90 290.1 550)" stroke="#111" stroke-width="1.7999999999999998">Giugliano in Campania</text><rect x="296.9" y="467.0" width="16.2" height="64.0" fill="#19469a"/><text x="311.5" y="550" font-size="12.66" text-anchor="end" fill="#111" font-weight="bold" transform="rotate(-90 311.5 550)" stroke="#111" stroke-width="1.7999999999999998">Reggio di Calabria</text><rect x="318.2" y="467.0" width="16.2" height="64.0" fill="#fab123"/><text x="332.8" y="550" font-size="12.66" text-anchor="end" fill="#111" font-weight="bold" transform="rotate(-90 332.8 550)" stroke="#111" stroke-width="1.7999999999999998">Milano</text><rect x="339.5" y="470.0" width="16.2" height="61.0" fill="#fab123"/><text x="354.1" y="550" font-size="12.66" text-anchor="end" fill="#111" font-weight="bold" transform="rotate(-90 354.1 550)" stroke="#111" stroke-width="1.7999999999999998">Bergamo</text><rect x="360.9" y="484.0" width="16.2" height="47.0" fill="#fab123"/><text x="375.5" y="550" font-size="12.66" text-anchor="end" fill="#111" font-weight="bold" transform="rotate(-90 375.5 550)" stroke="#111" stroke-width="1.7999999999999998">Torino</text><rect x="382.2" y="492.0" width="16.2" height="39.0" fill="#fab123"/><text x="396.9" y="550" font-size="12.66" text-anchor="end" fill="#111" font-weight="bold" transform="rotate(-90 396.9 550)" stroke="#111" stroke-width="1.7999999999999998">Bolzano</text><rect x="403.6" y="495.0" width="16.2" height="36.0" fill="#fab123"/><text x="418.2" y="550" font-size="12.66" text-anchor="end" fill="#111" font-weight="bold" transform="rotate(-90 418.2 550)" stroke="#111" stroke-width="1.7999999999999998">Genova</text><rect x="424.9" y="503.0" width="16.2" height="28.0" fill="#fab123"/><text x="439.6" y="550" font-size="12.66" text-anchor="end" fill="#111" font-weight="bold" transform="rotate(-90 439.6 550)" stroke="#111" stroke-width="1.7999999999999998">Verona</text><rect x="446.3" y="504.0" width="16.2" height="27.0" fill="#ec7626"/><text x="460.9" y="550" font-size="12.66" text-anchor="end" fill="#111" font-weight="bold" transform="rotate(-90 460.9 550)" stroke="#111" stroke-width="1.7999999999999998">Firenze</text><rect x="467.6" y="505.0" width="16.2" height="26.0" fill="#ec7626"/><text x="482.2" y="550" font-size="12.66" text-anchor="end" fill="#111" font-weight="bold" transform="rotate(-90 482.2 550)" stroke="#111" stroke-width="1.7999999999999998">Roma</text><rect x="489.0" y="506.0" width="16.2" height="25.0" fill="#fab123"/><text x="503.6" y="550" font-size="12.66" text-anchor="end" fill="#111" font-weight="bold" transform="rotate(-90 503.6 550)" stroke="#111" stroke-width="1.7999999999999998">Padova</text><rect x="510.4" y="509.0" width="16.2" height="22.0" fill="#fab123"/><text x="525.0" y="550" font-size="12.66" text-anchor="end" fill="#111" font-weight="bold" transform="rotate(-90 525.0 550)" stroke="#111" stroke-width="1.7999999999999998">Brescia</text><rect x="531.7" y="509.0" width="16.2" height="22.0" fill="#fab123"/><text x="546.3" y="550" font-size="12.66" text-anchor="end" fill="#111" font-weight="bold" transform="rotate(-90 546.3 550)" stroke="#111" stroke-width="1.7999999999999998">Venezia</text><rect x="553.1" y="509.0" width="16.2" height="22.0" fill="#ec7626"/><text x="567.7" y="550" font-size="12.66" text-anchor="end" fill="#111" font-weight="bold" transform="rotate(-90 567.7 550)" stroke="#111" stroke-width="1.7999999999999998">Perugia</text><rect x="574.4" y="510.0" width="16.2" height="21.0" fill="#fab123"/><text x="589.0" y="550" font-size="12.66" text-anchor="end" fill="#111" font-weight="bold" transform="rotate(-90 589.0 550)" stroke="#111" stroke-width="1.7999999999999998">Trento</text><rect x="595.8" y="510.0" width="16.2" height="21.0" fill="#ec7626"/><text x="610.4" y="550" font-size="12.66" text-anchor="end" fill="#111" font-weight="bold" transform="rotate(-90 610.4 550)" stroke="#111" stroke-width="1.7999999999999998">Pescara</text><rect x="617.1" y="511.0" width="16.2" height="20.0" fill="#fab123"/><text x="631.7" y="550" font-size="12.66" text-anchor="end" fill="#111" font-weight="bold" transform="rotate(-90 631.7 550)" stroke="#111" stroke-width="1.7999999999999998">Modena</text><rect x="638.4" y="512.0" width="16.2" height="19.0" fill="#19469a"/><text x="653.0" y="550" font-size="12.66" text-anchor="end" fill="#111" font-weight="bold" transform="rotate(-90 653.0 550)" stroke="#111" stroke-width="1.7999999999999998">Bari</text><rect x="659.8" y="512.0" width="16.2" height="19.0" fill="#ec7626"/><text x="674.4" y="550" font-size="12.66" text-anchor="end" fill="#111" font-weight="bold" transform="rotate(-90 674.4 550)" stroke="#111" stroke-width="1.7999999999999998">Livorno</text><rect x="681.1" y="514.0" width="16.2" height="17.0" fill="#ec7626"/><text x="695.8" y="550" font-size="12.66" text-anchor="end" fill="#111" font-weight="bold" transform="rotate(-90 695.8 550)" stroke="#111" stroke-width="1.7999999999999998">Ancona</text><rect x="702.5" y="515.0" width="16.2" height="16.0" fill="#fab123"/><text x="717.1" y="550" font-size="12.66" text-anchor="end" fill="#111" font-weight="bold" transform="rotate(-90 717.1 550)" stroke="#111" stroke-width="1.7999999999999998">Parma</text><rect x="723.9" y="515.0" width="16.2" height="16.0" fill="#ec7626"/><text x="738.5" y="550" font-size="12.66" text-anchor="end" fill="#111" font-weight="bold" transform="rotate(-90 738.5 550)" stroke="#111" stroke-width="1.7999999999999998">Prato</text><rect x="745.2" y="516.0" width="16.2" height="15.0" fill="#fab123"/><text x="759.8" y="550" font-size="12.66" text-anchor="end" fill="#111" font-weight="bold" transform="rotate(-90 759.8 550)" stroke="#111" stroke-width="1.7999999999999998">Piacenza</text><rect x="766.6" y="516.0" width="16.2" height="15.0" fill="#ec7626"/><text x="781.2" y="550" font-size="12.66" text-anchor="end" fill="#111" font-weight="bold" transform="rotate(-90 781.2 550)" stroke="#111" stroke-width="1.7999999999999998">Latina</text><rect x="787.9" y="517.0" width="16.2" height="14.0" fill="#19469a"/><text x="802.5" y="550" font-size="12.66" text-anchor="end" fill="#111" font-weight="bold" transform="rotate(-90 802.5 550)" stroke="#111" stroke-width="1.7999999999999998">Taranto</text><rect x="809.2" y="518.0" width="16.2" height="13.0" fill="#fab123"/><text x="823.9" y="550" font-size="12.66" text-anchor="end" fill="#111" font-weight="bold" transform="rotate(-90 823.9 550)" stroke="#111" stroke-width="1.7999999999999998">Bologna</text><rect x="830.6" y="519.0" width="16.2" height="12.0" fill="#fab123"/><text x="845.2" y="550" font-size="12.66" text-anchor="end" fill="#111" font-weight="bold" transform="rotate(-90 845.2 550)" stroke="#111" stroke-width="1.7999999999999998">Ravenna</text><rect x="852.0" y="519.0" width="16.2" height="12.0" fill="#ec7626"/><text x="866.6" y="550" font-size="12.66" text-anchor="end" fill="#111" font-weight="bold" transform="rotate(-90 866.6 550)" stroke="#111" stroke-width="1.7999999999999998">Terni</text><rect x="873.3" y="520.0" width="16.2" height="11.0" fill="#fab123"/><text x="887.9" y="550" font-size="12.66" text-anchor="end" fill="#111" font-weight="bold" transform="rotate(-90 887.9 550)" stroke="#111" stroke-width="1.7999999999999998">Vicenza</text><rect x="894.6" y="521.0" width="16.2" height="10.0" fill="#fab123"/><text x="909.2" y="550" font-size="12.66" text-anchor="end" fill="#111" font-weight="bold" transform="rotate(-90 909.2 550)" stroke="#111" stroke-width="1.7999999999999998">Reggio nell’Emilia</text><rect x="916.0" y="522.0" width="16.2" height="9.0" fill="#fab123"/><text x="930.6" y="550" font-size="12.66" text-anchor="end" fill="#111" font-weight="bold" transform="rotate(-90 930.6 550)" stroke="#111" stroke-width="1.7999999999999998">Monza e della Brianza</text><rect x="937.4" y="523.0" width="16.2" height="8.0" fill="#fab123"/><text x="952.0" y="550" font-size="12.66" text-anchor="end" fill="#111" font-weight="bold" transform="rotate(-90 952.0 550)" stroke="#111" stroke-width="1.7999999999999998">Rimini</text><rect x="958.7" y="525.0" width="16.2" height="6.0" fill="#fab123"/><text x="973.3" y="550" font-size="12.66" text-anchor="end" fill="#111" font-weight="bold" transform="rotate(-90 973.3 550)" stroke="#111" stroke-width="1.7999999999999998">Ferrara</text><rect x="980.1" y="524.0" width="16.2" height="7.0" fill="#8fa0d8"/><text x="994.7" y="550" font-size="12.66" text-anchor="end" fill="#111" font-weight="bold" transform="rotate(-90 994.7 550)" stroke="#111" stroke-width="1.7999999999999998">Salerno</text><rect x="1001.4" y="524.0" width="16.2" height="7.0" fill="#8fa0d8"/><text x="1016.0" y="550" font-size="12.66" text-anchor="end" fill="#111" font-weight="bold" transform="rotate(-90 1016.0 550)" stroke="#111" stroke-width="1.7999999999999998">Foggia</text><rect x="757.0" y="110.0" width="18.0" height="16.0" fill="#fab123"/><text x="781" y="123" font-size="12.88" text-anchor="start" fill="#111" font-weight="bold" stroke="#111" stroke-width="1.5">Nord</text><rect x="845.0" y="110.0" width="18.0" height="16.0" fill="#ec7626"/><text x="869" y="123" font-size="12.88" text-anchor="start" fill="#111" font-weight="bold" stroke="#111" stroke-width="1.5">Centro</text><rect x="930.0" y="110.0" width="18.0" height="16.0" fill="#19469a"/><text x="954" y="123" font-size="12.88" text-anchor="start" fill="#111" font-weight="bold" stroke="#111" stroke-width="1.5">Sud</text></g></g>
<rect x="571.4" y="470.5" width="211.20" height="140.60" fill="none" stroke="#959595" stroke-width="1"/>
</g>
<g class="artboard">
<clipPath id="ab11"><rect x="806.5" y="470.5" width="211.50" height="140.60"/></clipPath>
<g clip-path="url(#ab11)"><g transform="translate(795,460) scale(0.218182)"><path d="M130,110 V530 M130,110 h-12 M130,215 h-12 M130,320 h-12 M130,424 h-12 M130,530 h-12" fill="none" stroke="#666" stroke-width="3"/><text x="105" y="110" font-size="12.32" text-anchor="middle" fill="#111" font-weight="bold" transform="rotate(-90 105 110)" stroke="#111" stroke-width="2.1">8%</text><text x="105" y="215" font-size="12.32" text-anchor="middle" fill="#111" font-weight="bold" transform="rotate(-90 105 215)" stroke="#111" stroke-width="2.1">6%</text><text x="105" y="320" font-size="12.32" text-anchor="middle" fill="#111" font-weight="bold" transform="rotate(-90 105 320)" stroke="#111" stroke-width="2.1">4%</text><text x="105" y="424" font-size="12.32" text-anchor="middle" fill="#111" font-weight="bold" transform="rotate(-90 105 424)" stroke="#111" stroke-width="2.1">2%</text><text x="105" y="530" font-size="12.32" text-anchor="middle" fill="#111" font-weight="bold" transform="rotate(-90 105 530)" stroke="#111" stroke-width="2.1">0%</text><text x="62" y="320" font-size="12.88" text-anchor="middle" fill="#111" font-weight="bold" transform="rotate(-90 62 320)" stroke="#111" stroke-width="2.1">Incidenza illicit whites</text><rect x="147.4" y="162.0" width="16.2" height="369.0" fill="#19469a"/><text x="162.0" y="550" font-size="12.66" text-anchor="end" fill="#111" font-weight="bold" transform="rotate(-90 162.0 550)" stroke="#111" stroke-width="1.7999999999999998">Palermo</text><rect x="168.8" y="217.0" width="16.2" height="314.0" fill="#19469a"/><text x="183.3" y="550" font-size="12.66" text-anchor="end" fill="#111" font-weight="bold" transform="rotate(-90 183.3 550)" stroke="#111" stroke-width="1.7999999999999998">Napoli</text><rect x="190.1" y="238.0" width="16.2" height="293.0" fill="#19469a"/><text x="204.7" y="550" font-size="12.66" text-anchor="end" fill="#111" font-weight="bold" transform="rotate(-90 204.7 550)" stroke="#111" stroke-width="1.7999999999999998">Catania</text><rect x="211.5" y="245.0" width="16.2" height="286.0" fill="#19469a"/><text x="226.1" y="550" font-size="12.66" text-anchor="end" fill="#111" font-weight="bold" transform="rotate(-90 226.1 550)" stroke="#111" stroke-width="1.7999999999999998">Messina</text><rect x="232.8" y="267.0" width="16.2" height="264.0" fill="#fab123"/><text x="247.4" y="550" font-size="12.66" text-anchor="end" fill="#111" font-weight="bold" transform="rotate(-90 247.4 550)" stroke="#111" stroke-width="1.7999999999999998">Bolzano</text><rect x="254.2" y="277.0" width="16.2" height="254.0" fill="#19469a"/><text x="268.8" y="550" font-size="12.66" text-anchor="end" fill="#111" font-weight="bold" transform="rotate(-90 268.8 550)" stroke="#111" stroke-width="1.7999999999999998">Giugliano in Campania</text><rect x="275.5" y="332.0" width="16.2" height="199.0" fill="#19469a"/><text x="290.1" y="550" font-size="12.66" text-anchor="end" fill="#111" font-weight="bold" transform="rotate(-90 290.1 550)" stroke="#111" stroke-width="1.7999999999999998">Siracusa</text><rect x="296.9" y="333.0" width="16.2" height="198.0" fill="#ec7626"/><text x="311.5" y="550" font-size="12.66" text-anchor="end" fill="#111" font-weight="bold" transform="rotate(-90 311.5 550)" stroke="#111" stroke-width="1.7999999999999998">Latina</text><rect x="318.2" y="341.0" width="16.2" height="190.0" fill="#19469a"/><text x="332.8" y="550" font-size="12.66" text-anchor="end" fill="#111" font-weight="bold" transform="rotate(-90 332.8 550)" stroke="#111" stroke-width="1.7999999999999998">Reggio di Calabria</text><rect x="339.5" y="355.0" width="16.2" height="176.0" fill="#fab123"/><text x="354.1" y="550" font-size="12.66" text-anchor="end" fill="#111" font-weight="bold" transform="rotate(-90 354.1 550)" stroke="#111" stroke-width="1.7999999999999998">Bergamo</text><rect x="360.9" y="378.0" width="16.2" height="153.0" fill="#ec7626"/><text x="375.5" y="550" font-size="12.66" text-anchor="end" fill="#111" font-weight="bold" transform="rotate(-90 375.5 550)" stroke="#111" stroke-width="1.7999999999999998">Roma</text><rect x="382.2" y="398.0" width="16.2" height="133.0" fill="#ec7626"/><text x="396.9" y="550" font-size="12.66" text-anchor="end" fill="#111" font-weight="bold" transform="rotate(-90 396.9 550)" stroke="#111" stroke-width="1.7999999999999998">Perugia</text><rect x="403.6" y="406.0" width="16.2" height="125.0" fill="#fab123"/><text x="418.2" y="550" font-size="12.66" text-anchor="end" fill="#111" font-weight="bold" transform="rotate(-90 418.2 550)" stroke="#111" stroke-width="1.7999999999999998">Milano</text><rect x="424.9" y="424.0" width="16.2" height="107.0" fill="#fab123"/><text x="439.6" y="550" font-size="12.66" text-anchor="end" fill="#111" font-weight="bold" transform="rotate(-90 439.6 550)" stroke="#111" stroke-width="1.7999999999999998">Torino</text><rect x="446.3" y="428.0" width="16.2" height="103.0" fill="#fab123"/><text x="460.9" y="550" font-size="12.66" text-anchor="end" fill="#111" font-weight="bold" transform="rotate(-90 460.9 550)" stroke="#111" stroke-width="1.7999999999999998">Genova</text><rect x="467.6" y="434.0" width="16.2" height="97.0" fill="#fab123"/><text x="482.2" y="550" font-size="12.66" text-anchor="end" fill="#111" font-weight="bold" transform="rotate(-90 482.2 550)" stroke="#111" stroke-width="1.7999999999999998">Forlì-Cesena</text><rect x="489.0" y="441.0" width="16.2" height="90.0" fill="#ec7626"/><text x="503.6" y="550" font-size="12.66" text-anchor="end" fill="#111" font-weight="bold" transform="rotate(-90 503.6 550)" stroke="#111" stroke-width="1.7999999999999998">Firenze</text><rect x="510.4" y="454.0" width="16.2" height="77.0" fill="#fab123"/><text x="525.0" y="550" font-size="12.66" text-anchor="end" fill="#111" font-weight="bold" transform="rotate(-90 525.0 550)" stroke="#111" stroke-width="1.7999999999999998">Verona</text><rect x="531.7" y="482.0" width="16.2" height="49.0" fill="#fab123"/><text x="546.3" y="550" font-size="12.66" text-anchor="end" fill="#111" font-weight="bold" transform="rotate(-90 546.3 550)" stroke="#111" stroke-width="1.7999999999999998">Padova</text><rect x="553.1" y="485.0" width="16.2" height="46.0" fill="#19469a"/><text x="567.7" y="550" font-size="12.66" text-anchor="end" fill="#111" font-weight="bold" transform="rotate(-90 567.7 550)" stroke="#111" stroke-width="1.7999999999999998">Bari</text><rect x="574.4" y="494.0" width="16.2" height="37.0" fill="#fab123"/><text x="589.0" y="550" font-size="12.66" text-anchor="end" fill="#111" font-weight="bold" transform="rotate(-90 589.0 550)" stroke="#111" stroke-width="1.7999999999999998">Brescia</text><rect x="595.8" y="500.0" width="16.2" height="31.0" fill="#fab123"/><text x="610.4" y="550" font-size="12.66" text-anchor="end" fill="#111" font-weight="bold" transform="rotate(-90 610.4 550)" stroke="#111" stroke-width="1.7999999999999998">Venezia</text><rect x="617.1" y="522.0" width="16.2" height="9.0" fill="#fab123"/><text x="631.7" y="550" font-size="12.66" text-anchor="end" fill="#111" font-weight="bold" transform="rotate(-90 631.7 550)" stroke="#111" stroke-width="1.7999999999999998">Trento</text><rect x="638.0" y="528.5" width="17.0" height="2.5" fill="#fde3ae"/><text x="653.0" y="550" font-size="12.66" text-anchor="end" fill="#111" font-weight="bold" transform="rotate(-90 653.0 550)" stroke="#111" stroke-width="1.7999999999999998">Pescara</text><rect x="659.4" y="528.5" width="17.0" height="2.5" fill="#fde3ae"/><text x="674.4" y="550" font-size="12.66" text-anchor="end" fill="#111" font-weight="bold" transform="rotate(-90 674.4 550)" stroke="#111" stroke-width="1.7999999999999998">Modena</text><rect x="680.8" y="528.5" width="17.0" height="2.5" fill="#c0c8e8"/><text x="695.8" y="550" font-size="12.66" text-anchor="end" fill="#111" font-weight="bold" transform="rotate(-90 695.8 550)" stroke="#111" stroke-width="1.7999999999999998">Livorno</text><rect x="702.1" y="528.5" width="17.0" height="2.5" fill="#fde3ae"/><text x="717.1" y="550" font-size="12.66" text-anchor="end" fill="#111" font-weight="bold" transform="rotate(-90 717.1 550)" stroke="#111" stroke-width="1.7999999999999998">Ancona</text><rect x="723.5" y="528.5" width="17.0" height="2.5" fill="#fde3ae"/><text x="738.5" y="550" font-size="12.66" text-anchor="end" fill="#111" font-weight="bold" transform="rotate(-90 738.5 550)" stroke="#111" stroke-width="1.7999999999999998">Parma</text><rect x="744.8" y="528.5" width="17.0" height="2.5" fill="#fde3ae"/><text x="759.8" y="550" font-size="12.66" text-anchor="end" fill="#111" font-weight="bold" transform="rotate(-90 759.8 550)" stroke="#111" stroke-width="1.7999999999999998">Monza e della Brianza</text><rect x="766.2" y="528.5" width="17.0" height="2.5" fill="#fde3ae"/><text x="781.2" y="550" font-size="12.66" text-anchor="end" fill="#111" font-weight="bold" transform="rotate(-90 781.2 550)" stroke="#111" stroke-width="1.7999999999999998">Prato</text><rect x="787.5" y="528.5" width="17.0" height="2.5" fill="#c0c8e8"/><text x="802.5" y="550" font-size="12.66" text-anchor="end" fill="#111" font-weight="bold" transform="rotate(-90 802.5 550)" stroke="#111" stroke-width="1.7999999999999998">Trieste</text><rect x="808.9" y="528.5" width="17.0" height="2.5" fill="#fde3ae"/><text x="823.9" y="550" font-size="12.66" text-anchor="end" fill="#111" font-weight="bold" transform="rotate(-90 823.9 550)" stroke="#111" stroke-width="1.7999999999999998">Taranto</text><rect x="830.2" y="528.5" width="17.0" height="2.5" fill="#fde3ae"/><text x="845.2" y="550" font-size="12.66" text-anchor="end" fill="#111" font-weight="bold" transform="rotate(-90 845.2 550)" stroke="#111" stroke-width="1.7999999999999998">Bologna</text><rect x="851.6" y="528.5" width="17.0" height="2.5" fill="#fde3ae"/><text x="866.6" y="550" font-size="12.66" text-anchor="end" fill="#111" font-weight="bold" transform="rotate(-90 866.6 550)" stroke="#111" stroke-width="1.7999999999999998">Reggio nell’Emilia</text><rect x="872.9" y="528.5" width="17.0" height="2.5" fill="#fde3ae"/><text x="887.9" y="550" font-size="12.66" text-anchor="end" fill="#111" font-weight="bold" transform="rotate(-90 887.9 550)" stroke="#111" stroke-width="1.7999999999999998">Ravenna</text><rect x="894.2" y="528.5" width="17.0" height="2.5" fill="#c0c8e8"/><text x="909.2" y="550" font-size="12.66" text-anchor="end" fill="#111" font-weight="bold" transform="rotate(-90 909.2 550)" stroke="#111" stroke-width="1.7999999999999998">Terni</text><rect x="915.6" y="528.5" width="17.0" height="2.5" fill="#fde3ae"/><text x="930.6" y="550" font-size="12.66" text-anchor="end" fill="#111" font-weight="bold" transform="rotate(-90 930.6 550)" stroke="#111" stroke-width="1.7999999999999998">Vicenza</text><rect x="937.0" y="528.5" width="17.0" height="2.5" fill="#fde3ae"/><text x="952.0" y="550" font-size="12.66" text-anchor="end" fill="#111" font-weight="bold" transform="rotate(-90 952.0 550)" stroke="#111" stroke-width="1.7999999999999998">Rimini</text><rect x="958.3" y="528.5" width="17.0" height="2.5" fill="#fde3ae"/><text x="973.3" y="550" font-size="12.66" text-anchor="end" fill="#111" font-weight="bold" transform="rotate(-90 973.3 550)" stroke="#111" stroke-width="1.7999999999999998">Ferrara</text><rect x="979.7" y="528.5" width="17.0" height="2.5" fill="#fde3ae"/><text x="994.7" y="550" font-size="12.66" text-anchor="end" fill="#111" font-weight="bold" transform="rotate(-90 994.7 550)" stroke="#111" stroke-width="1.7999999999999998">Salerno</text><rect x="1001.0" y="528.5" width="17.0" height="2.5" fill="#c0c8e8"/><text x="1016.0" y="550" font-size="12.66" text-anchor="end" fill="#111" font-weight="bold" transform="rotate(-90 1016.0 550)" stroke="#111" stroke-width="1.7999999999999998">Foggia</text><rect x="757.0" y="110.0" width="18.0" height="16.0" fill="#fab123"/><text x="781" y="123" font-size="12.88" text-anchor="start" fill="#111" font-weight="bold" stroke="#111" stroke-width="1.5">Nord</text><rect x="845.0" y="110.0" width="18.0" height="16.0" fill="#ec7626"/><text x="869" y="123" font-size="12.88" text-anchor="start" fill="#111" font-weight="bold" stroke="#111" stroke-width="1.5">Centro</text><rect x="930.0" y="110.0" width="18.0" height="16.0" fill="#19469a"/><text x="954" y="123" font-size="12.88" text-anchor="start" fill="#111" font-weight="bold" stroke="#111" stroke-width="1.5">Sud</text></g></g>
<rect x="806.5" y="470.5" width="211.50" height="140.60" fill="none" stroke="#959595" stroke-width="1"/>
</g>
<g class="artboard">
<clipPath id="ab12"><rect x="100.5" y="634.5" width="211.90" height="141.90"/></clipPath>
<g clip-path="url(#ab12)"><g transform="translate(90,625) scale(0.218182)"><path d="M197,247 L197.0,126.0 A121,121 0 0 1 289.1,168.5 Z" fill="#1ea0e2" stroke="#fff" stroke-width="2.4" stroke-linejoin="round"/><path d="M197,247 L289.1,168.5 A121,121 0 0 1 254.6,353.4 Z" fill="#ec7626" stroke="#fff" stroke-width="2.4" stroke-linejoin="round"/><path d="M197,247 L254.6,353.4 A121,121 0 0 1 76.3,255.5 Z" fill="#bdbdbd" stroke="#fff" stroke-width="2.4" stroke-linejoin="round"/><path d="M197,247 L76.3,255.5 A121,121 0 0 1 133.4,144.1 Z" fill="#fab123" stroke="#fff" stroke-width="2.4" stroke-linejoin="round"/><path d="M197,247 L133.4,144.1 A121,121 0 0 1 152.7,134.4 Z" fill="#19469a" stroke="#fff" stroke-width="2.4" stroke-linejoin="round"/><path d="M197,247 L152.7,134.4 A121,121 0 0 1 181.7,127.0 Z" fill="#7f3a11" stroke="#fff" stroke-width="2.4" stroke-linejoin="round"/><path d="M197,247 L181.7,127.0 A121,121 0 0 1 197.0,126.0 Z" fill="#70ad47" stroke="#fff" stroke-width="2.4" stroke-linejoin="round"/><text x="197" y="53" font-size="13.44" text-anchor="middle" fill="#111" font-weight="bold" stroke="#111" stroke-width="1.5">2015</text><text x="233.9" y="171.1" font-size="12.88" text-anchor="middle" fill="#fff" font-weight="bold" stroke="#fff" stroke-width="0.9">13,6%</text><text x="283.5" y="267.1" font-size="12.88" text-anchor="middle" fill="#fff" font-weight="bold" stroke="#fff" stroke-width="0.9">28,0%</text><text x="154.6" y="328.1" font-size="12.88" text-anchor="middle" fill="#333" font-weight="bold" stroke="#333" stroke-width="0.9">31,4%</text><text x="116.9" y="209.9" font-size="12.88" text-anchor="middle" fill="#333" font-weight="bold" stroke="#333" stroke-width="0.9">17,1%</text><text x="112" y="101" font-size="12.88" text-anchor="middle" fill="#111" font-weight="bold" stroke="#111" stroke-width="1.0">2,8%</text><path d="M112,106 L147.7,148.6" fill="none" stroke="#b0b0b0" stroke-width="1.6"/><text x="152" y="101" font-size="12.88" text-anchor="middle" fill="#111" font-weight="bold" stroke="#111" stroke-width="1.0">3,9%</text><path d="M152,106 L169.7,140.5" fill="none" stroke="#b0b0b0" stroke-width="1.6"/><text x="192" y="101" font-size="12.88" text-anchor="middle" fill="#111" font-weight="bold" stroke="#111" stroke-width="1.0">2,0%</text><path d="M192,106 L190.0,137.2" fill="none" stroke="#b0b0b0" stroke-width="1.6"/><path d="M533,247 L533.0,126.0 A121,121 0 0 1 645.4,202.2 Z" fill="#1ea0e2" stroke="#fff" stroke-width="2.4" stroke-linejoin="round"/><path d="M533,247 L645.4,202.2 A121,121 0 0 1 476.7,354.1 Z" fill="#ec7626" stroke="#fff" stroke-width="2.4" stroke-linejoin="round"/><path d="M533,247 L476.7,354.1 A121,121 0 0 1 428.0,186.9 Z" fill="#bdbdbd" stroke="#fff" stroke-width="2.4" stroke-linejoin="round"/><path d="M533,247 L428.0,186.9 A121,121 0 0 1 481.5,137.5 Z" fill="#fab123" stroke="#fff" stroke-width="2.4" stroke-linejoin="round"/><path d="M533,247 L481.5,137.5 A121,121 0 0 1 504.0,129.5 Z" fill="#19469a" stroke="#fff" stroke-width="2.4" stroke-linejoin="round"/><path d="M533,247 L504.0,129.5 A121,121 0 0 1 519.9,126.7 Z" fill="#7f3a11" stroke="#fff" stroke-width="2.4" stroke-linejoin="round"/><path d="M533,247 L519.9,126.7 A121,121 0 0 1 533.0,126.0 Z" fill="#70ad47" stroke="#fff" stroke-width="2.4" stroke-linejoin="round"/><text x="533" y="53" font-size="13.44" text-anchor="middle" fill="#111" font-weight="bold" stroke="#111" stroke-width="1.5">2016</text><text x="582.4" y="178.2" font-size="12.88" text-anchor="middle" fill="#fff" font-weight="bold" stroke="#fff" stroke-width="0.9">18,7%</text><text x="591.9" y="316.4" font-size="12.88" text-anchor="middle" fill="#fff" font-weight="bold" stroke="#fff" stroke-width="0.9">38,2%</text><text x="448.5" y="275.6" font-size="12.88" text-anchor="middle" fill="#333" font-weight="bold" stroke="#333" stroke-width="0.9">25,2%</text><text x="471.9" y="184.9" font-size="12.88" text-anchor="middle" fill="#333" font-weight="bold" stroke="#333" stroke-width="0.9">9,6%</text><text x="448" y="101" font-size="12.88" text-anchor="middle" fill="#111" font-weight="bold" stroke="#111" stroke-width="1.0">3,1%</text><path d="M448,106 L496.2,143.3" fill="none" stroke="#b0b0b0" stroke-width="1.6"/><text x="488" y="101" font-size="12.88" text-anchor="middle" fill="#111" font-weight="bold" stroke="#111" stroke-width="1.0">2,1%</text><path d="M488,106 L513.8,138.7" fill="none" stroke="#b0b0b0" stroke-width="1.6"/><text x="528" y="101" font-size="12.88" text-anchor="middle" fill="#111" font-weight="bold" stroke="#111" stroke-width="1.0">1,7%</text><path d="M528,106 L527.0,137.2" fill="none" stroke="#b0b0b0" stroke-width="1.6"/><path d="M870,247 L870.0,126.0 A121,121 0 0 1 981.2,199.3 Z" fill="#1ea0e2" stroke="#fff" stroke-width="2.4" stroke-linejoin="round"/><path d="M870,247 L981.2,199.3 A121,121 0 0 1 780.2,328.1 Z" fill="#ec7626" stroke="#fff" stroke-width="2.4" stroke-linejoin="round"/><path d="M870,247 L780.2,328.1 A121,121 0 0 1 759.4,197.9 Z" fill="#bdbdbd" stroke="#fff" stroke-width="2.4" stroke-linejoin="round"/><path d="M870,247 L759.4,197.9 A121,121 0 0 1 819.0,137.3 Z" fill="#fab123" stroke="#fff" stroke-width="2.4" stroke-linejoin="round"/><path d="M870,247 L819.0,137.3 A121,121 0 0 1 843.9,128.9 Z" fill="#19469a" stroke="#fff" stroke-width="2.4" stroke-linejoin="round"/><path d="M870,247 L843.9,128.9 A121,121 0 0 1 853.8,127.1 Z" fill="#7f3a11" stroke="#fff" stroke-width="2.4" stroke-linejoin="round"/><path d="M870,247 L853.8,127.1 A121,121 0 0 1 870.0,126.0 Z" fill="#70ad47" stroke="#fff" stroke-width="2.4" stroke-linejoin="round"/><text x="870" y="53" font-size="13.44" text-anchor="middle" fill="#111" font-weight="bold" stroke="#111" stroke-width="1.5">2017</text><text x="918.4" y="177.5" font-size="12.88" text-anchor="middle" fill="#fff" font-weight="bold" stroke="#fff" stroke-width="0.9">18,2%</text><text x="917.5" y="325.1" font-size="12.88" text-anchor="middle" fill="#fff" font-weight="bold" stroke="#fff" stroke-width="0.9">43,9%</text><text x="783.1" y="264.9" font-size="12.88" text-anchor="middle" fill="#333" font-weight="bold" stroke="#333" stroke-width="0.9">18,0%</text><text x="805.8" y="187.9" font-size="12.88" text-anchor="middle" fill="#333" font-weight="bold" stroke="#333" stroke-width="0.9">11,2%</text><text x="785" y="101" font-size="12.88" text-anchor="middle" fill="#111" font-weight="bold" stroke="#111" stroke-width="1.0">3,4%</text><path d="M785,106 L834.7,142.8" fill="none" stroke="#b0b0b0" stroke-width="1.6"/><text x="825" y="101" font-size="12.88" text-anchor="middle" fill="#111" font-weight="bold" stroke="#111" stroke-width="1.0">1,3%</text><path d="M825,106 L850.7,138.7" fill="none" stroke="#b0b0b0" stroke-width="1.6"/><text x="865" y="101" font-size="12.88" text-anchor="middle" fill="#111" font-weight="bold" stroke="#111" stroke-width="1.0">2,1%</text><path d="M865,106 L862.6,137.2" fill="none" stroke="#b0b0b0" stroke-width="1.6"/><rect x="75.0" y="401.0" width="17.0" height="17.0" fill="#1ea0e2"/><text x="99" y="414" font-size="13.44" text-anchor="start" fill="#111" stroke="#111" stroke-width="0.8">Non specificato</text><rect x="243.0" y="401.0" width="17.0" height="17.0" fill="#ec7626"/><text x="267" y="414" font-size="13.44" text-anchor="start" fill="#111" stroke="#111" stroke-width="0.8">Duty free</text><rect x="372.0" y="401.0" width="17.0" height="17.0" fill="#bdbdbd"/><text x="396" y="414" font-size="13.44" text-anchor="start" fill="#111" stroke="#111" stroke-width="0.8">Est Europa e Balcani</text><rect x="575.0" y="401.0" width="17.0" height="17.0" fill="#fab123"/><text x="599" y="414" font-size="13.44" text-anchor="start" fill="#111" stroke="#111" stroke-width="0.8">Paesi UE</text><rect x="700.0" y="401.0" width="17.0" height="17.0" fill="#7f3a11"/><text x="724" y="414" font-size="13.44" text-anchor="start" fill="#111" stroke="#111" stroke-width="0.8">Asia</text><rect x="797.0" y="401.0" width="17.0" height="17.0" fill="#19469a"/><text x="821" y="414" font-size="13.44" text-anchor="start" fill="#111" stroke="#111" stroke-width="0.8">Nord Africa</text><rect x="940.0" y="401.0" width="17.0" height="17.0" fill="#70ad47"/><text x="964" y="414" font-size="13.44" text-anchor="start" fill="#111" stroke="#111" stroke-width="0.8">Altro</text></g></g>
<rect x="100.5" y="634.5" width="211.90" height="141.90" fill="none" stroke="#959595" stroke-width="1"/>
</g>
<g class="artboard">
<clipPath id="ab13"><rect x="335.8" y="634.5" width="211.60" height="141.90"/></clipPath>
<g clip-path="url(#ab13)"><g transform="translate(325,625) scale(0.218182)"><rect x="430.0" y="72.0" width="16.0" height="16.0" fill="#fab123"/><text x="452" y="85" font-size="12.88" text-anchor="start" fill="#111" stroke="#111" stroke-width="0.8">Marchi noti</text><rect x="540.0" y="72.0" width="16.0" height="16.0" fill="#19469a"/><text x="562" y="85" font-size="12.88" text-anchor="start" fill="#111" stroke="#111" stroke-width="0.8">Illicit whites</text><text x="72" y="114.0" font-size="11.76" text-anchor="middle" fill="#111" stroke="#111" stroke-width="0.8">25%</text><text x="72" y="152.2" font-size="11.76" text-anchor="middle" fill="#111" stroke="#111" stroke-width="0.8">20%</text><text x="72" y="190.4" font-size="11.76" text-anchor="middle" fill="#111" stroke="#111" stroke-width="0.8">15%</text><text x="72" y="228.6" font-size="11.76" text-anchor="middle" fill="#111" stroke="#111" stroke-width="0.8">10%</text><text x="72" y="266.8" font-size="11.76" text-anchor="middle" fill="#111" stroke="#111" stroke-width="0.8">5%</text><text x="72" y="305.0" font-size="11.76" text-anchor="middle" fill="#111" stroke="#111" stroke-width="0.8">0%</text><path d="M92,110 V301 M400,110 V301 M707,110 V301" fill="none" stroke="#d0d0d0" stroke-width="2"/><path d="M92,301 H1018" fill="none" stroke="#cfcfcf" stroke-width="2.4"/><rect x="111.5" y="115.0" width="21.0" height="186.0" fill="#fab123"/><text x="122" y="104" font-size="12.88" text-anchor="middle" fill="#111" font-weight="bold" stroke="#111" stroke-width="1.5">24,2%</text><text x="130" y="313" font-size="12.88" text-anchor="end" fill="#111" transform="rotate(-90 130 313)" stroke="#111" stroke-width="1.2">Marlboro</text><rect x="175.5" y="256.0" width="21.0" height="45.0" fill="#fab123"/><text x="186" y="245" font-size="12.88" text-anchor="middle" fill="#111" font-weight="bold" stroke="#111" stroke-width="1.5">5,6%</text><text x="194" y="313" font-size="12.88" text-anchor="end" fill="#111" transform="rotate(-90 194 313)" stroke="#111" stroke-width="1.2">Winston</text><rect x="237.5" y="271.0" width="21.0" height="30.0" fill="#fab123"/><text x="248" y="260" font-size="12.88" text-anchor="middle" fill="#111" font-weight="bold" stroke="#111" stroke-width="1.5">3,6%</text><text x="256" y="313" font-size="12.88" text-anchor="end" fill="#111" transform="rotate(-90 256 313)" stroke="#111" stroke-width="1.2">Chesterfield</text><rect x="299.5" y="279.0" width="21.0" height="22.0" fill="#fab123"/><text x="310" y="268" font-size="12.88" text-anchor="middle" fill="#111" font-weight="bold" stroke="#111" stroke-width="1.5">2,6%</text><text x="318" y="313" font-size="12.88" text-anchor="end" fill="#111" transform="rotate(-90 318 313)" stroke="#111" stroke-width="1.2">L&amp;M</text><rect x="361.5" y="280.0" width="21.0" height="21.0" fill="#fab123"/><text x="372" y="269" font-size="12.88" text-anchor="middle" fill="#111" font-weight="bold" stroke="#111" stroke-width="1.5">2,5%</text><text x="380" y="313" font-size="12.88" text-anchor="end" fill="#111" transform="rotate(-90 380 313)" stroke="#111" stroke-width="1.2">Camel</text><rect x="419.5" y="155.0" width="21.0" height="146.0" fill="#fab123"/><text x="430" y="144" font-size="12.88" text-anchor="middle" fill="#111" font-weight="bold" stroke="#111" stroke-width="1.5">18,9%</text><text x="438" y="313" font-size="12.88" text-anchor="end" fill="#111" transform="rotate(-90 438 313)" stroke="#111" stroke-width="1.2">Marlboro</text><rect x="480.5" y="250.0" width="21.0" height="51.0" fill="#fab123"/><text x="491" y="239" font-size="12.88" text-anchor="middle" fill="#111" font-weight="bold" stroke="#111" stroke-width="1.5">6,4%</text><text x="499" y="313" font-size="12.88" text-anchor="end" fill="#111" transform="rotate(-90 499 313)" stroke="#111" stroke-width="1.2">Winston</text><rect x="544.5" y="267.0" width="21.0" height="34.0" fill="#fab123"/><text x="555" y="256" font-size="12.88" text-anchor="middle" fill="#111" font-weight="bold" stroke="#111" stroke-width="1.5">4,2%</text><text x="563" y="313" font-size="12.88" text-anchor="end" fill="#111" transform="rotate(-90 563 313)" stroke="#111" stroke-width="1.2">Chesterfield</text><rect x="607.5" y="271.0" width="21.0" height="30.0" fill="#fab123"/><text x="618" y="260" font-size="12.88" text-anchor="middle" fill="#111" font-weight="bold" stroke="#111" stroke-width="1.5">3,6%</text><text x="626" y="313" font-size="12.88" text-anchor="end" fill="#111" transform="rotate(-90 626 313)" stroke="#111" stroke-width="1.2">Rothmans</text><rect x="669.5" y="276.0" width="21.0" height="25.0" fill="#fab123"/><text x="680" y="265" font-size="12.88" text-anchor="middle" fill="#111" font-weight="bold" stroke="#111" stroke-width="1.5">3,0%</text><text x="688" y="313" font-size="12.88" text-anchor="end" fill="#111" transform="rotate(-90 688 313)" stroke="#111" stroke-width="1.2">L&amp;M</text><rect x="726.5" y="156.0" width="21.0" height="145.0" fill="#fab123"/><text x="737" y="145" font-size="12.88" text-anchor="middle" fill="#111" font-weight="bold" stroke="#111" stroke-width="1.5">18,8%</text><text x="745" y="313" font-size="12.88" text-anchor="end" fill="#111" transform="rotate(-90 745 313)" stroke="#111" stroke-width="1.2">Marlboro</text><rect x="788.5" y="255.0" width="21.0" height="46.0" fill="#fab123"/><text x="799" y="244" font-size="12.88" text-anchor="middle" fill="#111" font-weight="bold" stroke="#111" stroke-width="1.5">5,8%</text><text x="807" y="313" font-size="12.88" text-anchor="end" fill="#111" transform="rotate(-90 807 313)" stroke="#111" stroke-width="1.2">Winston</text><rect x="851.5" y="257.0" width="21.0" height="44.0" fill="#fab123"/><text x="862" y="246" font-size="12.88" text-anchor="middle" fill="#111" font-weight="bold" stroke="#111" stroke-width="1.5">5,4%</text><text x="870" y="313" font-size="12.88" text-anchor="end" fill="#111" transform="rotate(-90 870 313)" stroke="#111" stroke-width="1.2">Rothmans</text><rect x="914.5" y="279.0" width="21.0" height="22.0" fill="#fab123"/><text x="925" y="268" font-size="12.88" text-anchor="middle" fill="#111" font-weight="bold" stroke="#111" stroke-width="1.5">2,6%</text><text x="933" y="313" font-size="12.88" text-anchor="end" fill="#111" transform="rotate(-90 933 313)" stroke="#111" stroke-width="1.2">Chesterfield</text><rect x="977.5" y="279.0" width="21.0" height="22.0" fill="#fab123"/><text x="988" y="268" font-size="12.88" text-anchor="middle" fill="#111" font-weight="bold" stroke="#111" stroke-width="1.5">2,7%</text><text x="996" y="313" font-size="12.88" text-anchor="end" fill="#111" transform="rotate(-90 996 313)" stroke="#111" stroke-width="1.2">L&amp;M</text><text x="246" y="122" font-size="13.44" text-anchor="middle" fill="#111" font-weight="bold" stroke="#111" stroke-width="1.5">2015</text><text x="555" y="122" font-size="13.44" text-anchor="middle" fill="#111" font-weight="bold" stroke="#111" stroke-width="1.5">2016</text><text x="862" y="122" font-size="13.44" text-anchor="middle" fill="#111" font-weight="bold" stroke="#111" stroke-width="1.5">2017</text><text x="72" y="417.0" font-size="11.76" text-anchor="middle" fill="#111" stroke="#111" stroke-width="0.8">25%</text><text x="72" y="455.2" font-size="11.76" text-anchor="middle" fill="#111" stroke="#111" stroke-width="0.8">20%</text><text x="72" y="493.4" font-size="11.76" text-anchor="middle" fill="#111" stroke="#111" stroke-width="0.8">15%</text><text x="72" y="531.6" font-size="11.76" text-anchor="middle" fill="#111" stroke="#111" stroke-width="0.8">10%</text><text x="72" y="569.8" font-size="11.76" text-anchor="middle" fill="#111" stroke="#111" stroke-width="0.8">5%</text><text x="72" y="608.0" font-size="11.76" text-anchor="middle" fill="#111" stroke="#111" stroke-width="0.8">0%</text><path d="M92,413 V604 M400,413 V604 M707,413 V604" fill="none" stroke="#d0d0d0" stroke-width="2"/><path d="M92,604 H1018" fill="none" stroke="#cfcfcf" stroke-width="2.4"/><rect x="111.5" y="561.0" width="21.0" height="43.0" fill="#19469a"/><text x="122" y="550" font-size="12.88" text-anchor="middle" fill="#111" font-weight="bold" stroke="#111" stroke-width="1.5">5,4%</text><text x="130" y="616" font-size="12.88" text-anchor="end" fill="#111" transform="rotate(-90 130 616)" stroke="#111" stroke-width="1.2">Minsk</text><rect x="175.5" y="569.0" width="21.0" height="35.0" fill="#19469a"/><text x="186" y="558" font-size="12.88" text-anchor="middle" fill="#111" font-weight="bold" stroke="#111" stroke-width="1.5">4,4%</text><text x="194" y="616" font-size="12.88" text-anchor="end" fill="#111" transform="rotate(-90 194 616)" stroke="#111" stroke-width="1.2">American</text><rect x="237.5" y="574.0" width="21.0" height="30.0" fill="#19469a"/><text x="248" y="563" font-size="12.88" text-anchor="middle" fill="#111" font-weight="bold" stroke="#111" stroke-width="1.5">3,8%</text><text x="256" y="616" font-size="12.88" text-anchor="end" fill="#111" transform="rotate(-90 256 616)" stroke="#111" stroke-width="1.2">Regina</text><rect x="299.5" y="576.0" width="21.0" height="28.0" fill="#19469a"/><text x="310" y="565" font-size="12.88" text-anchor="middle" fill="#111" font-weight="bold" stroke="#111" stroke-width="1.5">3,5%</text><text x="318" y="616" font-size="12.88" text-anchor="end" fill="#111" transform="rotate(-90 318 616)" stroke="#111" stroke-width="1.2">NZ</text><rect x="361.5" y="578.0" width="21.0" height="26.0" fill="#19469a"/><text x="372" y="567" font-size="12.88" text-anchor="middle" fill="#111" font-weight="bold" stroke="#111" stroke-width="1.5">3,3%</text><text x="380" y="616" font-size="12.88" text-anchor="end" fill="#111" transform="rotate(-90 380 616)" stroke="#111" stroke-width="1.2">Gold Mount</text><rect x="419.5" y="455.0" width="21.0" height="149.0" fill="#19469a"/><text x="430" y="444" font-size="12.88" text-anchor="middle" fill="#111" font-weight="bold" stroke="#111" stroke-width="1.5">19,5%</text><text x="438" y="616" font-size="12.88" text-anchor="end" fill="#111" transform="rotate(-90 438 616)" stroke="#111" stroke-width="1.2">Regina</text><rect x="480.5" y="563.0" width="21.0" height="41.0" fill="#19469a"/><text x="491" y="552" font-size="12.88" text-anchor="middle" fill="#111" font-weight="bold" stroke="#111" stroke-width="1.5">5,4%</text><text x="499" y="616" font-size="12.88" text-anchor="end" fill="#111" transform="rotate(-90 499 616)" stroke="#111" stroke-width="1.2">Marble</text><rect x="544.5" y="565.0" width="21.0" height="39.0" fill="#19469a"/><text x="555" y="554" font-size="12.88" text-anchor="middle" fill="#111" font-weight="bold" stroke="#111" stroke-width="1.5">5,2%</text><text x="563" y="616" font-size="12.88" text-anchor="end" fill="#111" transform="rotate(-90 563 616)" stroke="#111" stroke-width="1.2">Pine</text><rect x="607.5" y="567.0" width="21.0" height="37.0" fill="#19469a"/><text x="618" y="556" font-size="12.88" text-anchor="middle" fill="#111" font-weight="bold" stroke="#111" stroke-width="1.5">5,0%</text><text x="626" y="616" font-size="12.88" text-anchor="end" fill="#111" transform="rotate(-90 626 616)" stroke="#111" stroke-width="1.2">Gold Mount</text><rect x="669.5" y="583.0" width="21.0" height="21.0" fill="#19469a"/><text x="680" y="572" font-size="12.88" text-anchor="middle" fill="#111" font-weight="bold" stroke="#111" stroke-width="1.5">2,7%</text><text x="688" y="616" font-size="12.88" text-anchor="end" fill="#111" transform="rotate(-90 688 616)" stroke="#111" stroke-width="1.2">Minsk</text><rect x="726.5" y="471.0" width="21.0" height="133.0" fill="#19469a"/><text x="737" y="460" font-size="12.88" text-anchor="middle" fill="#111" font-weight="bold" stroke="#111" stroke-width="1.5">17,2%</text><text x="745" y="616" font-size="12.88" text-anchor="end" fill="#111" transform="rotate(-90 745 616)" stroke="#111" stroke-width="1.2">Regina</text><rect x="788.5" y="562.0" width="21.0" height="42.0" fill="#19469a"/><text x="799" y="551" font-size="12.88" text-anchor="middle" fill="#111" font-weight="bold" stroke="#111" stroke-width="1.5">5,5%</text><text x="807" y="616" font-size="12.88" text-anchor="end" fill="#111" transform="rotate(-90 807 616)" stroke="#111" stroke-width="1.2">Marble</text><rect x="851.5" y="568.0" width="21.0" height="36.0" fill="#19469a"/><text x="862" y="557" font-size="12.88" text-anchor="middle" fill="#111" font-weight="bold" stroke="#111" stroke-width="1.5">4,8%</text><text x="870" y="616" font-size="12.88" text-anchor="end" fill="#111" transform="rotate(-90 870 616)" stroke="#111" stroke-width="1.2">Pine</text><rect x="914.5" y="571.0" width="21.0" height="33.0" fill="#19469a"/><text x="925" y="560" font-size="12.88" text-anchor="middle" fill="#111" font-weight="bold" stroke="#111" stroke-width="1.5">4,4%</text><text x="933" y="616" font-size="12.88" text-anchor="end" fill="#111" transform="rotate(-90 933 616)" stroke="#111" stroke-width="1.2">Compliment Royale</text><rect x="977.5" y="587.0" width="21.0" height="17.0" fill="#19469a"/><text x="988" y="576" font-size="12.88" text-anchor="middle" fill="#111" font-weight="bold" stroke="#111" stroke-width="1.5">2,2%</text><text x="996" y="616" font-size="12.88" text-anchor="end" fill="#111" transform="rotate(-90 996 616)" stroke="#111" stroke-width="1.2">Minsk</text><text x="246" y="425" font-size="13.44" text-anchor="middle" fill="#111" font-weight="bold" stroke="#111" stroke-width="1.5">2015</text><text x="555" y="425" font-size="13.44" text-anchor="middle" fill="#111" font-weight="bold" stroke="#111" stroke-width="1.5">2016</text><text x="862" y="425" font-size="13.44" text-anchor="middle" fill="#111" font-weight="bold" stroke="#111" stroke-width="1.5">2017</text></g></g>
<rect x="335.8" y="634.5" width="211.60" height="141.90" fill="none" stroke="#959595" stroke-width="1"/>
</g>
</g></svg>
</div>
</body>
</html>
